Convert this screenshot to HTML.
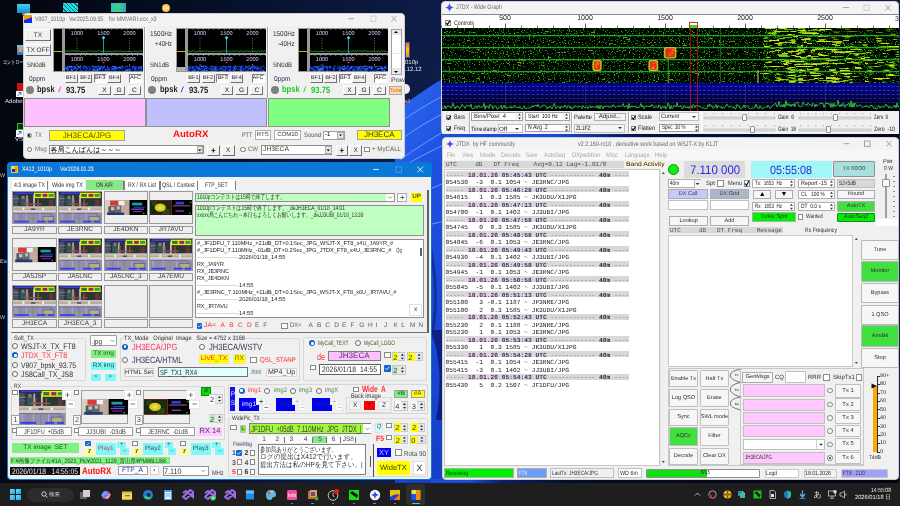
<!DOCTYPE html><html><head><meta charset="utf-8"><style>
html,body{margin:0;padding:0;width:900px;height:506px;overflow:hidden;background:#0a1228}
body{position:relative;font-family:"Liberation Sans",sans-serif;text-rendering:geometricPrecision}
div{position:absolute;box-sizing:border-box}
svg{position:absolute}
</style></head><body>
<svg style="left:0;top:0" width="900" height="506">
<defs>
<linearGradient id="bgL" x1="0" y1="0" x2="450" y2="60" gradientUnits="userSpaceOnUse"><stop offset="0" stop-color="#03060d"/><stop offset="0.5" stop-color="#07102a"/><stop offset="1" stop-color="#0e1e4a"/></linearGradient>
<linearGradient id="sw" x1="0" y1="0" x2="0.3" y2="1"><stop offset="0" stop-color="#2a6af0"/><stop offset="0.4" stop-color="#1e50e0"/><stop offset="1" stop-color="#1640c8"/></linearGradient>
</defs>
<rect width="900" height="506" fill="url(#bgL)"/>

<path d="M395 112 C 410 100, 430 85, 455 72 L 455 506 L 395 506 Z" fill="url(#sw)"/>
<g stroke="#8cc0ff" stroke-width="0.9" fill="none" opacity="0.75">
<path d="M400 122 Q 420 108 450 92"/>
<path d="M400 140 Q 420 125 450 110"/>
<path d="M400 160 Q 420 145 450 128"/>
<path d="M400 168 Q 420 156 450 142"/>
<path d="M428 190 Q 440 185 450 180"/>
<path d="M428 225 Q 440 222 450 220"/>
</g>
<path d="M431 330 Q 445 370 436 420 L 442 420 Q 450 370 442 330Z" fill="#0a1870" opacity="0.8"/>
<path d="M431 250 Q 440 300 431 340" stroke="#0a2080" stroke-width="3" fill="none" opacity="0.6"/>
</svg>
<div style="left:17px;top:4px;width:13px;height:9px;background:linear-gradient(180deg,#40d0f0,#1890c8)"></div>
<div style="left:22px;top:13px;width:4px;height:2px;background:#808080"></div>
<div style="left:63px;top:3px;width:15px;height:9px;background:repeating-linear-gradient(45deg,#20e0e0 0 2px,#106080 2px 3px)"></div>
<div style="left:111px;top:3px;width:15px;height:9px;background:linear-gradient(90deg,#30c0c0,#40d080,#30a0c0)"></div>
<div style="left:162px;top:4px;width:8px;height:8px;border-radius:50%;background:radial-gradient(#fff0a0,#f0a020)"></div>
<div style="left:17px;top:44.8px;width:7px;height:9.900000000000006px;background:linear-gradient(180deg,#80c0f0,#2070c0)"></div>
<div style="left:19px;top:47px;width:3px;height:5px;background:#f0a030"></div>
<div style="left:3px;top:59.82px;line-height:7.15px;font-size:5.5px;font-family:'Liberation Sans',sans-serif;color:#e8e8e8;white-space:pre;transform:scaleX(0.727);transform-origin:0 50%;">コントロー</div>
<div style="left:17px;top:83px;width:7px;height:7.599999999999994px;background:#d01010"></div>
<div style="left:16px;top:90.6px;width:7px;height:6.400000000000006px;background:#fff"></div>
<svg style="left:16px;top:90.6px" width="7" height="6.4"><path d="M1.5 5 L5 1.5 M2.5 1.5 H5 V4" stroke="#2060d0" stroke-width="0.9" fill="none"/></svg>
<div style="left:4.5px;top:98.60px;line-height:7.8px;font-size:6px;font-family:'Liberation Sans',sans-serif;color:#e8e8e8;white-space:pre;transform:scaleX(1.009);transform-origin:0 50%;">Adobe</div>
<div style="left:17px;top:122.8px;width:7px;height:7.200000000000003px;background:#103010;border:1px solid #30c030"></div>
<div style="left:16px;top:130px;width:7px;height:7px;background:#fff"></div>
<svg style="left:16px;top:130.3px" width="7" height="6.4"><path d="M1.5 5 L5 1.5 M2.5 1.5 H5 V4" stroke="#2060d0" stroke-width="0.9" fill="none"/></svg>
<div style="left:15px;top:136.90px;line-height:7.8px;font-size:6px;font-family:'Liberation Sans',sans-serif;color:#e8e8e8;white-space:pre;">VS</div>
<div style="left:0px;top:173.23px;line-height:7.15px;font-size:5.5px;font-family:'Liberation Sans',sans-serif;color:#c8c8c8;white-space:pre;">W</div>
<div style="left:0px;top:259.23px;line-height:7.15px;font-size:5.5px;font-family:'Liberation Sans',sans-serif;color:#c8c8c8;white-space:pre;">Ea</div>
<div style="left:0px;top:315.23px;line-height:7.15px;font-size:5.5px;font-family:'Liberation Sans',sans-serif;color:#c8c8c8;white-space:pre;">W</div>
<div style="left:405px;top:42.3px;width:5px;height:15.300000000000004px;background:linear-gradient(180deg,#ff6a00,#ffd000,#ff8000);border:0.5px solid #4040c0"></div>
<div style="left:405px;top:59.90px;line-height:7.8px;font-size:6px;font-family:'Liberation Sans',sans-serif;color:#e0e0e0;white-space:pre;">010p</div>
<div style="left:405px;top:66.90px;line-height:7.8px;font-size:6px;font-family:'Liberation Sans',sans-serif;color:#e0e0e0;white-space:pre;">.12.12</div>
<div style="left:401px;top:84px;width:9px;height:10px;border-radius:50%;background:#f0f0f0"></div>
<div style="left:404.5px;top:98.72px;line-height:7.15px;font-size:5.5px;font-family:'Liberation Sans',sans-serif;color:#ff9ab0;white-space:pre;">all</div>
<div style="left:441px;top:133px;width:458px;height:5px;background:linear-gradient(90deg,#1a4cd8 0%,#1a4cd8 25%,#0c2a90 35%,#061040 45%,#03081a 100%)"></div>
<div style="left:431px;top:479px;width:468px;height:5px;background:linear-gradient(90deg,#1a4cd8 0%,#1a4cd8 8%,#0a2070 15%,#050c28 30%,#03060f 100%)"></div>
<div style="left:23px;top:13px;width:382px;height:146px;background:#f0f0f0;border-radius:4px;border:1px solid #d0d0d0"></div>
<div style="left:24px;top:14px;width:380px;height:12px;background:#f3f3f3;border-radius:4px 4px 0 0"></div>
<div style="left:7px;top:162px;width:425px;height:318px;background:#f0f0f0;border-radius:4px;border:1px solid #0a78d7"></div>
<div style="left:7px;top:162px;width:425px;height:15px;background:#0a78d7;border-radius:4px 4px 0 0"></div>
<div style="left:441px;top:1px;width:458px;height:133px;background:#f0f0f0;border-radius:4px;border:1px solid #d0d0d0"></div>
<div style="left:442px;top:2px;width:456px;height:12px;background:#f3f3f3;border-radius:4px 4px 0 0"></div>
<div style="left:442px;top:137px;width:457px;height:343px;background:#f0f0f0;border-radius:4px;border:1px solid #d0d0d0"></div>
<div style="left:24px;top:15px;width:8px;height:8px;background:linear-gradient(160deg,#ff9a00 0%,#ff9a00 45%,#0a2cff 50%,#0a2cff 100%)"></div>
<div style="left:34.6px;top:15.58px;line-height:8.45px;font-size:6.5px;font-family:'Liberation Sans',sans-serif;color:#6a6a6a;white-space:pre;transform:scaleX(0.819);transform-origin:0 50%;">V907_1010p</div>
<div style="left:69.4px;top:15.58px;line-height:8.45px;font-size:6.5px;font-family:'Liberation Sans',sans-serif;color:#6a6a6a;white-space:pre;transform:scaleX(0.811);transform-origin:0 50%;">Ver2025.09.05</div>
<div style="left:108.9px;top:15.58px;line-height:8.45px;font-size:6.5px;font-family:'Liberation Sans',sans-serif;color:#6a6a6a;white-space:pre;transform:scaleX(0.831);transform-origin:0 50%;">for MMVARI.ocx_x3</div>
<svg style="left:340px;top:13px" width="65" height="12"><path d="M8.5 5.7 H14" stroke="#909090" stroke-width="0.8"/><rect x="31" y="3" width="5" height="5.5" fill="none" stroke="#c8c8c8" stroke-width="0.8"/><path d="M51.5 3 L56.5 8.5 M56.5 3 L51.5 8.5" stroke="#909090" stroke-width="0.8"/></svg>
<div style="left:53px;top:28px;width:90px;height:44px;background:#9a9a9a"></div>
<div style="left:54px;top:29px;width:8px;height:42px;background:#000"></div>
<div style="left:54px;top:51px;width:8px;height:1px;background:#c8b400"></div>
<div style="left:64.5px;top:29px;width:78.0px;height:24px;background:#000"></div>
<div style="left:64.5px;top:55px;width:78.0px;height:16px;background:#000"></div>
<svg style="left:53px;top:28px" width="90" height="44"><rect x="11.5" y="1" width="0.6" height="1" fill="#aaa"/><rect x="11.5" y="27" width="0.6" height="1" fill="#aaa"/><rect x="16.7" y="1" width="0.6" height="1" fill="#aaa"/><rect x="16.7" y="27" width="0.6" height="1" fill="#aaa"/><rect x="21.9" y="1" width="0.6" height="1" fill="#aaa"/><rect x="21.9" y="27" width="0.6" height="1" fill="#aaa"/><rect x="27.1" y="1" width="0.6" height="1" fill="#aaa"/><rect x="27.1" y="27" width="0.6" height="1" fill="#aaa"/><rect x="32.3" y="1" width="0.6" height="1" fill="#aaa"/><rect x="32.3" y="27" width="0.6" height="1" fill="#aaa"/><rect x="37.5" y="1" width="0.6" height="1" fill="#aaa"/><rect x="37.5" y="27" width="0.6" height="1" fill="#aaa"/><rect x="42.7" y="1" width="0.6" height="1" fill="#aaa"/><rect x="42.7" y="27" width="0.6" height="1" fill="#aaa"/><rect x="47.9" y="1" width="0.6" height="1" fill="#aaa"/><rect x="47.9" y="27" width="0.6" height="1" fill="#aaa"/><rect x="53.1" y="1" width="0.6" height="1" fill="#aaa"/><rect x="53.1" y="27" width="0.6" height="1" fill="#aaa"/><rect x="58.3" y="1" width="0.6" height="1" fill="#aaa"/><rect x="58.3" y="27" width="0.6" height="1" fill="#aaa"/><rect x="63.5" y="1" width="0.6" height="1" fill="#aaa"/><rect x="63.5" y="27" width="0.6" height="1" fill="#aaa"/><rect x="68.7" y="1" width="0.6" height="1" fill="#aaa"/><rect x="68.7" y="27" width="0.6" height="1" fill="#aaa"/><rect x="73.9" y="1" width="0.6" height="1" fill="#aaa"/><rect x="73.9" y="27" width="0.6" height="1" fill="#aaa"/><rect x="79.1" y="1" width="0.6" height="1" fill="#aaa"/><rect x="79.1" y="27" width="0.6" height="1" fill="#aaa"/><rect x="84.3" y="1" width="0.6" height="1" fill="#aaa"/><rect x="84.3" y="27" width="0.6" height="1" fill="#aaa"/><rect x="89.5" y="1" width="0.6" height="1" fill="#aaa"/><rect x="89.5" y="27" width="0.6" height="1" fill="#aaa"/><line x1="24" y1="10" x2="24" y2="24" stroke="#bbb" stroke-width="0.6" stroke-dasharray="1 1.5"/><line x1="24" y1="36" x2="24" y2="38" stroke="#bbb" stroke-width="0.6"/><line x1="76.5" y1="10" x2="76.5" y2="24" stroke="#bbb" stroke-width="0.6" stroke-dasharray="1 1.5"/><line x1="76.5" y1="36" x2="76.5" y2="38" stroke="#bbb" stroke-width="0.6"/><polyline points="11.5,23.1 12.5,22.9 13.5,23.5 14.5,22.8 15.5,23.3 16.5,23.1 17.5,22.8 18.5,23.3 19.5,22.7 20.5,23.2 21.5,22.8 22.5,22.8 23.5,23.2 24.5,23.7 25.5,22.8 26.5,23.0 27.5,23.5 28.5,23.8 29.5,23.4 30.5,23.2 31.5,23.9 32.5,22.8 33.5,23.7 34.5,23.0 35.5,22.9 36.5,22.8 37.5,23.1 38.5,23.7 39.5,22.9 40.5,23.4 41.5,23.5 42.5,23.1 43.5,23.4 44.5,22.8 45.5,22.8 46.5,22.9 47.5,23.5 48.5,23.2 49.5,23.1 50.5,23.4 51.5,23.2 52.5,23.1 53.5,23.7 54.5,23.5 55.5,23.0 56.5,23.4 57.5,23.3 58.5,23.8 59.5,23.6 60.5,23.0 61.5,23.9 62.5,22.8 63.5,23.2 64.5,23.6 65.5,22.9 66.5,23.3 67.5,22.7 68.5,23.5 69.5,23.6 70.5,23.4 71.5,23.8 72.5,23.1 73.5,23.5 74.5,23.4 75.5,23.4 76.5,23.2 77.5,23.7 78.5,23.8 79.5,23.3 80.5,23.5 81.5,22.8 82.5,23.5 83.5,23.5 84.5,23.9 85.5,23.7 86.5,23.0 87.5,23.2 88.5,23.5 89.5,22.7" stroke="#1ec81e" stroke-width="0.8" fill="none"/><line x1="50.5" y1="10" x2="50.5" y2="25" stroke="#19c8c8" stroke-width="0.8"/><path d="M50.5 8 L52.3 9.8 L50.5 11.6 L48.7 9.8 Z" fill="#33f0f0"/><rect x="47.1" y="38.4" width="1.2" height="0.9" fill="#1030ff"/><rect x="49.5" y="38.6" width="1.2" height="0.9" fill="#0a20c0"/><rect x="21.5" y="38.8" width="1.2" height="0.9" fill="#40a0ff"/><rect x="82.1" y="40.0" width="1.2" height="0.9" fill="#2060ff"/><rect x="46.1" y="40.3" width="1.2" height="0.9" fill="#2060ff"/><rect x="74.6" y="41.9" width="1.2" height="0.9" fill="#0a20c0"/><rect x="65.9" y="42.5" width="1.2" height="0.9" fill="#40a0ff"/><rect x="85.2" y="38.3" width="1.2" height="0.9" fill="#2060ff"/><rect x="23.1" y="40.9" width="1.2" height="0.9" fill="#1030ff"/><rect x="48.8" y="40.5" width="1.2" height="0.9" fill="#0a20c0"/><rect x="33.2" y="38.2" width="1.2" height="0.9" fill="#1840e0"/><rect x="39.9" y="40.4" width="1.2" height="0.9" fill="#2060ff"/><rect x="64.7" y="40.1" width="1.2" height="0.9" fill="#1840e0"/><rect x="61.9" y="41.3" width="1.2" height="0.9" fill="#40a0ff"/><rect x="80.8" y="41.5" width="1.2" height="0.9" fill="#1840e0"/><rect x="41.7" y="39.5" width="1.2" height="0.9" fill="#1030ff"/><rect x="48.6" y="39.5" width="1.2" height="0.9" fill="#2060ff"/><rect x="16.7" y="38.6" width="1.2" height="0.9" fill="#2060ff"/><rect x="20.0" y="40.6" width="1.2" height="0.9" fill="#1030ff"/><rect x="11.5" y="38.3" width="1.2" height="0.9" fill="#1030ff"/><rect x="84.6" y="40.6" width="1.2" height="0.9" fill="#1030ff"/><rect x="78.8" y="40.6" width="1.2" height="0.9" fill="#2060ff"/><rect x="60.3" y="42.4" width="1.2" height="0.9" fill="#1840e0"/><rect x="39.5" y="38.1" width="1.2" height="0.9" fill="#40a0ff"/><rect x="88.0" y="39.9" width="1.2" height="0.9" fill="#40a0ff"/><rect x="35.5" y="38.2" width="1.2" height="0.9" fill="#0a20c0"/><rect x="68.5" y="39.9" width="1.2" height="0.9" fill="#2060ff"/><rect x="51.3" y="38.5" width="1.2" height="0.9" fill="#1840e0"/><rect x="39.4" y="41.0" width="1.2" height="0.9" fill="#1030ff"/><rect x="69.9" y="39.0" width="1.2" height="0.9" fill="#1030ff"/><rect x="65.1" y="38.8" width="1.2" height="0.9" fill="#0a20c0"/><rect x="81.4" y="39.3" width="1.2" height="0.9" fill="#2060ff"/><rect x="52.5" y="41.5" width="1.2" height="0.9" fill="#0a20c0"/><rect x="60.5" y="40.6" width="1.2" height="0.9" fill="#2060ff"/><rect x="73.6" y="41.7" width="1.2" height="0.9" fill="#2060ff"/><rect x="26.9" y="40.0" width="1.2" height="0.9" fill="#1030ff"/><rect x="87.7" y="41.5" width="1.2" height="0.9" fill="#40a0ff"/><rect x="31.5" y="41.0" width="1.2" height="0.9" fill="#0a20c0"/><rect x="45.9" y="42.3" width="1.2" height="0.9" fill="#0a20c0"/><rect x="85.0" y="39.4" width="1.2" height="0.9" fill="#2060ff"/><rect x="19.4" y="39.9" width="1.2" height="0.9" fill="#0a20c0"/><rect x="27.2" y="40.7" width="1.2" height="0.9" fill="#1840e0"/><rect x="76.2" y="39.9" width="1.2" height="0.9" fill="#0a20c0"/><rect x="73.1" y="37.9" width="1.2" height="0.9" fill="#1030ff"/><rect x="81.6" y="41.5" width="1.2" height="0.9" fill="#2060ff"/><rect x="48.3" y="38.4" width="1.2" height="0.9" fill="#0a20c0"/><rect x="18.2" y="42.3" width="1.2" height="0.9" fill="#40a0ff"/><rect x="47.2" y="41.3" width="1.2" height="0.9" fill="#1030ff"/><rect x="67.3" y="38.4" width="1.2" height="0.9" fill="#2060ff"/><rect x="13.6" y="40.5" width="1.2" height="0.9" fill="#40a0ff"/><rect x="73.6" y="38.2" width="1.2" height="0.9" fill="#1840e0"/><rect x="87.0" y="40.9" width="1.2" height="0.9" fill="#0a20c0"/><rect x="23.5" y="40.3" width="1.2" height="0.9" fill="#1030ff"/><rect x="12.6" y="42.5" width="1.2" height="0.9" fill="#1030ff"/><rect x="52.0" y="42.3" width="1.2" height="0.9" fill="#40a0ff"/><rect x="87.5" y="38.5" width="1.2" height="0.9" fill="#2060ff"/><rect x="13.7" y="38.6" width="1.2" height="0.9" fill="#1840e0"/><rect x="30.0" y="40.5" width="1.2" height="0.9" fill="#0a20c0"/><rect x="53.4" y="41.8" width="1.2" height="0.9" fill="#1030ff"/><rect x="81.6" y="39.3" width="1.2" height="0.9" fill="#40a0ff"/><rect x="62.5" y="41.7" width="1.2" height="0.9" fill="#1840e0"/><rect x="43.9" y="42.2" width="1.2" height="0.9" fill="#1840e0"/><rect x="21.6" y="38.3" width="1.2" height="0.9" fill="#1840e0"/><rect x="12.9" y="39.7" width="1.2" height="0.9" fill="#2060ff"/><rect x="58.4" y="41.5" width="1.2" height="0.9" fill="#2060ff"/><rect x="24.8" y="39.9" width="1.2" height="0.9" fill="#1030ff"/><rect x="54.3" y="39.2" width="1.2" height="0.9" fill="#1840e0"/><rect x="52.4" y="40.0" width="1.2" height="0.9" fill="#1030ff"/><rect x="79.5" y="37.8" width="1.2" height="0.9" fill="#2060ff"/><rect x="32.8" y="41.4" width="1.2" height="0.9" fill="#1840e0"/><rect x="46.3" y="37.6" width="1.2" height="0.9" fill="#1030ff"/><rect x="45.6" y="40.6" width="1.2" height="0.9" fill="#1840e0"/><rect x="58.2" y="38.5" width="1.2" height="0.9" fill="#0a20c0"/><rect x="46.3" y="40.2" width="1.2" height="0.9" fill="#40a0ff"/><rect x="50.6" y="38.8" width="1.2" height="0.9" fill="#1840e0"/><rect x="79.0" y="42.3" width="1.2" height="0.9" fill="#0a20c0"/><rect x="82.6" y="42.1" width="1.2" height="0.9" fill="#2060ff"/><rect x="76.2" y="38.2" width="1.2" height="0.9" fill="#1030ff"/><rect x="41.7" y="39.1" width="1.2" height="0.9" fill="#2060ff"/><rect x="44.5" y="38.6" width="1.2" height="0.9" fill="#0a20c0"/><rect x="71.9" y="42.1" width="1.2" height="0.9" fill="#2060ff"/><rect x="83.8" y="40.8" width="1.2" height="0.9" fill="#0a20c0"/><rect x="22.5" y="42.0" width="1.2" height="0.9" fill="#40a0ff"/><rect x="28.4" y="42.4" width="1.2" height="0.9" fill="#40a0ff"/><rect x="79.6" y="38.3" width="1.2" height="0.9" fill="#2060ff"/><rect x="23.9" y="39.7" width="1.2" height="0.9" fill="#1840e0"/><rect x="42.6" y="39.6" width="1.2" height="0.9" fill="#0a20c0"/><rect x="36.0" y="41.2" width="1.2" height="0.9" fill="#1030ff"/><rect x="37.5" y="39.8" width="1.2" height="0.9" fill="#1030ff"/><rect x="41.1" y="40.1" width="1.2" height="0.9" fill="#0a20c0"/><rect x="50.9" y="37.8" width="1.2" height="0.9" fill="#2060ff"/><rect x="86.3" y="38.0" width="1.2" height="0.9" fill="#0a20c0"/><rect x="32.4" y="42.1" width="1.2" height="0.9" fill="#2060ff"/><rect x="32.3" y="38.2" width="1.2" height="0.9" fill="#40a0ff"/><rect x="76.9" y="40.9" width="1.2" height="0.9" fill="#0a20c0"/><rect x="42.8" y="40.2" width="1.2" height="0.9" fill="#1840e0"/><rect x="55.4" y="41.1" width="1.2" height="0.9" fill="#1030ff"/><rect x="33.0" y="41.6" width="1.2" height="0.9" fill="#2060ff"/><rect x="44.2" y="37.9" width="1.2" height="0.9" fill="#1030ff"/><rect x="60.4" y="41.6" width="1.2" height="0.9" fill="#1030ff"/><rect x="58.3" y="38.6" width="1.2" height="0.9" fill="#0a20c0"/><rect x="77.9" y="39.8" width="1.2" height="0.9" fill="#0a20c0"/><rect x="88.1" y="39.6" width="1.2" height="0.9" fill="#0a20c0"/><rect x="59.4" y="37.7" width="1.2" height="0.9" fill="#2060ff"/><rect x="83.7" y="42.4" width="1.2" height="0.9" fill="#0a20c0"/><rect x="15.4" y="38.5" width="1.2" height="0.9" fill="#0a20c0"/><rect x="59.9" y="40.2" width="1.2" height="0.9" fill="#2060ff"/><rect x="33.8" y="40.1" width="1.2" height="0.9" fill="#2060ff"/><rect x="32.3" y="41.6" width="1.2" height="0.9" fill="#0a20c0"/><rect x="14.3" y="37.6" width="1.2" height="0.9" fill="#1840e0"/><rect x="53.9" y="38.5" width="1.2" height="0.9" fill="#40a0ff"/><rect x="30.4" y="39.8" width="1.2" height="0.9" fill="#40a0ff"/><rect x="62.1" y="40.3" width="1.2" height="0.9" fill="#40a0ff"/><rect x="86.2" y="39.1" width="1.2" height="0.9" fill="#2060ff"/><rect x="87.1" y="39.2" width="1.2" height="0.9" fill="#2060ff"/><rect x="42.7" y="39.3" width="1.2" height="0.9" fill="#1030ff"/><rect x="75.9" y="37.6" width="1.2" height="0.9" fill="#0a20c0"/><rect x="44.7" y="37.8" width="1.2" height="0.9" fill="#40a0ff"/><rect x="78.5" y="40.9" width="1.2" height="0.9" fill="#0a20c0"/><rect x="57.6" y="41.0" width="1.2" height="0.9" fill="#1030ff"/><rect x="46.9" y="38.3" width="1.2" height="0.9" fill="#40a0ff"/><rect x="11.8" y="39.4" width="1.2" height="0.9" fill="#0a20c0"/><rect x="86.4" y="40.3" width="1.2" height="0.9" fill="#2060ff"/><rect x="14.2" y="42.0" width="1.2" height="0.9" fill="#2060ff"/><rect x="39.0" y="37.5" width="1.2" height="0.9" fill="#40a0ff"/><rect x="18.0" y="38.9" width="1.2" height="0.9" fill="#2060ff"/><rect x="30.6" y="41.5" width="1.2" height="0.9" fill="#1030ff"/><rect x="31.8" y="38.0" width="1.2" height="0.9" fill="#40a0ff"/><rect x="56.7" y="39.5" width="1.2" height="0.9" fill="#0a20c0"/><rect x="34.9" y="38.7" width="1.2" height="0.9" fill="#1840e0"/><rect x="85.2" y="41.9" width="1.2" height="0.9" fill="#2060ff"/><rect x="62.1" y="41.2" width="1.2" height="0.9" fill="#1840e0"/><rect x="41.5" y="39.2" width="1.2" height="0.9" fill="#40a0ff"/><rect x="23.0" y="41.2" width="1.2" height="0.9" fill="#2060ff"/><rect x="14.9" y="41.8" width="1.2" height="0.9" fill="#1840e0"/><rect x="59.8" y="41.2" width="1.2" height="0.9" fill="#1840e0"/><rect x="22.2" y="40.2" width="1.2" height="0.9" fill="#1840e0"/><rect x="55.3" y="41.6" width="1.2" height="0.9" fill="#1030ff"/><rect x="75.1" y="40.5" width="1.2" height="0.9" fill="#2060ff"/><rect x="18.1" y="37.7" width="1.2" height="0.9" fill="#0a20c0"/><rect x="85.4" y="39.4" width="1.2" height="0.9" fill="#40a0ff"/><rect x="54.5" y="40.7" width="1.2" height="0.9" fill="#1840e0"/><rect x="63.9" y="40.0" width="1.2" height="0.9" fill="#1030ff"/><rect x="46.7" y="37.9" width="1.2" height="0.9" fill="#1840e0"/><rect x="80.6" y="38.0" width="1.2" height="0.9" fill="#1840e0"/><rect x="16.6" y="41.3" width="1.2" height="0.9" fill="#0a20c0"/><rect x="73.8" y="41.8" width="1.2" height="0.9" fill="#2060ff"/><rect x="67.7" y="38.5" width="1.2" height="0.9" fill="#40a0ff"/><rect x="49.5" y="39.5" width="1.2" height="0.9" fill="#40a0ff"/><rect x="81.6" y="39.0" width="1.2" height="0.9" fill="#1030ff"/><rect x="59.0" y="40.8" width="1.2" height="0.9" fill="#1030ff"/><rect x="57.7" y="39.2" width="1.2" height="0.9" fill="#0a20c0"/><rect x="59.3" y="38.2" width="1.2" height="0.9" fill="#40a0ff"/><rect x="16.2" y="38.9" width="1.2" height="0.9" fill="#1030ff"/><rect x="64.8" y="40.9" width="1.2" height="0.9" fill="#0a20c0"/><rect x="66.1" y="39.0" width="1.2" height="0.9" fill="#40a0ff"/><rect x="47.4" y="38.1" width="1.2" height="0.9" fill="#1840e0"/><rect x="26.8" y="42.5" width="1.2" height="0.9" fill="#40a0ff"/><rect x="12.8" y="39.8" width="1.2" height="0.9" fill="#1840e0"/><rect x="86.0" y="39.8" width="1.2" height="0.9" fill="#0a20c0"/><rect x="41.3" y="42.2" width="1.2" height="0.9" fill="#2060ff"/><rect x="17.2" y="38.0" width="1.2" height="0.9" fill="#1840e0"/><rect x="31.7" y="39.3" width="1.2" height="0.9" fill="#1840e0"/><rect x="74.7" y="40.1" width="1.2" height="0.9" fill="#1030ff"/><rect x="65.7" y="38.7" width="1.2" height="0.9" fill="#40a0ff"/><rect x="41.8" y="38.3" width="1.2" height="0.9" fill="#40a0ff"/><rect x="64.0" y="39.6" width="1.2" height="0.9" fill="#2060ff"/><rect x="43.5" y="39.4" width="1.2" height="0.9" fill="#1030ff"/><rect x="76.2" y="37.5" width="1.2" height="0.9" fill="#0a20c0"/><rect x="76.1" y="38.1" width="1.2" height="0.9" fill="#2060ff"/><rect x="66.4" y="42.1" width="1.2" height="0.9" fill="#0a20c0"/><rect x="31.0" y="37.8" width="1.2" height="0.9" fill="#40a0ff"/><rect x="88.4" y="40.5" width="1.2" height="0.9" fill="#0a20c0"/><rect x="82.8" y="41.4" width="1.2" height="0.9" fill="#1030ff"/><rect x="33.1" y="37.8" width="1.2" height="0.9" fill="#0a20c0"/><rect x="60.4" y="38.3" width="1.2" height="0.9" fill="#0a20c0"/><rect x="45.1" y="39.1" width="1.2" height="0.9" fill="#0a20c0"/><rect x="72.0" y="39.7" width="1.2" height="0.9" fill="#1030ff"/><rect x="74.0" y="40.7" width="1.2" height="0.9" fill="#1840e0"/><rect x="53.8" y="41.2" width="1.2" height="0.9" fill="#1030ff"/><rect x="83.4" y="39.6" width="1.2" height="0.9" fill="#1840e0"/><rect x="69.5" y="40.8" width="1.2" height="0.9" fill="#0a20c0"/><rect x="48.9" y="42.2" width="1.2" height="0.9" fill="#1840e0"/><rect x="21.3" y="39.9" width="1.2" height="0.9" fill="#0a20c0"/><rect x="33.2" y="38.8" width="1.2" height="0.9" fill="#0a20c0"/><rect x="42.8" y="38.7" width="1.2" height="0.9" fill="#40a0ff"/><rect x="54.4" y="39.5" width="1.2" height="0.9" fill="#2060ff"/><rect x="61.0" y="37.9" width="1.2" height="0.9" fill="#1840e0"/><rect x="81.3" y="40.0" width="1.2" height="0.9" fill="#2060ff"/><rect x="46.4" y="39.2" width="1.2" height="0.9" fill="#40a0ff"/><rect x="44.4" y="40.3" width="1.2" height="0.9" fill="#2060ff"/><rect x="18.5" y="39.2" width="1.2" height="0.9" fill="#1030ff"/><rect x="36.1" y="39.4" width="1.2" height="0.9" fill="#1840e0"/><rect x="27.1" y="37.6" width="1.2" height="0.9" fill="#40a0ff"/><rect x="41.0" y="41.3" width="1.2" height="0.9" fill="#2060ff"/><rect x="40.5" y="39.2" width="1.2" height="0.9" fill="#1030ff"/><rect x="49.9" y="40.4" width="1.2" height="0.9" fill="#0a20c0"/><rect x="21.2" y="40.1" width="1.2" height="0.9" fill="#2060ff"/><rect x="18.6" y="42.1" width="1.2" height="0.9" fill="#40a0ff"/><rect x="42.3" y="39.8" width="1.2" height="0.9" fill="#0a20c0"/><rect x="76.8" y="42.0" width="1.2" height="0.9" fill="#1030ff"/><rect x="21.3" y="39.7" width="1.2" height="0.9" fill="#40a0ff"/><rect x="86.1" y="40.0" width="1.2" height="0.9" fill="#1030ff"/><rect x="41.6" y="42.2" width="1.2" height="0.9" fill="#1840e0"/><rect x="77.4" y="42.5" width="1.2" height="0.9" fill="#2060ff"/><rect x="71.8" y="38.6" width="1.2" height="0.9" fill="#2060ff"/><rect x="51.7" y="41.0" width="1.2" height="0.9" fill="#40a0ff"/><rect x="18.0" y="41.5" width="1.2" height="0.9" fill="#1030ff"/><rect x="71.7" y="38.7" width="1.2" height="0.9" fill="#1030ff"/><rect x="61.2" y="39.0" width="1.2" height="0.9" fill="#2060ff"/><rect x="59.7" y="40.2" width="1.2" height="0.9" fill="#40a0ff"/><rect x="65.3" y="38.1" width="1.2" height="0.9" fill="#1030ff"/><rect x="34.6" y="42.3" width="1.2" height="0.9" fill="#2060ff"/><rect x="41.4" y="38.6" width="1.2" height="0.9" fill="#1840e0"/><rect x="11.6" y="40.2" width="1.2" height="0.9" fill="#40a0ff"/><rect x="33.0" y="39.1" width="1.2" height="0.9" fill="#2060ff"/><rect x="48.1" y="38.7" width="1.2" height="0.9" fill="#2060ff"/><rect x="13.8" y="39.6" width="1.2" height="0.9" fill="#0a20c0"/><rect x="15.8" y="38.5" width="1.2" height="0.9" fill="#40a0ff"/><rect x="17.7" y="38.7" width="1.2" height="0.9" fill="#40a0ff"/><rect x="82.7" y="38.7" width="1.2" height="0.9" fill="#1030ff"/><rect x="65.1" y="41.2" width="1.2" height="0.9" fill="#0a20c0"/><rect x="64.1" y="38.5" width="1.2" height="0.9" fill="#0a20c0"/><rect x="68.4" y="40.1" width="1.2" height="0.9" fill="#2060ff"/><rect x="49.7" y="38.5" width="1.2" height="0.9" fill="#2060ff"/><rect x="29.3" y="38.6" width="1.2" height="0.9" fill="#0a20c0"/><rect x="19.9" y="40.7" width="1.2" height="0.9" fill="#1840e0"/><rect x="25.9" y="38.6" width="1.2" height="0.9" fill="#40a0ff"/><rect x="81.6" y="37.8" width="1.2" height="0.9" fill="#1840e0"/><rect x="22.8" y="39.5" width="1.2" height="0.9" fill="#2060ff"/><rect x="13.3" y="40.5" width="1.2" height="0.9" fill="#40a0ff"/><rect x="15.5" y="37.8" width="1.2" height="0.9" fill="#40a0ff"/><rect x="46.1" y="41.1" width="1.2" height="0.9" fill="#0a20c0"/><rect x="67.9" y="42.6" width="1.2" height="0.9" fill="#2060ff"/><rect x="36.9" y="38.4" width="1.2" height="0.9" fill="#1840e0"/><rect x="69.0" y="37.7" width="1.2" height="0.9" fill="#40a0ff"/><rect x="76.1" y="42.5" width="1.2" height="0.9" fill="#40a0ff"/><rect x="24.5" y="37.5" width="1.2" height="0.9" fill="#0a20c0"/><rect x="17.7" y="39.6" width="1.2" height="0.9" fill="#1030ff"/><rect x="54.7" y="41.4" width="1.2" height="0.9" fill="#40a0ff"/><rect x="39.0" y="41.7" width="1.2" height="0.9" fill="#40a0ff"/><rect x="18.3" y="41.1" width="1.2" height="0.9" fill="#2060ff"/><rect x="40.2" y="42.2" width="1.2" height="0.9" fill="#2060ff"/><rect x="36.4" y="41.3" width="1.2" height="0.9" fill="#40a0ff"/><rect x="13.8" y="39.6" width="1.2" height="0.9" fill="#40a0ff"/><rect x="14.6" y="37.7" width="1.2" height="0.9" fill="#1030ff"/><rect x="73.4" y="37.8" width="1.2" height="0.9" fill="#2060ff"/><rect x="69.0" y="42.1" width="1.2" height="0.9" fill="#0a20c0"/><rect x="39.4" y="39.2" width="1.2" height="0.9" fill="#1840e0"/><rect x="14.9" y="41.3" width="1.2" height="0.9" fill="#0a20c0"/><rect x="82.7" y="39.0" width="1.2" height="0.9" fill="#1840e0"/><rect x="82.1" y="40.7" width="1.2" height="0.9" fill="#1030ff"/><rect x="13.4" y="38.7" width="1.2" height="0.9" fill="#40a0ff"/><rect x="66.6" y="39.9" width="1.2" height="0.9" fill="#40a0ff"/><rect x="72.3" y="42.2" width="1.2" height="0.9" fill="#40a0ff"/><rect x="21.7" y="40.0" width="1.2" height="0.9" fill="#1030ff"/><rect x="73.3" y="41.3" width="1.2" height="0.9" fill="#2060ff"/><rect x="58.3" y="39.2" width="1.2" height="0.9" fill="#0a20c0"/><rect x="47.0" y="41.5" width="1.2" height="0.9" fill="#1840e0"/><rect x="17.6" y="38.5" width="1.2" height="0.9" fill="#2060ff"/><rect x="30.5" y="37.8" width="1.2" height="0.9" fill="#1030ff"/><rect x="48.6" y="40.3" width="1.2" height="0.9" fill="#2060ff"/><rect x="87.0" y="42.0" width="1.2" height="0.9" fill="#1030ff"/><rect x="31.9" y="37.9" width="1.2" height="0.9" fill="#1030ff"/><rect x="43.9" y="42.5" width="1.2" height="0.9" fill="#40a0ff"/><rect x="24.8" y="38.2" width="1.2" height="0.9" fill="#40a0ff"/><rect x="59.3" y="40.9" width="1.2" height="0.9" fill="#1840e0"/><rect x="76.7" y="40.9" width="1.2" height="0.9" fill="#1030ff"/><rect x="71.5" y="39.0" width="1.2" height="0.9" fill="#0a20c0"/><rect x="55.2" y="39.4" width="1.2" height="0.9" fill="#0a20c0"/><rect x="26.8" y="38.8" width="1.2" height="0.9" fill="#2060ff"/><rect x="29.6" y="38.9" width="1.2" height="0.9" fill="#1840e0"/><rect x="26.0" y="37.8" width="1.2" height="0.9" fill="#0a20c0"/><rect x="87.9" y="40.1" width="1.2" height="0.9" fill="#2060ff"/><rect x="61.5" y="38.0" width="1.2" height="0.9" fill="#40a0ff"/><rect x="87.8" y="38.0" width="1.2" height="0.9" fill="#40a0ff"/><rect x="79.5" y="38.7" width="1.2" height="0.9" fill="#40a0ff"/><rect x="81.9" y="37.7" width="1.2" height="0.9" fill="#0a20c0"/><rect x="29.4" y="37.8" width="1.2" height="0.9" fill="#1840e0"/><rect x="86.4" y="40.5" width="1.2" height="0.9" fill="#1030ff"/><rect x="40.2" y="41.9" width="1.2" height="0.9" fill="#40a0ff"/><rect x="57.9" y="41.5" width="1.2" height="0.9" fill="#1030ff"/><rect x="19.6" y="40.5" width="1.2" height="0.9" fill="#1840e0"/><rect x="38.4" y="37.7" width="1.2" height="0.9" fill="#0a20c0"/><rect x="22.4" y="38.5" width="1.2" height="0.9" fill="#0a20c0"/><rect x="14.4" y="41.2" width="1.2" height="0.9" fill="#2060ff"/><rect x="74.2" y="41.7" width="1.2" height="0.9" fill="#40a0ff"/><rect x="63.7" y="38.4" width="1.2" height="0.9" fill="#0a20c0"/><rect x="17.5" y="37.7" width="1.2" height="0.9" fill="#40a0ff"/><rect x="53.7" y="37.8" width="1.2" height="0.9" fill="#1030ff"/><rect x="72.8" y="40.9" width="1.2" height="0.9" fill="#2060ff"/><rect x="60.7" y="38.0" width="1.2" height="0.9" fill="#2060ff"/><rect x="42.1" y="38.9" width="1.2" height="0.9" fill="#0a20c0"/><rect x="62.9" y="39.6" width="1.2" height="0.9" fill="#1030ff"/><rect x="35.6" y="40.4" width="1.2" height="0.9" fill="#0a20c0"/><rect x="43.4" y="37.6" width="1.2" height="0.9" fill="#0a20c0"/><rect x="61.1" y="39.5" width="1.2" height="0.9" fill="#40a0ff"/><rect x="27.2" y="37.5" width="1.2" height="0.9" fill="#2060ff"/><rect x="44.1" y="41.7" width="1.2" height="0.9" fill="#40a0ff"/><rect x="56.0" y="39.4" width="1.2" height="0.9" fill="#2060ff"/><rect x="21.5" y="37.8" width="1.2" height="0.9" fill="#2060ff"/><rect x="60.8" y="42.1" width="1.2" height="0.9" fill="#1030ff"/><rect x="55.6" y="42.2" width="1.2" height="0.9" fill="#1840e0"/><rect x="24.7" y="39.3" width="1.2" height="0.9" fill="#2060ff"/><rect x="51.6" y="42.2" width="1.2" height="0.9" fill="#1030ff"/><rect x="41.0" y="41.3" width="1.2" height="0.9" fill="#2060ff"/><rect x="34.7" y="41.8" width="1.2" height="0.9" fill="#1030ff"/><rect x="86.6" y="40.0" width="1.2" height="0.9" fill="#1030ff"/><rect x="58.3" y="40.7" width="1.2" height="0.9" fill="#1030ff"/><rect x="81.1" y="40.7" width="1.2" height="0.9" fill="#2060ff"/><rect x="60.8" y="41.9" width="1.2" height="0.9" fill="#1840e0"/><rect x="42.6" y="41.8" width="1.2" height="0.9" fill="#40a0ff"/><rect x="25.6" y="38.6" width="1.2" height="0.9" fill="#40a0ff"/><rect x="83.8" y="38.3" width="1.2" height="0.9" fill="#0a20c0"/><rect x="21.0" y="38.8" width="1.2" height="0.9" fill="#2060ff"/><rect x="14.7" y="40.4" width="1.2" height="0.9" fill="#1030ff"/><rect x="62.9" y="39.2" width="1.2" height="0.9" fill="#40a0ff"/><rect x="57.7" y="40.3" width="1.2" height="0.9" fill="#0a20c0"/><rect x="61.5" y="39.1" width="1.2" height="0.9" fill="#2060ff"/><rect x="44.3" y="40.9" width="1.2" height="0.9" fill="#40a0ff"/><rect x="50.3" y="38.4" width="1.2" height="0.9" fill="#1030ff"/><rect x="59.2" y="40.0" width="1.2" height="0.9" fill="#2060ff"/><rect x="45.9" y="40.7" width="1.2" height="0.9" fill="#40a0ff"/><rect x="75.9" y="41.6" width="1.2" height="0.9" fill="#40a0ff"/><rect x="19.7" y="38.2" width="1.2" height="0.9" fill="#40a0ff"/><rect x="39.6" y="41.6" width="1.2" height="0.9" fill="#1840e0"/><rect x="50.8" y="37.7" width="1.2" height="0.9" fill="#2060ff"/><rect x="17.8" y="41.2" width="1.2" height="0.9" fill="#1840e0"/><rect x="17.7" y="41.3" width="1.2" height="0.9" fill="#40a0ff"/><rect x="61.8" y="41.5" width="1.2" height="0.9" fill="#1030ff"/><path d="M49 34 L52 34 L50.5 35.6 Z" fill="#e03030"/></svg>
<div style="left:67px;top:31px;width:20px;height:6px;line-height:6px;text-align:center;font-size:5.6px;font-family:'Liberation Sans',sans-serif;color:#d0c8ff;white-space:pre;overflow:hidden;">1000</div>
<div style="left:67px;top:56.5px;width:20px;height:6.0px;line-height:6.0px;text-align:center;font-size:5.6px;font-family:'Liberation Sans',sans-serif;color:#d0c8ff;white-space:pre;overflow:hidden;">1000</div>
<div style="left:93.5px;top:31px;width:20.0px;height:6px;line-height:6px;text-align:center;font-size:5.6px;font-family:'Liberation Sans',sans-serif;color:#d0c8ff;white-space:pre;overflow:hidden;">1500</div>
<div style="left:93.5px;top:56.5px;width:20.0px;height:6.0px;line-height:6.0px;text-align:center;font-size:5.6px;font-family:'Liberation Sans',sans-serif;color:#d0c8ff;white-space:pre;overflow:hidden;">1500</div>
<div style="left:119.5px;top:31px;width:20.0px;height:6px;line-height:6px;text-align:center;font-size:5.6px;font-family:'Liberation Sans',sans-serif;color:#d0c8ff;white-space:pre;overflow:hidden;">2000</div>
<div style="left:119.5px;top:56.5px;width:20.0px;height:6.0px;line-height:6.0px;text-align:center;font-size:5.6px;font-family:'Liberation Sans',sans-serif;color:#d0c8ff;white-space:pre;overflow:hidden;">2000</div>
<div style="left:176px;top:28px;width:90px;height:44px;background:#9a9a9a"></div>
<div style="left:177px;top:29px;width:8px;height:42px;background:#000"></div>
<div style="left:177px;top:67px;width:8px;height:4px;background:#b0b0b0"></div>
<div style="left:177px;top:51px;width:8px;height:1px;background:#c8b400"></div>
<div style="left:187.5px;top:29px;width:78.0px;height:24px;background:#000"></div>
<div style="left:187.5px;top:55px;width:78.0px;height:16px;background:#000"></div>
<svg style="left:176px;top:28px" width="90" height="44"><rect x="11.5" y="1" width="0.6" height="1" fill="#aaa"/><rect x="11.5" y="27" width="0.6" height="1" fill="#aaa"/><rect x="16.7" y="1" width="0.6" height="1" fill="#aaa"/><rect x="16.7" y="27" width="0.6" height="1" fill="#aaa"/><rect x="21.9" y="1" width="0.6" height="1" fill="#aaa"/><rect x="21.9" y="27" width="0.6" height="1" fill="#aaa"/><rect x="27.1" y="1" width="0.6" height="1" fill="#aaa"/><rect x="27.1" y="27" width="0.6" height="1" fill="#aaa"/><rect x="32.3" y="1" width="0.6" height="1" fill="#aaa"/><rect x="32.3" y="27" width="0.6" height="1" fill="#aaa"/><rect x="37.5" y="1" width="0.6" height="1" fill="#aaa"/><rect x="37.5" y="27" width="0.6" height="1" fill="#aaa"/><rect x="42.7" y="1" width="0.6" height="1" fill="#aaa"/><rect x="42.7" y="27" width="0.6" height="1" fill="#aaa"/><rect x="47.9" y="1" width="0.6" height="1" fill="#aaa"/><rect x="47.9" y="27" width="0.6" height="1" fill="#aaa"/><rect x="53.1" y="1" width="0.6" height="1" fill="#aaa"/><rect x="53.1" y="27" width="0.6" height="1" fill="#aaa"/><rect x="58.3" y="1" width="0.6" height="1" fill="#aaa"/><rect x="58.3" y="27" width="0.6" height="1" fill="#aaa"/><rect x="63.5" y="1" width="0.6" height="1" fill="#aaa"/><rect x="63.5" y="27" width="0.6" height="1" fill="#aaa"/><rect x="68.7" y="1" width="0.6" height="1" fill="#aaa"/><rect x="68.7" y="27" width="0.6" height="1" fill="#aaa"/><rect x="73.9" y="1" width="0.6" height="1" fill="#aaa"/><rect x="73.9" y="27" width="0.6" height="1" fill="#aaa"/><rect x="79.1" y="1" width="0.6" height="1" fill="#aaa"/><rect x="79.1" y="27" width="0.6" height="1" fill="#aaa"/><rect x="84.3" y="1" width="0.6" height="1" fill="#aaa"/><rect x="84.3" y="27" width="0.6" height="1" fill="#aaa"/><rect x="89.5" y="1" width="0.6" height="1" fill="#aaa"/><rect x="89.5" y="27" width="0.6" height="1" fill="#aaa"/><line x1="24" y1="10" x2="24" y2="24" stroke="#bbb" stroke-width="0.6" stroke-dasharray="1 1.5"/><line x1="24" y1="36" x2="24" y2="38" stroke="#bbb" stroke-width="0.6"/><line x1="76.5" y1="10" x2="76.5" y2="24" stroke="#bbb" stroke-width="0.6" stroke-dasharray="1 1.5"/><line x1="76.5" y1="36" x2="76.5" y2="38" stroke="#bbb" stroke-width="0.6"/><polyline points="11.5,23.3 12.5,23.0 13.5,23.6 14.5,23.7 15.5,23.5 16.5,22.7 17.5,23.0 18.5,23.1 19.5,23.9 20.5,23.5 21.5,23.3 22.5,23.5 23.5,22.8 24.5,23.5 25.5,23.5 26.5,23.0 27.5,23.1 28.5,23.2 29.5,23.8 30.5,23.1 31.5,22.7 32.5,23.7 33.5,23.7 34.5,23.1 35.5,23.6 36.5,23.9 37.5,23.2 38.5,23.5 39.5,23.4 40.5,23.4 41.5,23.3 42.5,23.7 43.5,23.8 44.5,23.8 45.5,22.9 46.5,23.7 47.5,22.8 48.5,22.9 49.5,22.9 50.5,22.8 51.5,23.2 52.5,22.8 53.5,23.2 54.5,23.8 55.5,23.2 56.5,22.8 57.5,23.6 58.5,23.3 59.5,22.9 60.5,23.1 61.5,23.0 62.5,23.4 63.5,23.8 64.5,22.9 65.5,23.2 66.5,23.0 67.5,23.5 68.5,23.8 69.5,23.0 70.5,22.9 71.5,23.1 72.5,23.4 73.5,23.2 74.5,23.4 75.5,23.0 76.5,23.3 77.5,22.9 78.5,23.4 79.5,23.1 80.5,23.7 81.5,23.3 82.5,22.8 83.5,23.4 84.5,23.1 85.5,23.3 86.5,22.8 87.5,23.5 88.5,23.0 89.5,22.8" stroke="#1ec81e" stroke-width="0.8" fill="none"/><line x1="50.5" y1="10" x2="50.5" y2="25" stroke="#19c8c8" stroke-width="0.8"/><path d="M50.5 8 L52.3 9.8 L50.5 11.6 L48.7 9.8 Z" fill="#33f0f0"/><rect x="46.5" y="38.4" width="1.2" height="0.9" fill="#40a0ff"/><rect x="80.6" y="40.4" width="1.2" height="0.9" fill="#40a0ff"/><rect x="21.9" y="38.4" width="1.2" height="0.9" fill="#2060ff"/><rect x="71.7" y="37.9" width="1.2" height="0.9" fill="#40a0ff"/><rect x="24.6" y="38.4" width="1.2" height="0.9" fill="#0a20c0"/><rect x="34.5" y="38.6" width="1.2" height="0.9" fill="#1840e0"/><rect x="16.7" y="38.6" width="1.2" height="0.9" fill="#40a0ff"/><rect x="33.3" y="38.1" width="1.2" height="0.9" fill="#0a20c0"/><rect x="62.0" y="38.8" width="1.2" height="0.9" fill="#1030ff"/><rect x="26.8" y="37.5" width="1.2" height="0.9" fill="#1030ff"/><rect x="17.0" y="39.0" width="1.2" height="0.9" fill="#40a0ff"/><rect x="82.7" y="40.5" width="1.2" height="0.9" fill="#2060ff"/><rect x="66.6" y="41.6" width="1.2" height="0.9" fill="#2060ff"/><rect x="27.9" y="41.3" width="1.2" height="0.9" fill="#40a0ff"/><rect x="73.4" y="40.6" width="1.2" height="0.9" fill="#1840e0"/><rect x="27.5" y="40.3" width="1.2" height="0.9" fill="#1030ff"/><rect x="73.7" y="38.7" width="1.2" height="0.9" fill="#2060ff"/><rect x="70.9" y="41.6" width="1.2" height="0.9" fill="#0a20c0"/><rect x="21.6" y="39.8" width="1.2" height="0.9" fill="#0a20c0"/><rect x="39.0" y="39.4" width="1.2" height="0.9" fill="#40a0ff"/><rect x="47.8" y="38.2" width="1.2" height="0.9" fill="#0a20c0"/><rect x="13.0" y="40.9" width="1.2" height="0.9" fill="#2060ff"/><rect x="38.3" y="40.0" width="1.2" height="0.9" fill="#40a0ff"/><rect x="12.6" y="41.3" width="1.2" height="0.9" fill="#0a20c0"/><rect x="15.8" y="38.4" width="1.2" height="0.9" fill="#1840e0"/><rect x="51.7" y="38.5" width="1.2" height="0.9" fill="#1030ff"/><rect x="33.9" y="40.1" width="1.2" height="0.9" fill="#40a0ff"/><rect x="64.7" y="37.5" width="1.2" height="0.9" fill="#0a20c0"/><rect x="80.3" y="39.1" width="1.2" height="0.9" fill="#40a0ff"/><rect x="77.9" y="39.8" width="1.2" height="0.9" fill="#1840e0"/><rect x="53.8" y="40.6" width="1.2" height="0.9" fill="#1840e0"/><rect x="53.1" y="42.5" width="1.2" height="0.9" fill="#40a0ff"/><rect x="36.7" y="38.7" width="1.2" height="0.9" fill="#0a20c0"/><rect x="23.6" y="41.0" width="1.2" height="0.9" fill="#40a0ff"/><rect x="17.8" y="38.3" width="1.2" height="0.9" fill="#0a20c0"/><rect x="69.5" y="38.5" width="1.2" height="0.9" fill="#2060ff"/><rect x="34.1" y="40.0" width="1.2" height="0.9" fill="#1030ff"/><rect x="60.1" y="39.5" width="1.2" height="0.9" fill="#40a0ff"/><rect x="21.2" y="40.6" width="1.2" height="0.9" fill="#0a20c0"/><rect x="54.4" y="38.1" width="1.2" height="0.9" fill="#1840e0"/><rect x="26.9" y="42.1" width="1.2" height="0.9" fill="#40a0ff"/><rect x="49.4" y="39.7" width="1.2" height="0.9" fill="#1030ff"/><rect x="15.5" y="39.7" width="1.2" height="0.9" fill="#0a20c0"/><rect x="48.0" y="40.8" width="1.2" height="0.9" fill="#1030ff"/><rect x="39.2" y="40.5" width="1.2" height="0.9" fill="#2060ff"/><rect x="79.6" y="39.5" width="1.2" height="0.9" fill="#1030ff"/><rect x="53.6" y="42.1" width="1.2" height="0.9" fill="#2060ff"/><rect x="65.4" y="42.4" width="1.2" height="0.9" fill="#40a0ff"/><rect x="38.6" y="42.2" width="1.2" height="0.9" fill="#1840e0"/><rect x="30.6" y="37.8" width="1.2" height="0.9" fill="#1840e0"/><rect x="27.7" y="38.7" width="1.2" height="0.9" fill="#40a0ff"/><rect x="70.2" y="38.3" width="1.2" height="0.9" fill="#1840e0"/><rect x="40.5" y="38.8" width="1.2" height="0.9" fill="#2060ff"/><rect x="25.1" y="40.5" width="1.2" height="0.9" fill="#1840e0"/><rect x="79.5" y="39.6" width="1.2" height="0.9" fill="#1840e0"/><rect x="32.3" y="39.1" width="1.2" height="0.9" fill="#0a20c0"/><rect x="34.9" y="38.4" width="1.2" height="0.9" fill="#2060ff"/><rect x="75.4" y="39.2" width="1.2" height="0.9" fill="#40a0ff"/><rect x="52.9" y="42.5" width="1.2" height="0.9" fill="#2060ff"/><rect x="47.0" y="41.2" width="1.2" height="0.9" fill="#2060ff"/><rect x="58.3" y="42.4" width="1.2" height="0.9" fill="#2060ff"/><rect x="62.5" y="40.9" width="1.2" height="0.9" fill="#2060ff"/><rect x="17.8" y="41.5" width="1.2" height="0.9" fill="#1840e0"/><rect x="57.1" y="42.1" width="1.2" height="0.9" fill="#40a0ff"/><rect x="56.5" y="39.0" width="1.2" height="0.9" fill="#1030ff"/><rect x="38.4" y="41.5" width="1.2" height="0.9" fill="#2060ff"/><rect x="56.2" y="38.4" width="1.2" height="0.9" fill="#0a20c0"/><rect x="65.6" y="41.1" width="1.2" height="0.9" fill="#2060ff"/><rect x="11.9" y="41.3" width="1.2" height="0.9" fill="#2060ff"/><rect x="17.5" y="42.2" width="1.2" height="0.9" fill="#40a0ff"/><rect x="40.4" y="42.5" width="1.2" height="0.9" fill="#1840e0"/><rect x="35.9" y="41.9" width="1.2" height="0.9" fill="#1030ff"/><rect x="30.8" y="39.0" width="1.2" height="0.9" fill="#1030ff"/><rect x="65.3" y="40.7" width="1.2" height="0.9" fill="#2060ff"/><rect x="44.6" y="42.4" width="1.2" height="0.9" fill="#40a0ff"/><rect x="80.2" y="40.3" width="1.2" height="0.9" fill="#1030ff"/><rect x="53.4" y="38.3" width="1.2" height="0.9" fill="#1840e0"/><rect x="53.2" y="38.5" width="1.2" height="0.9" fill="#2060ff"/><rect x="79.8" y="42.4" width="1.2" height="0.9" fill="#1030ff"/><rect x="80.4" y="40.4" width="1.2" height="0.9" fill="#1030ff"/><rect x="42.7" y="38.0" width="1.2" height="0.9" fill="#0a20c0"/><rect x="13.9" y="38.1" width="1.2" height="0.9" fill="#0a20c0"/><rect x="18.6" y="41.1" width="1.2" height="0.9" fill="#40a0ff"/><rect x="63.8" y="41.9" width="1.2" height="0.9" fill="#40a0ff"/><rect x="70.6" y="42.0" width="1.2" height="0.9" fill="#1840e0"/><rect x="78.1" y="37.8" width="1.2" height="0.9" fill="#2060ff"/><rect x="42.9" y="40.9" width="1.2" height="0.9" fill="#2060ff"/><rect x="37.2" y="42.0" width="1.2" height="0.9" fill="#2060ff"/><rect x="69.2" y="41.7" width="1.2" height="0.9" fill="#1840e0"/><rect x="19.5" y="37.8" width="1.2" height="0.9" fill="#2060ff"/><rect x="12.9" y="41.2" width="1.2" height="0.9" fill="#0a20c0"/><rect x="72.2" y="40.4" width="1.2" height="0.9" fill="#40a0ff"/><rect x="84.5" y="39.0" width="1.2" height="0.9" fill="#2060ff"/><rect x="24.7" y="38.6" width="1.2" height="0.9" fill="#1030ff"/><rect x="26.6" y="38.1" width="1.2" height="0.9" fill="#2060ff"/><rect x="84.2" y="38.5" width="1.2" height="0.9" fill="#1840e0"/><rect x="25.5" y="42.1" width="1.2" height="0.9" fill="#40a0ff"/><rect x="39.7" y="42.0" width="1.2" height="0.9" fill="#40a0ff"/><rect x="19.3" y="41.9" width="1.2" height="0.9" fill="#1030ff"/><rect x="62.6" y="37.9" width="1.2" height="0.9" fill="#2060ff"/><rect x="84.3" y="40.1" width="1.2" height="0.9" fill="#1030ff"/><rect x="41.0" y="40.9" width="1.2" height="0.9" fill="#2060ff"/><rect x="13.3" y="40.0" width="1.2" height="0.9" fill="#2060ff"/><rect x="58.7" y="40.0" width="1.2" height="0.9" fill="#1030ff"/><rect x="44.2" y="39.9" width="1.2" height="0.9" fill="#40a0ff"/><rect x="21.3" y="37.7" width="1.2" height="0.9" fill="#0a20c0"/><rect x="75.4" y="39.8" width="1.2" height="0.9" fill="#0a20c0"/><rect x="61.4" y="41.0" width="1.2" height="0.9" fill="#1840e0"/><rect x="12.0" y="38.6" width="1.2" height="0.9" fill="#2060ff"/><rect x="15.6" y="38.4" width="1.2" height="0.9" fill="#1030ff"/><rect x="65.2" y="38.6" width="1.2" height="0.9" fill="#1030ff"/><rect x="52.5" y="40.8" width="1.2" height="0.9" fill="#0a20c0"/><rect x="35.9" y="40.3" width="1.2" height="0.9" fill="#0a20c0"/><rect x="66.4" y="38.9" width="1.2" height="0.9" fill="#1030ff"/><rect x="41.4" y="38.9" width="1.2" height="0.9" fill="#1030ff"/><rect x="72.8" y="37.6" width="1.2" height="0.9" fill="#2060ff"/><rect x="79.6" y="40.7" width="1.2" height="0.9" fill="#1030ff"/><rect x="23.6" y="38.2" width="1.2" height="0.9" fill="#1840e0"/><rect x="53.0" y="42.5" width="1.2" height="0.9" fill="#40a0ff"/><rect x="36.1" y="37.9" width="1.2" height="0.9" fill="#40a0ff"/><rect x="81.6" y="39.2" width="1.2" height="0.9" fill="#1030ff"/><rect x="30.9" y="39.1" width="1.2" height="0.9" fill="#1840e0"/><rect x="22.3" y="38.9" width="1.2" height="0.9" fill="#0a20c0"/><rect x="44.3" y="39.1" width="1.2" height="0.9" fill="#1030ff"/><rect x="17.6" y="40.2" width="1.2" height="0.9" fill="#0a20c0"/><rect x="75.4" y="38.4" width="1.2" height="0.9" fill="#40a0ff"/><rect x="83.6" y="42.2" width="1.2" height="0.9" fill="#2060ff"/><rect x="82.0" y="40.1" width="1.2" height="0.9" fill="#1840e0"/><rect x="25.0" y="37.7" width="1.2" height="0.9" fill="#1840e0"/><rect x="77.8" y="39.6" width="1.2" height="0.9" fill="#40a0ff"/><rect x="66.8" y="42.4" width="1.2" height="0.9" fill="#1030ff"/><rect x="59.2" y="38.4" width="1.2" height="0.9" fill="#0a20c0"/><rect x="19.8" y="42.3" width="1.2" height="0.9" fill="#1030ff"/><rect x="15.4" y="42.1" width="1.2" height="0.9" fill="#40a0ff"/><rect x="15.9" y="41.7" width="1.2" height="0.9" fill="#1840e0"/><rect x="32.3" y="40.8" width="1.2" height="0.9" fill="#2060ff"/><rect x="65.0" y="38.9" width="1.2" height="0.9" fill="#1030ff"/><rect x="54.1" y="39.9" width="1.2" height="0.9" fill="#1840e0"/><rect x="45.4" y="41.3" width="1.2" height="0.9" fill="#1840e0"/><rect x="51.2" y="39.0" width="1.2" height="0.9" fill="#1030ff"/><rect x="53.2" y="42.3" width="1.2" height="0.9" fill="#0a20c0"/><rect x="31.1" y="42.5" width="1.2" height="0.9" fill="#1840e0"/><rect x="78.9" y="38.2" width="1.2" height="0.9" fill="#0a20c0"/><rect x="27.4" y="41.6" width="1.2" height="0.9" fill="#1840e0"/><rect x="86.6" y="37.8" width="1.2" height="0.9" fill="#40a0ff"/><rect x="12.2" y="40.7" width="1.2" height="0.9" fill="#1840e0"/><rect x="25.0" y="37.8" width="1.2" height="0.9" fill="#2060ff"/><rect x="21.7" y="41.9" width="1.2" height="0.9" fill="#1840e0"/><rect x="76.3" y="41.5" width="1.2" height="0.9" fill="#1840e0"/><rect x="46.5" y="41.8" width="1.2" height="0.9" fill="#1840e0"/><rect x="84.8" y="41.5" width="1.2" height="0.9" fill="#1840e0"/><rect x="23.2" y="40.3" width="1.2" height="0.9" fill="#2060ff"/><rect x="38.7" y="38.7" width="1.2" height="0.9" fill="#40a0ff"/><rect x="45.4" y="40.2" width="1.2" height="0.9" fill="#40a0ff"/><rect x="82.4" y="40.6" width="1.2" height="0.9" fill="#2060ff"/><rect x="73.9" y="39.6" width="1.2" height="0.9" fill="#40a0ff"/><rect x="73.9" y="41.2" width="1.2" height="0.9" fill="#2060ff"/><rect x="88.4" y="39.8" width="1.2" height="0.9" fill="#1030ff"/><rect x="77.9" y="39.8" width="1.2" height="0.9" fill="#2060ff"/><rect x="38.5" y="37.9" width="1.2" height="0.9" fill="#40a0ff"/><rect x="38.3" y="39.9" width="1.2" height="0.9" fill="#40a0ff"/><rect x="25.7" y="37.9" width="1.2" height="0.9" fill="#1030ff"/><rect x="13.5" y="38.8" width="1.2" height="0.9" fill="#2060ff"/><rect x="49.6" y="37.6" width="1.2" height="0.9" fill="#0a20c0"/><rect x="51.7" y="42.5" width="1.2" height="0.9" fill="#1030ff"/><rect x="37.9" y="40.3" width="1.2" height="0.9" fill="#1030ff"/><rect x="58.0" y="39.4" width="1.2" height="0.9" fill="#1030ff"/><rect x="19.5" y="37.8" width="1.2" height="0.9" fill="#40a0ff"/><rect x="22.0" y="40.8" width="1.2" height="0.9" fill="#0a20c0"/><rect x="15.5" y="39.2" width="1.2" height="0.9" fill="#0a20c0"/><rect x="52.3" y="41.6" width="1.2" height="0.9" fill="#1030ff"/><rect x="25.1" y="42.5" width="1.2" height="0.9" fill="#1840e0"/><rect x="27.5" y="39.7" width="1.2" height="0.9" fill="#1030ff"/><rect x="36.1" y="40.6" width="1.2" height="0.9" fill="#2060ff"/><rect x="34.7" y="41.7" width="1.2" height="0.9" fill="#40a0ff"/><rect x="73.4" y="38.7" width="1.2" height="0.9" fill="#1030ff"/><rect x="31.5" y="40.5" width="1.2" height="0.9" fill="#0a20c0"/><rect x="83.2" y="40.0" width="1.2" height="0.9" fill="#1840e0"/><rect x="67.9" y="40.4" width="1.2" height="0.9" fill="#1840e0"/><rect x="58.1" y="37.7" width="1.2" height="0.9" fill="#40a0ff"/><rect x="23.0" y="41.3" width="1.2" height="0.9" fill="#1840e0"/><rect x="87.3" y="38.5" width="1.2" height="0.9" fill="#1840e0"/><rect x="25.6" y="40.2" width="1.2" height="0.9" fill="#2060ff"/><rect x="72.5" y="40.3" width="1.2" height="0.9" fill="#2060ff"/><rect x="82.0" y="38.9" width="1.2" height="0.9" fill="#1030ff"/><rect x="35.6" y="40.1" width="1.2" height="0.9" fill="#2060ff"/><rect x="20.4" y="39.6" width="1.2" height="0.9" fill="#40a0ff"/><rect x="27.9" y="38.9" width="1.2" height="0.9" fill="#1030ff"/><rect x="58.6" y="41.1" width="1.2" height="0.9" fill="#40a0ff"/><rect x="28.7" y="42.4" width="1.2" height="0.9" fill="#1030ff"/><rect x="79.0" y="38.7" width="1.2" height="0.9" fill="#2060ff"/><rect x="53.3" y="40.3" width="1.2" height="0.9" fill="#1030ff"/><rect x="77.2" y="37.8" width="1.2" height="0.9" fill="#40a0ff"/><rect x="19.0" y="41.1" width="1.2" height="0.9" fill="#0a20c0"/><rect x="68.4" y="40.0" width="1.2" height="0.9" fill="#1030ff"/><rect x="28.1" y="37.6" width="1.2" height="0.9" fill="#1840e0"/><rect x="66.8" y="39.8" width="1.2" height="0.9" fill="#1030ff"/><rect x="39.9" y="39.6" width="1.2" height="0.9" fill="#1840e0"/><rect x="43.4" y="40.0" width="1.2" height="0.9" fill="#1840e0"/><rect x="30.3" y="41.8" width="1.2" height="0.9" fill="#40a0ff"/><rect x="60.2" y="38.2" width="1.2" height="0.9" fill="#0a20c0"/><rect x="37.9" y="41.5" width="1.2" height="0.9" fill="#2060ff"/><rect x="68.5" y="40.0" width="1.2" height="0.9" fill="#1840e0"/><rect x="38.9" y="38.1" width="1.2" height="0.9" fill="#1840e0"/><rect x="57.2" y="39.9" width="1.2" height="0.9" fill="#1030ff"/><rect x="13.0" y="40.9" width="1.2" height="0.9" fill="#1840e0"/><rect x="75.6" y="39.2" width="1.2" height="0.9" fill="#0a20c0"/><rect x="50.3" y="38.9" width="1.2" height="0.9" fill="#0a20c0"/><rect x="45.1" y="38.8" width="1.2" height="0.9" fill="#0a20c0"/><rect x="25.5" y="42.1" width="1.2" height="0.9" fill="#1030ff"/><rect x="54.0" y="39.3" width="1.2" height="0.9" fill="#1840e0"/><rect x="86.7" y="41.9" width="1.2" height="0.9" fill="#40a0ff"/><rect x="85.2" y="41.0" width="1.2" height="0.9" fill="#2060ff"/><rect x="60.8" y="41.4" width="1.2" height="0.9" fill="#1840e0"/><rect x="45.4" y="39.9" width="1.2" height="0.9" fill="#2060ff"/><rect x="88.0" y="42.5" width="1.2" height="0.9" fill="#1840e0"/><rect x="57.5" y="38.6" width="1.2" height="0.9" fill="#0a20c0"/><rect x="54.0" y="37.6" width="1.2" height="0.9" fill="#1030ff"/><rect x="33.6" y="40.3" width="1.2" height="0.9" fill="#2060ff"/><rect x="47.2" y="41.8" width="1.2" height="0.9" fill="#1030ff"/><rect x="24.0" y="41.6" width="1.2" height="0.9" fill="#0a20c0"/><rect x="66.9" y="40.9" width="1.2" height="0.9" fill="#1030ff"/><rect x="66.7" y="37.6" width="1.2" height="0.9" fill="#1030ff"/><rect x="36.5" y="40.8" width="1.2" height="0.9" fill="#40a0ff"/><rect x="49.5" y="39.1" width="1.2" height="0.9" fill="#2060ff"/><rect x="49.1" y="38.2" width="1.2" height="0.9" fill="#2060ff"/><rect x="76.5" y="39.8" width="1.2" height="0.9" fill="#0a20c0"/><rect x="47.0" y="37.8" width="1.2" height="0.9" fill="#40a0ff"/><rect x="76.0" y="40.3" width="1.2" height="0.9" fill="#1030ff"/><rect x="64.0" y="41.1" width="1.2" height="0.9" fill="#1840e0"/><rect x="49.3" y="40.6" width="1.2" height="0.9" fill="#0a20c0"/><rect x="25.7" y="38.0" width="1.2" height="0.9" fill="#1030ff"/><rect x="57.8" y="37.7" width="1.2" height="0.9" fill="#0a20c0"/><rect x="48.3" y="40.6" width="1.2" height="0.9" fill="#0a20c0"/><rect x="81.0" y="38.0" width="1.2" height="0.9" fill="#1840e0"/><rect x="44.5" y="38.3" width="1.2" height="0.9" fill="#2060ff"/><rect x="64.6" y="37.8" width="1.2" height="0.9" fill="#40a0ff"/><rect x="15.8" y="39.6" width="1.2" height="0.9" fill="#40a0ff"/><rect x="64.4" y="40.6" width="1.2" height="0.9" fill="#1030ff"/><rect x="14.5" y="42.6" width="1.2" height="0.9" fill="#0a20c0"/><rect x="78.8" y="39.0" width="1.2" height="0.9" fill="#1030ff"/><rect x="55.7" y="41.8" width="1.2" height="0.9" fill="#2060ff"/><rect x="36.5" y="40.9" width="1.2" height="0.9" fill="#0a20c0"/><rect x="27.8" y="41.9" width="1.2" height="0.9" fill="#2060ff"/><rect x="16.4" y="40.8" width="1.2" height="0.9" fill="#0a20c0"/><rect x="46.1" y="40.2" width="1.2" height="0.9" fill="#0a20c0"/><rect x="76.2" y="38.7" width="1.2" height="0.9" fill="#1030ff"/><rect x="20.5" y="39.4" width="1.2" height="0.9" fill="#40a0ff"/><rect x="29.8" y="40.1" width="1.2" height="0.9" fill="#40a0ff"/><rect x="13.7" y="41.6" width="1.2" height="0.9" fill="#0a20c0"/><rect x="50.8" y="40.2" width="1.2" height="0.9" fill="#0a20c0"/><rect x="76.1" y="38.1" width="1.2" height="0.9" fill="#1840e0"/><rect x="57.2" y="39.8" width="1.2" height="0.9" fill="#1840e0"/><rect x="71.5" y="42.1" width="1.2" height="0.9" fill="#2060ff"/><rect x="36.7" y="38.0" width="1.2" height="0.9" fill="#1840e0"/><rect x="69.1" y="37.9" width="1.2" height="0.9" fill="#40a0ff"/><rect x="39.1" y="39.3" width="1.2" height="0.9" fill="#1840e0"/><rect x="16.3" y="39.9" width="1.2" height="0.9" fill="#1840e0"/><rect x="33.7" y="37.6" width="1.2" height="0.9" fill="#1840e0"/><rect x="12.2" y="38.0" width="1.2" height="0.9" fill="#1840e0"/><rect x="21.6" y="42.4" width="1.2" height="0.9" fill="#40a0ff"/><rect x="42.0" y="42.1" width="1.2" height="0.9" fill="#1030ff"/><rect x="28.3" y="37.8" width="1.2" height="0.9" fill="#0a20c0"/><rect x="48.8" y="41.3" width="1.2" height="0.9" fill="#40a0ff"/><rect x="58.4" y="38.5" width="1.2" height="0.9" fill="#1840e0"/><rect x="29.6" y="37.9" width="1.2" height="0.9" fill="#0a20c0"/><rect x="58.3" y="38.6" width="1.2" height="0.9" fill="#0a20c0"/><rect x="75.2" y="38.2" width="1.2" height="0.9" fill="#1030ff"/><rect x="56.0" y="42.5" width="1.2" height="0.9" fill="#0a20c0"/><rect x="21.8" y="41.0" width="1.2" height="0.9" fill="#1030ff"/><rect x="25.2" y="38.0" width="1.2" height="0.9" fill="#40a0ff"/><rect x="21.3" y="39.7" width="1.2" height="0.9" fill="#0a20c0"/><rect x="11.8" y="42.3" width="1.2" height="0.9" fill="#2060ff"/><rect x="64.0" y="39.6" width="1.2" height="0.9" fill="#40a0ff"/><rect x="83.5" y="42.1" width="1.2" height="0.9" fill="#1840e0"/><rect x="29.4" y="38.8" width="1.2" height="0.9" fill="#0a20c0"/><rect x="64.5" y="39.4" width="1.2" height="0.9" fill="#1030ff"/><rect x="58.5" y="38.3" width="1.2" height="0.9" fill="#1840e0"/><rect x="50.9" y="40.0" width="1.2" height="0.9" fill="#1030ff"/><rect x="29.0" y="39.8" width="1.2" height="0.9" fill="#1030ff"/><rect x="72.1" y="38.4" width="1.2" height="0.9" fill="#0a20c0"/><rect x="63.4" y="40.7" width="1.2" height="0.9" fill="#1030ff"/><rect x="19.7" y="39.6" width="1.2" height="0.9" fill="#1840e0"/><rect x="58.9" y="37.7" width="1.2" height="0.9" fill="#40a0ff"/><rect x="28.0" y="41.9" width="1.2" height="0.9" fill="#40a0ff"/><rect x="30.2" y="42.5" width="1.2" height="0.9" fill="#40a0ff"/><rect x="76.9" y="42.1" width="1.2" height="0.9" fill="#0a20c0"/><rect x="63.9" y="39.3" width="1.2" height="0.9" fill="#40a0ff"/><rect x="49.7" y="42.4" width="1.2" height="0.9" fill="#0a20c0"/><rect x="78.2" y="39.2" width="1.2" height="0.9" fill="#1840e0"/><rect x="84.1" y="42.1" width="1.2" height="0.9" fill="#0a20c0"/><rect x="54.0" y="38.8" width="1.2" height="0.9" fill="#1840e0"/><rect x="17.7" y="42.1" width="1.2" height="0.9" fill="#1030ff"/><rect x="26.4" y="39.9" width="1.2" height="0.9" fill="#1030ff"/><rect x="56.3" y="40.9" width="1.2" height="0.9" fill="#0a20c0"/><rect x="22.3" y="39.0" width="1.2" height="0.9" fill="#2060ff"/><rect x="52.8" y="41.9" width="1.2" height="0.9" fill="#40a0ff"/><rect x="56.8" y="39.7" width="1.2" height="0.9" fill="#1840e0"/><rect x="22.7" y="42.4" width="1.2" height="0.9" fill="#0a20c0"/><rect x="53.9" y="40.4" width="1.2" height="0.9" fill="#2060ff"/><rect x="39.8" y="41.8" width="1.2" height="0.9" fill="#0a20c0"/><rect x="57.8" y="39.5" width="1.2" height="0.9" fill="#40a0ff"/><rect x="48.1" y="42.2" width="1.2" height="0.9" fill="#1030ff"/><rect x="64.5" y="39.6" width="1.2" height="0.9" fill="#0a20c0"/><rect x="70.4" y="39.1" width="1.2" height="0.9" fill="#40a0ff"/><rect x="81.7" y="42.6" width="1.2" height="0.9" fill="#1030ff"/><rect x="51.7" y="41.0" width="1.2" height="0.9" fill="#1030ff"/><rect x="28.0" y="42.2" width="1.2" height="0.9" fill="#1030ff"/><rect x="83.5" y="37.8" width="1.2" height="0.9" fill="#1030ff"/><rect x="16.6" y="38.9" width="1.2" height="0.9" fill="#1030ff"/><rect x="19.3" y="37.5" width="1.2" height="0.9" fill="#0a20c0"/><rect x="12.5" y="39.7" width="1.2" height="0.9" fill="#1840e0"/><rect x="48.2" y="38.9" width="1.2" height="0.9" fill="#2060ff"/><rect x="75.8" y="42.1" width="1.2" height="0.9" fill="#40a0ff"/><rect x="80.7" y="40.9" width="1.2" height="0.9" fill="#2060ff"/><rect x="17.8" y="40.8" width="1.2" height="0.9" fill="#40a0ff"/><rect x="73.0" y="38.3" width="1.2" height="0.9" fill="#1030ff"/><rect x="76.0" y="39.5" width="1.2" height="0.9" fill="#2060ff"/><rect x="40.5" y="40.7" width="1.2" height="0.9" fill="#2060ff"/><rect x="12.1" y="41.7" width="1.2" height="0.9" fill="#1840e0"/><rect x="29.0" y="37.7" width="1.2" height="0.9" fill="#40a0ff"/><rect x="41.3" y="42.5" width="1.2" height="0.9" fill="#0a20c0"/><rect x="82.2" y="40.0" width="1.2" height="0.9" fill="#1030ff"/><rect x="51.8" y="37.9" width="1.2" height="0.9" fill="#40a0ff"/><rect x="46.5" y="38.6" width="1.2" height="0.9" fill="#1030ff"/><rect x="22.5" y="40.1" width="1.2" height="0.9" fill="#40a0ff"/><rect x="64.0" y="40.7" width="1.2" height="0.9" fill="#1030ff"/><rect x="69.3" y="40.6" width="1.2" height="0.9" fill="#2060ff"/><rect x="74.2" y="39.9" width="1.2" height="0.9" fill="#2060ff"/><rect x="14.7" y="38.8" width="1.2" height="0.9" fill="#1840e0"/><path d="M49 34 L52 34 L50.5 35.6 Z" fill="#e03030"/></svg>
<div style="left:190px;top:31px;width:20px;height:6px;line-height:6px;text-align:center;font-size:5.6px;font-family:'Liberation Sans',sans-serif;color:#d0c8ff;white-space:pre;overflow:hidden;">1000</div>
<div style="left:190px;top:56.5px;width:20px;height:6.0px;line-height:6.0px;text-align:center;font-size:5.6px;font-family:'Liberation Sans',sans-serif;color:#d0c8ff;white-space:pre;overflow:hidden;">1000</div>
<div style="left:216.5px;top:31px;width:20.0px;height:6px;line-height:6px;text-align:center;font-size:5.6px;font-family:'Liberation Sans',sans-serif;color:#d0c8ff;white-space:pre;overflow:hidden;">1500</div>
<div style="left:216.5px;top:56.5px;width:20.0px;height:6.0px;line-height:6.0px;text-align:center;font-size:5.6px;font-family:'Liberation Sans',sans-serif;color:#d0c8ff;white-space:pre;overflow:hidden;">1500</div>
<div style="left:242.5px;top:31px;width:20.0px;height:6px;line-height:6px;text-align:center;font-size:5.6px;font-family:'Liberation Sans',sans-serif;color:#d0c8ff;white-space:pre;overflow:hidden;">2000</div>
<div style="left:242.5px;top:56.5px;width:20.0px;height:6.0px;line-height:6.0px;text-align:center;font-size:5.6px;font-family:'Liberation Sans',sans-serif;color:#d0c8ff;white-space:pre;overflow:hidden;">2000</div>
<div style="left:298px;top:28px;width:90px;height:44px;background:#9a9a9a"></div>
<div style="left:299px;top:29px;width:8px;height:42px;background:#000"></div>
<div style="left:299px;top:51px;width:8px;height:1px;background:#c8b400"></div>
<div style="left:309.5px;top:29px;width:78.0px;height:24px;background:#000"></div>
<div style="left:309.5px;top:55px;width:78.0px;height:16px;background:#000"></div>
<svg style="left:298px;top:28px" width="90" height="44"><rect x="11.5" y="1" width="0.6" height="1" fill="#aaa"/><rect x="11.5" y="27" width="0.6" height="1" fill="#aaa"/><rect x="16.7" y="1" width="0.6" height="1" fill="#aaa"/><rect x="16.7" y="27" width="0.6" height="1" fill="#aaa"/><rect x="21.9" y="1" width="0.6" height="1" fill="#aaa"/><rect x="21.9" y="27" width="0.6" height="1" fill="#aaa"/><rect x="27.1" y="1" width="0.6" height="1" fill="#aaa"/><rect x="27.1" y="27" width="0.6" height="1" fill="#aaa"/><rect x="32.3" y="1" width="0.6" height="1" fill="#aaa"/><rect x="32.3" y="27" width="0.6" height="1" fill="#aaa"/><rect x="37.5" y="1" width="0.6" height="1" fill="#aaa"/><rect x="37.5" y="27" width="0.6" height="1" fill="#aaa"/><rect x="42.7" y="1" width="0.6" height="1" fill="#aaa"/><rect x="42.7" y="27" width="0.6" height="1" fill="#aaa"/><rect x="47.9" y="1" width="0.6" height="1" fill="#aaa"/><rect x="47.9" y="27" width="0.6" height="1" fill="#aaa"/><rect x="53.1" y="1" width="0.6" height="1" fill="#aaa"/><rect x="53.1" y="27" width="0.6" height="1" fill="#aaa"/><rect x="58.3" y="1" width="0.6" height="1" fill="#aaa"/><rect x="58.3" y="27" width="0.6" height="1" fill="#aaa"/><rect x="63.5" y="1" width="0.6" height="1" fill="#aaa"/><rect x="63.5" y="27" width="0.6" height="1" fill="#aaa"/><rect x="68.7" y="1" width="0.6" height="1" fill="#aaa"/><rect x="68.7" y="27" width="0.6" height="1" fill="#aaa"/><rect x="73.9" y="1" width="0.6" height="1" fill="#aaa"/><rect x="73.9" y="27" width="0.6" height="1" fill="#aaa"/><rect x="79.1" y="1" width="0.6" height="1" fill="#aaa"/><rect x="79.1" y="27" width="0.6" height="1" fill="#aaa"/><rect x="84.3" y="1" width="0.6" height="1" fill="#aaa"/><rect x="84.3" y="27" width="0.6" height="1" fill="#aaa"/><rect x="89.5" y="1" width="0.6" height="1" fill="#aaa"/><rect x="89.5" y="27" width="0.6" height="1" fill="#aaa"/><line x1="24" y1="10" x2="24" y2="24" stroke="#bbb" stroke-width="0.6" stroke-dasharray="1 1.5"/><line x1="24" y1="36" x2="24" y2="38" stroke="#bbb" stroke-width="0.6"/><line x1="76.5" y1="10" x2="76.5" y2="24" stroke="#bbb" stroke-width="0.6" stroke-dasharray="1 1.5"/><line x1="76.5" y1="36" x2="76.5" y2="38" stroke="#bbb" stroke-width="0.6"/><polyline points="11.5,23.6 12.5,22.7 13.5,23.5 14.5,23.3 15.5,23.7 16.5,23.1 17.5,23.2 18.5,23.0 19.5,23.7 20.5,23.6 21.5,23.9 22.5,23.4 23.5,23.5 24.5,23.6 25.5,23.7 26.5,23.6 27.5,22.7 28.5,23.0 29.5,23.7 30.5,23.6 31.5,23.4 32.5,22.9 33.5,23.5 34.5,23.0 35.5,22.8 36.5,23.5 37.5,23.0 38.5,23.1 39.5,22.8 40.5,23.0 41.5,22.8 42.5,22.9 43.5,23.9 44.5,23.6 45.5,23.2 46.5,23.0 47.5,23.6 48.5,23.3 49.5,22.8 50.5,23.3 51.5,23.8 52.5,22.9 53.5,23.6 54.5,23.1 55.5,22.9 56.5,23.6 57.5,23.0 58.5,23.3 59.5,22.7 60.5,23.4 61.5,22.8 62.5,22.7 63.5,23.5 64.5,23.2 65.5,22.8 66.5,23.1 67.5,22.9 68.5,23.0 69.5,23.2 70.5,23.8 71.5,22.8 72.5,23.8 73.5,23.8 74.5,23.0 75.5,22.7 76.5,23.1 77.5,23.7 78.5,23.4 79.5,23.4 80.5,23.1 81.5,23.7 82.5,22.9 83.5,22.8 84.5,23.7 85.5,22.8 86.5,23.2 87.5,23.1 88.5,23.7 89.5,23.6" stroke="#1ec81e" stroke-width="0.8" fill="none"/><line x1="50.5" y1="10" x2="50.5" y2="25" stroke="#19c8c8" stroke-width="0.8"/><path d="M50.5 8 L52.3 9.8 L50.5 11.6 L48.7 9.8 Z" fill="#33f0f0"/><rect x="71.3" y="38.3" width="1.2" height="0.9" fill="#2060ff"/><rect x="50.1" y="41.6" width="1.2" height="0.9" fill="#2060ff"/><rect x="73.0" y="42.5" width="1.2" height="0.9" fill="#1030ff"/><rect x="14.9" y="39.2" width="1.2" height="0.9" fill="#1030ff"/><rect x="19.2" y="38.3" width="1.2" height="0.9" fill="#40a0ff"/><rect x="31.9" y="41.9" width="1.2" height="0.9" fill="#1030ff"/><rect x="16.6" y="38.1" width="1.2" height="0.9" fill="#2060ff"/><rect x="60.4" y="38.8" width="1.2" height="0.9" fill="#1840e0"/><rect x="16.0" y="40.6" width="1.2" height="0.9" fill="#1840e0"/><rect x="61.9" y="37.9" width="1.2" height="0.9" fill="#40a0ff"/><rect x="43.7" y="38.2" width="1.2" height="0.9" fill="#40a0ff"/><rect x="66.3" y="40.6" width="1.2" height="0.9" fill="#2060ff"/><rect x="39.3" y="39.3" width="1.2" height="0.9" fill="#1840e0"/><rect x="50.9" y="41.5" width="1.2" height="0.9" fill="#2060ff"/><rect x="42.2" y="39.3" width="1.2" height="0.9" fill="#0a20c0"/><rect x="61.6" y="41.0" width="1.2" height="0.9" fill="#0a20c0"/><rect x="60.3" y="38.2" width="1.2" height="0.9" fill="#1030ff"/><rect x="83.2" y="40.6" width="1.2" height="0.9" fill="#1030ff"/><rect x="48.2" y="41.2" width="1.2" height="0.9" fill="#1840e0"/><rect x="21.9" y="40.8" width="1.2" height="0.9" fill="#40a0ff"/><rect x="70.3" y="38.9" width="1.2" height="0.9" fill="#1030ff"/><rect x="35.1" y="40.9" width="1.2" height="0.9" fill="#40a0ff"/><rect x="27.7" y="39.2" width="1.2" height="0.9" fill="#40a0ff"/><rect x="30.5" y="37.8" width="1.2" height="0.9" fill="#1840e0"/><rect x="20.0" y="40.4" width="1.2" height="0.9" fill="#1030ff"/><rect x="66.7" y="37.9" width="1.2" height="0.9" fill="#1030ff"/><rect x="56.6" y="42.0" width="1.2" height="0.9" fill="#1030ff"/><rect x="59.6" y="41.8" width="1.2" height="0.9" fill="#0a20c0"/><rect x="13.3" y="39.3" width="1.2" height="0.9" fill="#1840e0"/><rect x="34.4" y="37.8" width="1.2" height="0.9" fill="#0a20c0"/><rect x="49.9" y="39.5" width="1.2" height="0.9" fill="#0a20c0"/><rect x="29.3" y="40.4" width="1.2" height="0.9" fill="#1840e0"/><rect x="19.3" y="38.5" width="1.2" height="0.9" fill="#1030ff"/><rect x="35.5" y="41.8" width="1.2" height="0.9" fill="#40a0ff"/><rect x="24.8" y="40.1" width="1.2" height="0.9" fill="#2060ff"/><rect x="70.6" y="42.4" width="1.2" height="0.9" fill="#0a20c0"/><rect x="44.5" y="38.9" width="1.2" height="0.9" fill="#2060ff"/><rect x="86.6" y="39.2" width="1.2" height="0.9" fill="#2060ff"/><rect x="46.0" y="37.6" width="1.2" height="0.9" fill="#40a0ff"/><rect x="42.7" y="39.9" width="1.2" height="0.9" fill="#2060ff"/><rect x="64.7" y="38.3" width="1.2" height="0.9" fill="#40a0ff"/><rect x="47.9" y="40.9" width="1.2" height="0.9" fill="#0a20c0"/><rect x="24.2" y="40.8" width="1.2" height="0.9" fill="#40a0ff"/><rect x="55.8" y="40.9" width="1.2" height="0.9" fill="#2060ff"/><rect x="70.2" y="42.6" width="1.2" height="0.9" fill="#0a20c0"/><rect x="85.2" y="40.4" width="1.2" height="0.9" fill="#1030ff"/><rect x="36.3" y="38.7" width="1.2" height="0.9" fill="#1840e0"/><rect x="24.8" y="40.4" width="1.2" height="0.9" fill="#2060ff"/><rect x="11.5" y="41.3" width="1.2" height="0.9" fill="#0a20c0"/><rect x="74.8" y="42.3" width="1.2" height="0.9" fill="#1030ff"/><rect x="58.9" y="39.6" width="1.2" height="0.9" fill="#1030ff"/><rect x="60.3" y="38.8" width="1.2" height="0.9" fill="#40a0ff"/><rect x="87.3" y="38.0" width="1.2" height="0.9" fill="#1030ff"/><rect x="52.7" y="37.9" width="1.2" height="0.9" fill="#2060ff"/><rect x="31.3" y="38.4" width="1.2" height="0.9" fill="#40a0ff"/><rect x="46.0" y="42.5" width="1.2" height="0.9" fill="#40a0ff"/><rect x="23.3" y="39.6" width="1.2" height="0.9" fill="#0a20c0"/><rect x="77.0" y="38.6" width="1.2" height="0.9" fill="#1840e0"/><rect x="52.1" y="39.3" width="1.2" height="0.9" fill="#1030ff"/><rect x="66.2" y="40.2" width="1.2" height="0.9" fill="#1840e0"/><rect x="76.2" y="42.6" width="1.2" height="0.9" fill="#0a20c0"/><rect x="40.8" y="42.0" width="1.2" height="0.9" fill="#40a0ff"/><rect x="83.7" y="40.7" width="1.2" height="0.9" fill="#1840e0"/><rect x="88.0" y="39.6" width="1.2" height="0.9" fill="#1030ff"/><rect x="19.3" y="41.3" width="1.2" height="0.9" fill="#0a20c0"/><rect x="12.2" y="39.8" width="1.2" height="0.9" fill="#2060ff"/><rect x="61.6" y="39.8" width="1.2" height="0.9" fill="#0a20c0"/><rect x="79.9" y="38.4" width="1.2" height="0.9" fill="#2060ff"/><rect x="35.1" y="40.4" width="1.2" height="0.9" fill="#2060ff"/><rect x="71.2" y="39.4" width="1.2" height="0.9" fill="#2060ff"/><rect x="15.0" y="38.7" width="1.2" height="0.9" fill="#2060ff"/><rect x="79.6" y="37.8" width="1.2" height="0.9" fill="#2060ff"/><rect x="82.8" y="40.9" width="1.2" height="0.9" fill="#40a0ff"/><rect x="64.6" y="38.7" width="1.2" height="0.9" fill="#40a0ff"/><rect x="59.9" y="40.2" width="1.2" height="0.9" fill="#1840e0"/><rect x="46.2" y="38.4" width="1.2" height="0.9" fill="#40a0ff"/><rect x="66.3" y="40.6" width="1.2" height="0.9" fill="#1030ff"/><rect x="56.4" y="38.7" width="1.2" height="0.9" fill="#40a0ff"/><rect x="86.1" y="41.7" width="1.2" height="0.9" fill="#0a20c0"/><rect x="87.2" y="39.6" width="1.2" height="0.9" fill="#40a0ff"/><rect x="21.3" y="37.6" width="1.2" height="0.9" fill="#2060ff"/><rect x="25.1" y="37.6" width="1.2" height="0.9" fill="#2060ff"/><rect x="20.3" y="42.0" width="1.2" height="0.9" fill="#40a0ff"/><rect x="35.5" y="39.9" width="1.2" height="0.9" fill="#2060ff"/><rect x="59.8" y="40.9" width="1.2" height="0.9" fill="#2060ff"/><rect x="58.3" y="39.2" width="1.2" height="0.9" fill="#2060ff"/><rect x="34.5" y="40.9" width="1.2" height="0.9" fill="#1030ff"/><rect x="28.6" y="41.9" width="1.2" height="0.9" fill="#1030ff"/><rect x="31.3" y="39.8" width="1.2" height="0.9" fill="#1030ff"/><rect x="81.3" y="40.0" width="1.2" height="0.9" fill="#0a20c0"/><rect x="20.8" y="41.5" width="1.2" height="0.9" fill="#1840e0"/><rect x="49.5" y="41.9" width="1.2" height="0.9" fill="#1840e0"/><rect x="82.7" y="39.8" width="1.2" height="0.9" fill="#40a0ff"/><rect x="84.1" y="42.5" width="1.2" height="0.9" fill="#40a0ff"/><rect x="17.3" y="38.2" width="1.2" height="0.9" fill="#2060ff"/><rect x="36.0" y="42.3" width="1.2" height="0.9" fill="#1840e0"/><rect x="72.9" y="40.5" width="1.2" height="0.9" fill="#40a0ff"/><rect x="21.5" y="37.5" width="1.2" height="0.9" fill="#1030ff"/><rect x="35.7" y="40.4" width="1.2" height="0.9" fill="#2060ff"/><rect x="41.1" y="38.8" width="1.2" height="0.9" fill="#1030ff"/><rect x="51.8" y="40.1" width="1.2" height="0.9" fill="#1030ff"/><rect x="61.9" y="38.4" width="1.2" height="0.9" fill="#2060ff"/><rect x="29.0" y="37.9" width="1.2" height="0.9" fill="#0a20c0"/><rect x="17.2" y="41.1" width="1.2" height="0.9" fill="#1030ff"/><rect x="50.9" y="40.9" width="1.2" height="0.9" fill="#1840e0"/><rect x="59.0" y="41.9" width="1.2" height="0.9" fill="#0a20c0"/><rect x="16.2" y="42.2" width="1.2" height="0.9" fill="#40a0ff"/><rect x="26.0" y="39.3" width="1.2" height="0.9" fill="#1840e0"/><rect x="15.2" y="41.7" width="1.2" height="0.9" fill="#40a0ff"/><rect x="69.4" y="37.5" width="1.2" height="0.9" fill="#1030ff"/><rect x="12.0" y="39.6" width="1.2" height="0.9" fill="#0a20c0"/><rect x="22.1" y="38.8" width="1.2" height="0.9" fill="#1840e0"/><rect x="51.9" y="39.3" width="1.2" height="0.9" fill="#1840e0"/><rect x="79.1" y="39.8" width="1.2" height="0.9" fill="#1840e0"/><rect x="66.7" y="40.8" width="1.2" height="0.9" fill="#2060ff"/><rect x="21.6" y="42.0" width="1.2" height="0.9" fill="#40a0ff"/><rect x="52.5" y="40.3" width="1.2" height="0.9" fill="#0a20c0"/><rect x="73.0" y="39.9" width="1.2" height="0.9" fill="#40a0ff"/><rect x="23.9" y="42.0" width="1.2" height="0.9" fill="#1030ff"/><rect x="58.7" y="39.1" width="1.2" height="0.9" fill="#2060ff"/><rect x="69.3" y="40.4" width="1.2" height="0.9" fill="#2060ff"/><rect x="64.5" y="40.3" width="1.2" height="0.9" fill="#2060ff"/><rect x="85.1" y="40.3" width="1.2" height="0.9" fill="#0a20c0"/><rect x="23.6" y="41.1" width="1.2" height="0.9" fill="#40a0ff"/><rect x="37.8" y="41.5" width="1.2" height="0.9" fill="#0a20c0"/><rect x="21.3" y="38.2" width="1.2" height="0.9" fill="#0a20c0"/><rect x="79.6" y="40.4" width="1.2" height="0.9" fill="#2060ff"/><rect x="83.3" y="42.5" width="1.2" height="0.9" fill="#1840e0"/><rect x="72.7" y="38.0" width="1.2" height="0.9" fill="#40a0ff"/><rect x="83.9" y="39.0" width="1.2" height="0.9" fill="#2060ff"/><rect x="69.1" y="40.2" width="1.2" height="0.9" fill="#40a0ff"/><rect x="29.1" y="39.4" width="1.2" height="0.9" fill="#2060ff"/><rect x="44.5" y="40.9" width="1.2" height="0.9" fill="#0a20c0"/><rect x="76.6" y="41.5" width="1.2" height="0.9" fill="#1030ff"/><rect x="51.9" y="39.6" width="1.2" height="0.9" fill="#40a0ff"/><rect x="61.8" y="41.7" width="1.2" height="0.9" fill="#1840e0"/><rect x="56.1" y="39.5" width="1.2" height="0.9" fill="#0a20c0"/><rect x="54.5" y="40.2" width="1.2" height="0.9" fill="#1840e0"/><rect x="15.0" y="39.4" width="1.2" height="0.9" fill="#2060ff"/><rect x="19.2" y="39.9" width="1.2" height="0.9" fill="#1840e0"/><rect x="60.2" y="41.4" width="1.2" height="0.9" fill="#0a20c0"/><rect x="68.8" y="41.4" width="1.2" height="0.9" fill="#1030ff"/><rect x="55.8" y="38.2" width="1.2" height="0.9" fill="#1030ff"/><rect x="47.2" y="40.3" width="1.2" height="0.9" fill="#1840e0"/><rect x="50.4" y="41.8" width="1.2" height="0.9" fill="#1030ff"/><rect x="13.7" y="39.8" width="1.2" height="0.9" fill="#1030ff"/><rect x="50.1" y="37.9" width="1.2" height="0.9" fill="#1840e0"/><rect x="70.2" y="42.3" width="1.2" height="0.9" fill="#2060ff"/><rect x="79.6" y="40.2" width="1.2" height="0.9" fill="#2060ff"/><rect x="70.8" y="38.4" width="1.2" height="0.9" fill="#1840e0"/><rect x="61.0" y="41.5" width="1.2" height="0.9" fill="#1030ff"/><rect x="28.9" y="41.9" width="1.2" height="0.9" fill="#40a0ff"/><rect x="78.1" y="42.1" width="1.2" height="0.9" fill="#1840e0"/><rect x="51.8" y="40.2" width="1.2" height="0.9" fill="#0a20c0"/><rect x="34.6" y="39.2" width="1.2" height="0.9" fill="#1030ff"/><rect x="86.3" y="40.1" width="1.2" height="0.9" fill="#2060ff"/><rect x="71.8" y="41.5" width="1.2" height="0.9" fill="#0a20c0"/><rect x="64.0" y="38.1" width="1.2" height="0.9" fill="#1840e0"/><rect x="60.8" y="39.4" width="1.2" height="0.9" fill="#2060ff"/><rect x="48.5" y="41.4" width="1.2" height="0.9" fill="#1840e0"/><rect x="51.7" y="41.7" width="1.2" height="0.9" fill="#0a20c0"/><rect x="63.3" y="41.8" width="1.2" height="0.9" fill="#40a0ff"/><rect x="17.1" y="38.6" width="1.2" height="0.9" fill="#40a0ff"/><rect x="24.9" y="38.1" width="1.2" height="0.9" fill="#40a0ff"/><rect x="69.2" y="39.6" width="1.2" height="0.9" fill="#0a20c0"/><rect x="86.7" y="38.5" width="1.2" height="0.9" fill="#1030ff"/><rect x="45.1" y="40.1" width="1.2" height="0.9" fill="#1840e0"/><rect x="49.8" y="37.6" width="1.2" height="0.9" fill="#1030ff"/><rect x="69.4" y="38.5" width="1.2" height="0.9" fill="#40a0ff"/><rect x="39.4" y="41.2" width="1.2" height="0.9" fill="#0a20c0"/><rect x="68.8" y="40.0" width="1.2" height="0.9" fill="#2060ff"/><rect x="83.8" y="39.7" width="1.2" height="0.9" fill="#1840e0"/><rect x="66.0" y="38.4" width="1.2" height="0.9" fill="#1840e0"/><rect x="39.1" y="39.3" width="1.2" height="0.9" fill="#0a20c0"/><rect x="67.1" y="37.8" width="1.2" height="0.9" fill="#40a0ff"/><rect x="29.1" y="41.4" width="1.2" height="0.9" fill="#1030ff"/><rect x="69.2" y="39.2" width="1.2" height="0.9" fill="#0a20c0"/><rect x="49.4" y="42.2" width="1.2" height="0.9" fill="#1030ff"/><rect x="31.9" y="38.6" width="1.2" height="0.9" fill="#40a0ff"/><rect x="22.3" y="40.2" width="1.2" height="0.9" fill="#40a0ff"/><rect x="50.2" y="39.3" width="1.2" height="0.9" fill="#0a20c0"/><rect x="25.3" y="39.4" width="1.2" height="0.9" fill="#0a20c0"/><rect x="49.3" y="38.9" width="1.2" height="0.9" fill="#1840e0"/><rect x="79.3" y="40.4" width="1.2" height="0.9" fill="#40a0ff"/><rect x="72.5" y="39.1" width="1.2" height="0.9" fill="#2060ff"/><rect x="71.7" y="39.6" width="1.2" height="0.9" fill="#1840e0"/><rect x="24.1" y="39.3" width="1.2" height="0.9" fill="#40a0ff"/><rect x="53.0" y="38.9" width="1.2" height="0.9" fill="#40a0ff"/><rect x="77.8" y="40.1" width="1.2" height="0.9" fill="#0a20c0"/><rect x="68.3" y="38.2" width="1.2" height="0.9" fill="#40a0ff"/><rect x="87.0" y="37.6" width="1.2" height="0.9" fill="#0a20c0"/><rect x="48.7" y="37.7" width="1.2" height="0.9" fill="#40a0ff"/><rect x="75.0" y="38.5" width="1.2" height="0.9" fill="#2060ff"/><rect x="68.0" y="42.3" width="1.2" height="0.9" fill="#40a0ff"/><rect x="38.6" y="39.6" width="1.2" height="0.9" fill="#1840e0"/><rect x="39.4" y="37.6" width="1.2" height="0.9" fill="#2060ff"/><rect x="74.2" y="41.8" width="1.2" height="0.9" fill="#1840e0"/><rect x="77.5" y="38.1" width="1.2" height="0.9" fill="#40a0ff"/><rect x="47.3" y="40.4" width="1.2" height="0.9" fill="#40a0ff"/><rect x="59.6" y="41.4" width="1.2" height="0.9" fill="#40a0ff"/><rect x="19.4" y="39.1" width="1.2" height="0.9" fill="#1030ff"/><rect x="71.0" y="39.0" width="1.2" height="0.9" fill="#1840e0"/><rect x="73.8" y="39.9" width="1.2" height="0.9" fill="#2060ff"/><rect x="45.1" y="37.8" width="1.2" height="0.9" fill="#2060ff"/><rect x="28.6" y="37.6" width="1.2" height="0.9" fill="#2060ff"/><rect x="13.3" y="40.1" width="1.2" height="0.9" fill="#0a20c0"/><rect x="71.3" y="39.0" width="1.2" height="0.9" fill="#40a0ff"/><rect x="36.1" y="37.6" width="1.2" height="0.9" fill="#40a0ff"/><rect x="63.1" y="40.3" width="1.2" height="0.9" fill="#40a0ff"/><rect x="23.6" y="38.0" width="1.2" height="0.9" fill="#1030ff"/><rect x="44.8" y="40.1" width="1.2" height="0.9" fill="#1840e0"/><rect x="31.5" y="38.5" width="1.2" height="0.9" fill="#40a0ff"/><rect x="79.4" y="41.2" width="1.2" height="0.9" fill="#40a0ff"/><rect x="20.7" y="41.8" width="1.2" height="0.9" fill="#40a0ff"/><rect x="83.5" y="40.8" width="1.2" height="0.9" fill="#0a20c0"/><rect x="22.6" y="42.2" width="1.2" height="0.9" fill="#1840e0"/><rect x="61.8" y="42.2" width="1.2" height="0.9" fill="#2060ff"/><rect x="55.5" y="42.4" width="1.2" height="0.9" fill="#2060ff"/><rect x="66.1" y="37.5" width="1.2" height="0.9" fill="#2060ff"/><rect x="56.6" y="40.0" width="1.2" height="0.9" fill="#1030ff"/><rect x="34.3" y="40.2" width="1.2" height="0.9" fill="#0a20c0"/><rect x="83.1" y="39.7" width="1.2" height="0.9" fill="#1840e0"/><rect x="81.6" y="40.2" width="1.2" height="0.9" fill="#40a0ff"/><rect x="61.1" y="37.9" width="1.2" height="0.9" fill="#0a20c0"/><rect x="83.2" y="38.5" width="1.2" height="0.9" fill="#0a20c0"/><rect x="41.6" y="38.8" width="1.2" height="0.9" fill="#1840e0"/><rect x="58.3" y="41.4" width="1.2" height="0.9" fill="#40a0ff"/><rect x="43.9" y="40.6" width="1.2" height="0.9" fill="#40a0ff"/><rect x="88.2" y="38.8" width="1.2" height="0.9" fill="#0a20c0"/><rect x="48.0" y="38.6" width="1.2" height="0.9" fill="#1030ff"/><rect x="85.9" y="42.2" width="1.2" height="0.9" fill="#40a0ff"/><rect x="39.8" y="39.8" width="1.2" height="0.9" fill="#1030ff"/><rect x="53.3" y="38.5" width="1.2" height="0.9" fill="#40a0ff"/><rect x="86.2" y="39.0" width="1.2" height="0.9" fill="#2060ff"/><rect x="31.8" y="38.7" width="1.2" height="0.9" fill="#2060ff"/><rect x="18.2" y="39.1" width="1.2" height="0.9" fill="#40a0ff"/><rect x="84.8" y="39.9" width="1.2" height="0.9" fill="#1030ff"/><rect x="82.9" y="39.1" width="1.2" height="0.9" fill="#1030ff"/><rect x="16.2" y="37.8" width="1.2" height="0.9" fill="#1030ff"/><rect x="61.0" y="40.7" width="1.2" height="0.9" fill="#1030ff"/><rect x="68.0" y="40.0" width="1.2" height="0.9" fill="#2060ff"/><rect x="75.8" y="42.1" width="1.2" height="0.9" fill="#2060ff"/><rect x="17.7" y="40.9" width="1.2" height="0.9" fill="#1030ff"/><rect x="26.6" y="38.3" width="1.2" height="0.9" fill="#2060ff"/><rect x="84.8" y="40.6" width="1.2" height="0.9" fill="#1030ff"/><rect x="84.5" y="42.2" width="1.2" height="0.9" fill="#1840e0"/><rect x="59.8" y="38.9" width="1.2" height="0.9" fill="#40a0ff"/><rect x="58.3" y="39.4" width="1.2" height="0.9" fill="#1030ff"/><rect x="76.6" y="38.9" width="1.2" height="0.9" fill="#1840e0"/><rect x="55.9" y="40.6" width="1.2" height="0.9" fill="#2060ff"/><rect x="41.2" y="42.1" width="1.2" height="0.9" fill="#40a0ff"/><rect x="45.9" y="39.9" width="1.2" height="0.9" fill="#40a0ff"/><rect x="43.5" y="42.5" width="1.2" height="0.9" fill="#0a20c0"/><rect x="13.8" y="41.3" width="1.2" height="0.9" fill="#1030ff"/><rect x="19.6" y="39.6" width="1.2" height="0.9" fill="#2060ff"/><rect x="84.0" y="40.0" width="1.2" height="0.9" fill="#1840e0"/><rect x="46.3" y="42.1" width="1.2" height="0.9" fill="#1030ff"/><rect x="80.6" y="38.0" width="1.2" height="0.9" fill="#1840e0"/><rect x="55.1" y="40.4" width="1.2" height="0.9" fill="#0a20c0"/><rect x="41.2" y="38.0" width="1.2" height="0.9" fill="#2060ff"/><rect x="11.7" y="40.3" width="1.2" height="0.9" fill="#0a20c0"/><rect x="56.6" y="39.1" width="1.2" height="0.9" fill="#1840e0"/><rect x="19.6" y="40.0" width="1.2" height="0.9" fill="#2060ff"/><rect x="64.2" y="38.9" width="1.2" height="0.9" fill="#1840e0"/><rect x="25.0" y="42.0" width="1.2" height="0.9" fill="#1030ff"/><rect x="58.5" y="38.4" width="1.2" height="0.9" fill="#1030ff"/><rect x="86.0" y="38.4" width="1.2" height="0.9" fill="#2060ff"/><rect x="60.0" y="41.6" width="1.2" height="0.9" fill="#1030ff"/><rect x="47.9" y="40.5" width="1.2" height="0.9" fill="#0a20c0"/><rect x="74.4" y="39.3" width="1.2" height="0.9" fill="#0a20c0"/><rect x="19.9" y="38.6" width="1.2" height="0.9" fill="#40a0ff"/><rect x="23.4" y="38.7" width="1.2" height="0.9" fill="#1840e0"/><rect x="76.6" y="42.0" width="1.2" height="0.9" fill="#0a20c0"/><rect x="17.9" y="40.8" width="1.2" height="0.9" fill="#1030ff"/><rect x="84.3" y="39.8" width="1.2" height="0.9" fill="#40a0ff"/><rect x="41.7" y="42.5" width="1.2" height="0.9" fill="#2060ff"/><rect x="43.9" y="38.3" width="1.2" height="0.9" fill="#1030ff"/><rect x="28.0" y="38.0" width="1.2" height="0.9" fill="#1030ff"/><rect x="21.9" y="39.5" width="1.2" height="0.9" fill="#0a20c0"/><rect x="76.9" y="39.4" width="1.2" height="0.9" fill="#1030ff"/><rect x="66.2" y="41.3" width="1.2" height="0.9" fill="#40a0ff"/><rect x="13.9" y="41.1" width="1.2" height="0.9" fill="#2060ff"/><rect x="69.9" y="42.2" width="1.2" height="0.9" fill="#0a20c0"/><rect x="18.7" y="41.8" width="1.2" height="0.9" fill="#1840e0"/><rect x="47.8" y="40.0" width="1.2" height="0.9" fill="#1030ff"/><rect x="24.2" y="42.4" width="1.2" height="0.9" fill="#2060ff"/><rect x="12.1" y="37.6" width="1.2" height="0.9" fill="#0a20c0"/><rect x="54.5" y="42.2" width="1.2" height="0.9" fill="#40a0ff"/><rect x="73.6" y="38.6" width="1.2" height="0.9" fill="#2060ff"/><rect x="28.3" y="42.0" width="1.2" height="0.9" fill="#1030ff"/><rect x="63.5" y="37.8" width="1.2" height="0.9" fill="#1030ff"/><rect x="58.2" y="38.1" width="1.2" height="0.9" fill="#1840e0"/><rect x="82.2" y="38.0" width="1.2" height="0.9" fill="#2060ff"/><rect x="45.7" y="42.5" width="1.2" height="0.9" fill="#1840e0"/><rect x="19.2" y="39.2" width="1.2" height="0.9" fill="#0a20c0"/><rect x="24.3" y="42.1" width="1.2" height="0.9" fill="#1840e0"/><rect x="41.8" y="39.8" width="1.2" height="0.9" fill="#2060ff"/><rect x="65.6" y="41.7" width="1.2" height="0.9" fill="#2060ff"/><rect x="50.5" y="41.7" width="1.2" height="0.9" fill="#1030ff"/><rect x="31.8" y="40.1" width="1.2" height="0.9" fill="#0a20c0"/><rect x="12.1" y="39.2" width="1.2" height="0.9" fill="#2060ff"/><rect x="22.8" y="40.4" width="1.2" height="0.9" fill="#40a0ff"/><rect x="54.1" y="40.7" width="1.2" height="0.9" fill="#0a20c0"/><rect x="20.6" y="40.4" width="1.2" height="0.9" fill="#40a0ff"/><rect x="43.5" y="39.6" width="1.2" height="0.9" fill="#2060ff"/><rect x="51.4" y="40.3" width="1.2" height="0.9" fill="#40a0ff"/><rect x="13.3" y="42.3" width="1.2" height="0.9" fill="#0a20c0"/><rect x="54.5" y="37.7" width="1.2" height="0.9" fill="#2060ff"/><rect x="60.6" y="39.9" width="1.2" height="0.9" fill="#2060ff"/><rect x="25.2" y="42.0" width="1.2" height="0.9" fill="#1030ff"/><rect x="28.8" y="39.8" width="1.2" height="0.9" fill="#2060ff"/><rect x="20.4" y="41.5" width="1.2" height="0.9" fill="#40a0ff"/><rect x="82.5" y="39.5" width="1.2" height="0.9" fill="#40a0ff"/><rect x="45.9" y="40.7" width="1.2" height="0.9" fill="#1840e0"/><rect x="22.3" y="40.4" width="1.2" height="0.9" fill="#40a0ff"/><rect x="53.4" y="39.6" width="1.2" height="0.9" fill="#1840e0"/><rect x="30.6" y="42.6" width="1.2" height="0.9" fill="#40a0ff"/><rect x="87.5" y="41.9" width="1.2" height="0.9" fill="#0a20c0"/><rect x="67.0" y="40.0" width="1.2" height="0.9" fill="#1840e0"/><rect x="48.0" y="39.2" width="1.2" height="0.9" fill="#1840e0"/><rect x="41.1" y="40.8" width="1.2" height="0.9" fill="#40a0ff"/><rect x="45.0" y="41.1" width="1.2" height="0.9" fill="#40a0ff"/><rect x="60.0" y="39.8" width="1.2" height="0.9" fill="#1840e0"/><rect x="62.7" y="39.0" width="1.2" height="0.9" fill="#1030ff"/><rect x="49.3" y="39.5" width="1.2" height="0.9" fill="#1840e0"/><rect x="68.9" y="38.0" width="1.2" height="0.9" fill="#0a20c0"/><rect x="54.6" y="41.1" width="1.2" height="0.9" fill="#1840e0"/><rect x="67.4" y="41.2" width="1.2" height="0.9" fill="#40a0ff"/><rect x="83.5" y="38.1" width="1.2" height="0.9" fill="#1030ff"/><rect x="13.2" y="40.7" width="1.2" height="0.9" fill="#2060ff"/><path d="M49 34 L52 34 L50.5 35.6 Z" fill="#e03030"/></svg>
<div style="left:312px;top:31px;width:20px;height:6px;line-height:6px;text-align:center;font-size:5.6px;font-family:'Liberation Sans',sans-serif;color:#d0c8ff;white-space:pre;overflow:hidden;">1000</div>
<div style="left:312px;top:56.5px;width:20px;height:6.0px;line-height:6.0px;text-align:center;font-size:5.6px;font-family:'Liberation Sans',sans-serif;color:#d0c8ff;white-space:pre;overflow:hidden;">1000</div>
<div style="left:338.5px;top:31px;width:20.0px;height:6px;line-height:6px;text-align:center;font-size:5.6px;font-family:'Liberation Sans',sans-serif;color:#d0c8ff;white-space:pre;overflow:hidden;">1500</div>
<div style="left:338.5px;top:56.5px;width:20.0px;height:6.0px;line-height:6.0px;text-align:center;font-size:5.6px;font-family:'Liberation Sans',sans-serif;color:#d0c8ff;white-space:pre;overflow:hidden;">1500</div>
<div style="left:364.5px;top:31px;width:20.0px;height:6px;line-height:6px;text-align:center;font-size:5.6px;font-family:'Liberation Sans',sans-serif;color:#d0c8ff;white-space:pre;overflow:hidden;">2000</div>
<div style="left:364.5px;top:56.5px;width:20.0px;height:6.0px;line-height:6.0px;text-align:center;font-size:5.6px;font-family:'Liberation Sans',sans-serif;color:#d0c8ff;white-space:pre;overflow:hidden;">2000</div>
<div style="left:144px;top:27px;width:2px;height:71px;background:linear-gradient(90deg,#a0a0a0 50%,#fff 50%)"></div>
<div style="left:267px;top:27px;width:2px;height:71px;background:linear-gradient(90deg,#a0a0a0 50%,#fff 50%)"></div>
<div style="left:25px;top:29px;width:26px;height:12px;box-sizing:border-box;border-top:1px solid #fff;border-left:1px solid #fff;border-right:1px solid #707070;border-bottom:1px solid #707070;background:#f0f0f0;display:flex;align-items:center;justify-content:center;font-size:6.5px;font-family:'Liberation Sans',sans-serif;color:#404040;white-space:pre;overflow:hidden;">TX</div>
<div style="left:25px;top:44px;width:26px;height:12px;box-sizing:border-box;border-top:1px solid #fff;border-left:1px solid #fff;border-right:1px solid #707070;border-bottom:1px solid #707070;background:#f0f0f0;display:flex;align-items:center;justify-content:center;font-size:6.5px;font-family:'Liberation Sans',sans-serif;color:#404040;white-space:pre;overflow:hidden;">TX OFF</div>
<div style="left:27.4px;top:62.21px;line-height:8.58px;font-size:6.6px;font-family:'Liberation Sans',sans-serif;color:#303030;white-space:pre;transform:scaleX(0.894);transform-origin:0 50%;">SN0dB</div>
<div style="left:149.8px;top:30.45px;line-height:9.1px;font-size:7px;font-family:'Liberation Sans',sans-serif;color:#303030;white-space:pre;transform:scaleX(0.912);transform-origin:0 50%;">1500Hz</div>
<div style="left:155px;top:39.65px;line-height:9.1px;font-size:7px;font-family:'Liberation Sans',sans-serif;color:#303030;white-space:pre;transform:scaleX(0.832);transform-origin:0 50%;">+40Hz</div>
<div style="left:150px;top:62.21px;line-height:8.58px;font-size:6.6px;font-family:'Liberation Sans',sans-serif;color:#303030;white-space:pre;transform:scaleX(0.909);transform-origin:0 50%;">SN1dB</div>
<div style="left:272.5px;top:30.45px;line-height:9.1px;font-size:7px;font-family:'Liberation Sans',sans-serif;color:#303030;white-space:pre;transform:scaleX(0.912);transform-origin:0 50%;">1500Hz</div>
<div style="left:278px;top:39.65px;line-height:9.1px;font-size:7px;font-family:'Liberation Sans',sans-serif;color:#303030;white-space:pre;transform:scaleX(0.884);transform-origin:0 50%;">-40Hz</div>
<div style="left:273px;top:62.21px;line-height:8.58px;font-size:6.6px;font-family:'Liberation Sans',sans-serif;color:#303030;white-space:pre;transform:scaleX(0.909);transform-origin:0 50%;">SN0dB</div>
<div style="left:28.7px;top:74.55px;line-height:9.1px;font-size:7px;font-family:'Liberation Sans',sans-serif;color:#282850;white-space:pre;transform:scaleX(0.925);transform-origin:0 50%;">0ppm</div>
<div style="left:64.5px;top:74px;width:13.0px;height:8.700000000000003px;box-sizing:border-box;border-top:1px solid #fff;border-left:1px solid #fff;border-right:1px solid #707070;border-bottom:1px solid #707070;background:#f0f0f0;display:flex;align-items:center;justify-content:center;font-size:5.6px;font-family:'Liberation Sans',sans-serif;color:#303030;white-space:pre;overflow:hidden;">BF1</div>
<div style="left:79px;top:74px;width:13px;height:8.700000000000003px;box-sizing:border-box;border-top:1px solid #fff;border-left:1px solid #fff;border-right:1px solid #707070;border-bottom:1px solid #707070;background:#f0f0f0;display:flex;align-items:center;justify-content:center;font-size:5.6px;font-family:'Liberation Sans',sans-serif;color:#303030;white-space:pre;overflow:hidden;">BF2</div>
<div style="left:93.7px;top:74px;width:13.0px;height:8.700000000000003px;box-sizing:border-box;border-top:1px solid #808080;border-left:1px solid #808080;border-right:1px solid #fff;border-bottom:1px solid #fff;background:#fafafa;display:flex;align-items:center;justify-content:center;font-size:5.6px;font-family:'Liberation Sans',sans-serif;color:#303030;white-space:pre;overflow:hidden;">BF3</div>
<div style="left:107.4px;top:74px;width:13.599999999999994px;height:8.700000000000003px;box-sizing:border-box;border-top:1px solid #fff;border-left:1px solid #fff;border-right:1px solid #707070;border-bottom:1px solid #707070;background:#f0f0f0;display:flex;align-items:center;justify-content:center;font-size:5.6px;font-family:'Liberation Sans',sans-serif;color:#303030;white-space:pre;overflow:hidden;">BF4</div>
<div style="left:129px;top:74px;width:13px;height:8.700000000000003px;box-sizing:border-box;border-top:1px solid #808080;border-left:1px solid #808080;border-right:1px solid #fff;border-bottom:1px solid #fff;background:#fff;display:flex;align-items:center;justify-content:center;font-size:5.6px;font-family:'Liberation Sans',sans-serif;color:#303030;white-space:pre;overflow:hidden;">AFC</div>
<div style="left:25.8px;top:85.8px;width:8px;height:8px;border-radius:50%;background:#808080"></div>
<div style="left:37px;top:84.05px;line-height:11.7px;font-size:9px;font-family:'Liberation Sans',sans-serif;color:#202020;font-weight:bold;white-space:pre;transform:scaleX(0.838);transform-origin:0 50%;">bpsk</div>
<div style="left:58.5px;top:84.86px;line-height:9.88px;font-size:7.6px;font-family:'Liberation Sans',sans-serif;color:#ff20ff;font-weight:bold;white-space:pre;font-style:italic">/</div>
<div style="left:66.2px;top:84.75px;line-height:11.7px;font-size:9px;font-family:'Liberation Sans',sans-serif;color:#202020;font-weight:bold;white-space:pre;transform:scaleX(0.857);transform-origin:0 50%;">93.75</div>
<div style="left:98px;top:86px;width:12.700000000000003px;height:8.599999999999994px;box-sizing:border-box;border-top:1px solid #fff;border-left:1px solid #fff;border-right:1px solid #707070;border-bottom:1px solid #707070;background:#f0f0f0;display:flex;align-items:center;justify-content:center;font-size:6.5px;font-family:'Liberation Sans',sans-serif;color:#202020;white-space:pre;overflow:hidden;">X</div>
<div style="left:112.8px;top:86px;width:12.700000000000003px;height:8.599999999999994px;box-sizing:border-box;border-top:1px solid #fff;border-left:1px solid #fff;border-right:1px solid #707070;border-bottom:1px solid #707070;background:#f0f0f0;display:flex;align-items:center;justify-content:center;font-size:6.5px;font-family:'Liberation Sans',sans-serif;color:#202020;white-space:pre;overflow:hidden;">G</div>
<div style="left:127.7px;top:86px;width:13.299999999999997px;height:8.599999999999994px;box-sizing:border-box;border-top:1px solid #fff;border-left:1px solid #fff;border-right:1px solid #707070;border-bottom:1px solid #707070;background:#f0f0f0;display:flex;align-items:center;justify-content:center;font-size:6.5px;font-family:'Liberation Sans',sans-serif;color:#202020;white-space:pre;overflow:hidden;">C</div>
<div style="left:151.2px;top:74.55px;line-height:9.1px;font-size:7px;font-family:'Liberation Sans',sans-serif;color:#282850;white-space:pre;transform:scaleX(0.925);transform-origin:0 50%;">0ppm</div>
<div style="left:187.0px;top:74px;width:13.0px;height:8.700000000000003px;box-sizing:border-box;border-top:1px solid #fff;border-left:1px solid #fff;border-right:1px solid #707070;border-bottom:1px solid #707070;background:#f0f0f0;display:flex;align-items:center;justify-content:center;font-size:5.6px;font-family:'Liberation Sans',sans-serif;color:#303030;white-space:pre;overflow:hidden;">BF1</div>
<div style="left:201.5px;top:74px;width:13.0px;height:8.700000000000003px;box-sizing:border-box;border-top:1px solid #fff;border-left:1px solid #fff;border-right:1px solid #707070;border-bottom:1px solid #707070;background:#f0f0f0;display:flex;align-items:center;justify-content:center;font-size:5.6px;font-family:'Liberation Sans',sans-serif;color:#303030;white-space:pre;overflow:hidden;">BF2</div>
<div style="left:216.2px;top:74px;width:13.0px;height:8.700000000000003px;box-sizing:border-box;border-top:1px solid #808080;border-left:1px solid #808080;border-right:1px solid #fff;border-bottom:1px solid #fff;background:#fafafa;display:flex;align-items:center;justify-content:center;font-size:5.6px;font-family:'Liberation Sans',sans-serif;color:#303030;white-space:pre;overflow:hidden;">BF3</div>
<div style="left:229.9px;top:74px;width:13.599999999999994px;height:8.700000000000003px;box-sizing:border-box;border-top:1px solid #fff;border-left:1px solid #fff;border-right:1px solid #707070;border-bottom:1px solid #707070;background:#f0f0f0;display:flex;align-items:center;justify-content:center;font-size:5.6px;font-family:'Liberation Sans',sans-serif;color:#303030;white-space:pre;overflow:hidden;">BF4</div>
<div style="left:251.5px;top:74px;width:13.0px;height:8.700000000000003px;box-sizing:border-box;border-top:1px solid #808080;border-left:1px solid #808080;border-right:1px solid #fff;border-bottom:1px solid #fff;background:#fff;display:flex;align-items:center;justify-content:center;font-size:5.6px;font-family:'Liberation Sans',sans-serif;color:#303030;white-space:pre;overflow:hidden;">AFC</div>
<div style="left:148.3px;top:85.8px;width:8px;height:8px;border-radius:50%;background:#808080"></div>
<div style="left:159.5px;top:84.05px;line-height:11.7px;font-size:9px;font-family:'Liberation Sans',sans-serif;color:#202020;font-weight:bold;white-space:pre;transform:scaleX(0.838);transform-origin:0 50%;">bpsk</div>
<div style="left:181.0px;top:84.86px;line-height:9.88px;font-size:7.6px;font-family:'Liberation Sans',sans-serif;color:#2020ff;font-weight:bold;white-space:pre;font-style:italic">/</div>
<div style="left:188.7px;top:84.75px;line-height:11.7px;font-size:9px;font-family:'Liberation Sans',sans-serif;color:#202020;font-weight:bold;white-space:pre;transform:scaleX(0.857);transform-origin:0 50%;">93.75</div>
<div style="left:220.5px;top:86px;width:12.699999999999989px;height:8.599999999999994px;box-sizing:border-box;border-top:1px solid #fff;border-left:1px solid #fff;border-right:1px solid #707070;border-bottom:1px solid #707070;background:#f0f0f0;display:flex;align-items:center;justify-content:center;font-size:6.5px;font-family:'Liberation Sans',sans-serif;color:#202020;white-space:pre;overflow:hidden;">X</div>
<div style="left:235.3px;top:86px;width:12.699999999999989px;height:8.599999999999994px;box-sizing:border-box;border-top:1px solid #fff;border-left:1px solid #fff;border-right:1px solid #707070;border-bottom:1px solid #707070;background:#f0f0f0;display:flex;align-items:center;justify-content:center;font-size:6.5px;font-family:'Liberation Sans',sans-serif;color:#202020;white-space:pre;overflow:hidden;">G</div>
<div style="left:250.2px;top:86px;width:13.300000000000011px;height:8.599999999999994px;box-sizing:border-box;border-top:1px solid #fff;border-left:1px solid #fff;border-right:1px solid #707070;border-bottom:1px solid #707070;background:#f0f0f0;display:flex;align-items:center;justify-content:center;font-size:6.5px;font-family:'Liberation Sans',sans-serif;color:#202020;white-space:pre;overflow:hidden;">C</div>
<div style="left:273.7px;top:74.55px;line-height:9.1px;font-size:7px;font-family:'Liberation Sans',sans-serif;color:#282850;white-space:pre;transform:scaleX(0.925);transform-origin:0 50%;">0ppm</div>
<div style="left:309.5px;top:74px;width:13.0px;height:8.700000000000003px;box-sizing:border-box;border-top:1px solid #fff;border-left:1px solid #fff;border-right:1px solid #707070;border-bottom:1px solid #707070;background:#f0f0f0;display:flex;align-items:center;justify-content:center;font-size:5.6px;font-family:'Liberation Sans',sans-serif;color:#303030;white-space:pre;overflow:hidden;">BF1</div>
<div style="left:324px;top:74px;width:13px;height:8.700000000000003px;box-sizing:border-box;border-top:1px solid #fff;border-left:1px solid #fff;border-right:1px solid #707070;border-bottom:1px solid #707070;background:#f0f0f0;display:flex;align-items:center;justify-content:center;font-size:5.6px;font-family:'Liberation Sans',sans-serif;color:#303030;white-space:pre;overflow:hidden;">BF2</div>
<div style="left:338.7px;top:74px;width:13.0px;height:8.700000000000003px;box-sizing:border-box;border-top:1px solid #808080;border-left:1px solid #808080;border-right:1px solid #fff;border-bottom:1px solid #fff;background:#fafafa;display:flex;align-items:center;justify-content:center;font-size:5.6px;font-family:'Liberation Sans',sans-serif;color:#303030;white-space:pre;overflow:hidden;">BF3</div>
<div style="left:352.4px;top:74px;width:13.600000000000023px;height:8.700000000000003px;box-sizing:border-box;border-top:1px solid #fff;border-left:1px solid #fff;border-right:1px solid #707070;border-bottom:1px solid #707070;background:#f0f0f0;display:flex;align-items:center;justify-content:center;font-size:5.6px;font-family:'Liberation Sans',sans-serif;color:#303030;white-space:pre;overflow:hidden;">BF4</div>
<div style="left:374px;top:74px;width:13px;height:8.700000000000003px;box-sizing:border-box;border-top:1px solid #808080;border-left:1px solid #808080;border-right:1px solid #fff;border-bottom:1px solid #fff;background:#fff;display:flex;align-items:center;justify-content:center;font-size:5.6px;font-family:'Liberation Sans',sans-serif;color:#303030;white-space:pre;overflow:hidden;">AFC</div>
<div style="left:270.8px;top:85.8px;width:8px;height:8px;border-radius:50%;background:#808080"></div>
<div style="left:282px;top:84.05px;line-height:11.7px;font-size:9px;font-family:'Liberation Sans',sans-serif;color:#1ec81e;font-weight:bold;white-space:pre;transform:scaleX(0.838);transform-origin:0 50%;">bpsk</div>
<div style="left:303.5px;top:84.86px;line-height:9.88px;font-size:7.6px;font-family:'Liberation Sans',sans-serif;color:#1ec81e;font-weight:bold;white-space:pre;font-style:italic">/</div>
<div style="left:311.2px;top:84.75px;line-height:11.7px;font-size:9px;font-family:'Liberation Sans',sans-serif;color:#1ec81e;font-weight:bold;white-space:pre;transform:scaleX(0.857);transform-origin:0 50%;">93.75</div>
<div style="left:343px;top:86px;width:12.699999999999989px;height:8.599999999999994px;box-sizing:border-box;border-top:1px solid #fff;border-left:1px solid #fff;border-right:1px solid #707070;border-bottom:1px solid #707070;background:#f0f0f0;display:flex;align-items:center;justify-content:center;font-size:6.5px;font-family:'Liberation Sans',sans-serif;color:#202020;white-space:pre;overflow:hidden;">X</div>
<div style="left:357.8px;top:86px;width:12.699999999999989px;height:8.599999999999994px;box-sizing:border-box;border-top:1px solid #fff;border-left:1px solid #fff;border-right:1px solid #707070;border-bottom:1px solid #707070;background:#f0f0f0;display:flex;align-items:center;justify-content:center;font-size:6.5px;font-family:'Liberation Sans',sans-serif;color:#202020;white-space:pre;overflow:hidden;">G</div>
<div style="left:372.7px;top:86px;width:13.300000000000011px;height:8.599999999999994px;box-sizing:border-box;border-top:1px solid #fff;border-left:1px solid #fff;border-right:1px solid #707070;border-bottom:1px solid #707070;background:#f0f0f0;display:flex;align-items:center;justify-content:center;font-size:6.5px;font-family:'Liberation Sans',sans-serif;color:#202020;white-space:pre;overflow:hidden;">C</div>
<div style="left:390.5px;top:28.6px;width:11.0px;height:46.4px;background:#e8e8e8;border:1px solid #a0a0a0"></div>
<div style="left:391.5px;top:35px;width:9.0px;height:18px;background:#fff"></div>
<div style="left:391.5px;top:54px;width:9.0px;height:14px;background:#fff"></div>
<svg style="left:390px;top:28px" width="12" height="48"><path d="M4 5 L6 3 L8 5 Z" fill="#000"/><path d="M4 43 L6 45 L8 43 Z" fill="#000"/></svg>
<div style="left:391px;top:77.48px;line-height:8.45px;font-size:6.5px;font-family:'Liberation Sans',sans-serif;color:#404040;white-space:pre;transform:scaleX(1.107);transform-origin:0 50%;">Pow</div>
<div style="left:389px;top:86.3px;width:13px;height:8.600000000000009px;box-sizing:border-box;border:1px solid #adadad;background:#ffd8b0;display:flex;align-items:center;justify-content:center;font-size:5.4px;font-family:'Liberation Sans',sans-serif;color:#e06000;white-space:pre;overflow:hidden;">Tune</div>
<div style="left:24px;top:98px;width:121.5px;height:29px;background:#ffc0ff;border:1px solid #909090"></div>
<div style="left:146px;top:98px;width:121px;height:29px;background:#c0c0ff;border:1px solid #909090"></div>
<div style="left:268px;top:98px;width:121.5px;height:29px;background:#80ff80;border:1px solid #909090"></div>
<div style="left:26.6px;top:132.7px;width:5.6px;height:5.6px;border-radius:50%;border:0.6px solid #707070;background:#fff"></div><div style="left:28.3px;top:134.4px;width:2.2px;height:2.2px;border-radius:50%;background:#202020"></div>
<div style="left:35px;top:132.08px;line-height:8.45px;font-size:6.5px;font-family:'Liberation Sans',sans-serif;color:#707060;white-space:pre;transform:scaleX(0.843);transform-origin:0 50%;">TX</div>
<div style="left:49.3px;top:129.7px;width:75.5px;height:11.5px;background:#ffff00;border:1px solid #a0a0a0"></div>
<div style="left:49.3px;top:129.7px;width:75.5px;height:11.5px;line-height:11.5px;text-align:center;font-size:8px;font-family:'Liberation Sans',sans-serif;color:#605000;white-space:pre;overflow:hidden;">JH3ECA/JPG</div>
<div style="left:173px;top:128.62px;line-height:12.35px;font-size:9.5px;font-family:'Liberation Sans',sans-serif;color:#ff1010;font-weight:bold;white-space:pre;transform:scaleX(1.016);transform-origin:0 50%;">AutoRX</div>
<div style="left:241.9px;top:131.58px;line-height:8.45px;font-size:6.5px;font-family:'Liberation Sans',sans-serif;color:#505040;white-space:pre;transform:scaleX(0.823);transform-origin:0 50%;">PTT</div>
<div style="left:255px;top:130px;width:15.600000000000023px;height:10.400000000000006px;box-sizing:border-box;border:1px solid #adadad;background:#fff;display:flex;align-items:center;justify-content:center;font-size:6px;font-family:'Liberation Sans',sans-serif;color:#303030;white-space:pre;overflow:hidden;">RTS</div>
<div style="left:274.4px;top:130px;width:26.200000000000045px;height:10.400000000000006px;box-sizing:border-box;border:1px solid #adadad;background:#fff;display:flex;align-items:center;justify-content:center;font-size:6px;font-family:'Liberation Sans',sans-serif;color:#303030;white-space:pre;overflow:hidden;">COM10</div>
<div style="left:304px;top:131.58px;line-height:8.45px;font-size:6.5px;font-family:'Liberation Sans',sans-serif;color:#505050;white-space:pre;transform:scaleX(0.905);transform-origin:0 50%;">Sound</div>
<div style="left:323px;top:130.5px;width:21.600000000000023px;height:9.5px;background:#fff;border:1px solid #a0a0a0"></div>
<div style="left:325px;top:132.20px;line-height:7.8px;font-size:6px;font-family:'Liberation Sans',sans-serif;color:#000;white-space:pre;">-1</div>
<div style="left:337px;top:131.5px;width:6.600000000000023px;height:7.5px;box-sizing:border-box;border:1px solid #adadad;background:#e8e8e8;display:flex;align-items:center;justify-content:center;font-size:5px;font-family:'Liberation Sans',sans-serif;color:#000;white-space:pre;overflow:hidden;"></div>
<svg style="left:337px;top:131px" width="7" height="8"><path d="M2 3.5 L5 3.5 L3.5 5.2 Z" fill="#000"/></svg>
<div style="left:356.6px;top:130px;width:45.299999999999955px;height:10.400000000000006px;background:#ffff00;border:1px solid #a0a0a0"></div>
<div style="left:356.6px;top:130px;width:45.299999999999955px;height:10.400000000000006px;line-height:10.400000000000006px;text-align:center;font-size:8px;font-family:'Liberation Sans',sans-serif;color:#404000;white-space:pre;overflow:hidden;">JH3ECA</div>
<div style="left:26.6px;top:146.8px;width:5.6px;height:5.6px;border-radius:50%;border:0.6px solid #707070;background:#fff"></div>
<div style="left:35px;top:146.18px;line-height:8.45px;font-size:6.5px;font-family:'Liberation Sans',sans-serif;color:#707060;white-space:pre;transform:scaleX(0.953);transform-origin:0 50%;">Msg</div>
<div style="left:48.9px;top:144.9px;width:154.9px;height:9.599999999999994px;background:#fff;border:1px solid #909090"></div>
<div style="left:50.5px;top:145.95px;line-height:9.1px;font-size:7px;font-family:'Liberation Sans',sans-serif;color:#000;white-space:pre;">各局こんばんは～～～</div>
<div style="left:196.5px;top:145.9px;width:6.5px;height:7.599999999999994px;box-sizing:border-box;border:1px solid #adadad;background:#e8e8e8;display:flex;align-items:center;justify-content:center;font-size:5px;font-family:'Liberation Sans',sans-serif;color:#000;white-space:pre;overflow:hidden;"></div>
<svg style="left:196px;top:146px" width="8" height="8"><path d="M2 3.5 L5.5 3.5 L3.75 5.3 Z" fill="#000"/></svg>
<div style="left:206.9px;top:145px;width:12.699999999999989px;height:10.599999999999994px;box-sizing:border-box;border-top:1px solid #fff;border-left:1px solid #fff;border-right:1px solid #707070;border-bottom:1px solid #707070;background:#f0f0f0;display:flex;align-items:center;justify-content:center;font-size:8px;font-family:'Liberation Sans',sans-serif;color:#000;font-weight:bold;white-space:pre;overflow:hidden;">+</div>
<div style="left:221.6px;top:145px;width:13.0px;height:10.599999999999994px;box-sizing:border-box;border-top:1px solid #fff;border-left:1px solid #fff;border-right:1px solid #707070;border-bottom:1px solid #707070;background:#f0f0f0;display:flex;align-items:center;justify-content:center;font-size:6.5px;font-family:'Liberation Sans',sans-serif;color:#303030;white-space:pre;overflow:hidden;">X</div>
<div style="left:240.2px;top:146.8px;width:5.6px;height:5.6px;border-radius:50%;border:0.6px solid #707070;background:#fff"></div>
<div style="left:248px;top:146.18px;line-height:8.45px;font-size:6.5px;font-family:'Liberation Sans',sans-serif;color:#707060;white-space:pre;transform:scaleX(0.923);transform-origin:0 50%;">CW</div>
<div style="left:261.3px;top:145px;width:70.89999999999998px;height:10px;background:#fff;border:1px solid #909090"></div>
<div style="left:263px;top:146.38px;line-height:8.84px;font-size:6.8px;font-family:'Liberation Sans',sans-serif;color:#404040;white-space:pre;">JH3ECA</div>
<div style="left:325px;top:146px;width:6.5px;height:8px;box-sizing:border-box;border:1px solid #adadad;background:#e8e8e8;display:flex;align-items:center;justify-content:center;font-size:5px;font-family:'Liberation Sans',sans-serif;color:#000;white-space:pre;overflow:hidden;"></div>
<svg style="left:325px;top:146px" width="8" height="8"><path d="M1.5 3.5 L5 3.5 L3.25 5.3 Z" fill="#000"/></svg>
<div style="left:336px;top:145px;width:11.800000000000011px;height:10.599999999999994px;box-sizing:border-box;border-top:1px solid #fff;border-left:1px solid #fff;border-right:1px solid #707070;border-bottom:1px solid #707070;background:#f0f0f0;display:flex;align-items:center;justify-content:center;font-size:8px;font-family:'Liberation Sans',sans-serif;color:#000;font-weight:bold;white-space:pre;overflow:hidden;">+</div>
<div style="left:349.3px;top:145px;width:12.5px;height:10.599999999999994px;box-sizing:border-box;border-top:1px solid #fff;border-left:1px solid #fff;border-right:1px solid #707070;border-bottom:1px solid #707070;background:#f0f0f0;display:flex;align-items:center;justify-content:center;font-size:6.5px;font-family:'Liberation Sans',sans-serif;color:#303030;white-space:pre;overflow:hidden;">X</div>
<div style="left:364px;top:146.5px;width:5.5px;height:5.5px;box-sizing:border-box;border:0.5px solid #8a8a8a;background:#fff"></div>
<div style="left:372px;top:146.18px;line-height:8.45px;font-size:6.5px;font-family:'Liberation Sans',sans-serif;color:#606050;white-space:pre;transform:scaleX(0.950);transform-origin:0 50%;">+ MyCALL</div>
<svg style="left:445px;top:3px" width="9" height="9"><path d="M4.5 0 Q5 4 9 4.5 Q5 5 4.5 9 Q4 5 0 4.5 Q4 4 4.5 0Z" fill="#4a4af0"/></svg>
<div style="left:455.9px;top:4.17px;line-height:8.45px;font-size:6.5px;font-family:'Liberation Sans',sans-serif;color:#6a6a6a;white-space:pre;transform:scaleX(0.811);transform-origin:0 50%;">JTDX - Wide Graph</div>
<svg style="left:838px;top:1px" width="60" height="13"><path d="M5 6.5 H11" stroke="#909090" stroke-width="0.8"/><rect x="26" y="4" width="5" height="5.5" fill="none" stroke="#c8c8c8" stroke-width="0.8"/><path d="M47.5 4 L52.5 9.5 M52.5 4 L47.5 9.5" stroke="#909090" stroke-width="0.8"/></svg>
<div style="left:441.5px;top:14px;width:457.0px;height:1px;background:#888"></div>
<div style="left:441.5px;top:15px;width:457.0px;height:13px;background:#fff"></div>
<div style="left:445.4px;top:19.8px;width:5.900000000000034px;height:5.899999999999999px;box-sizing:border-box;border:0.5px solid #8a8a8a;background:#fff"></div>
<svg style="position:absolute;left:445.4px;top:19.8px" width="5.90" height="5.90"><path d="M1.18 2.95 L2.48 4.60 L4.84 0.88" stroke="#000" stroke-width="1.1" fill="none"/></svg>
<div style="left:454px;top:19.94px;line-height:8.32px;font-size:6.4px;font-family:'Liberation Sans',sans-serif;color:#202020;white-space:pre;transform:scaleX(0.835);transform-origin:0 50%;">Controls</div>
<svg style="left:441px;top:15px" width="458" height="13"><rect x="0.0" y="10.5" width="0.8" height="2.5" fill="#555"/><rect x="16.0" y="10.5" width="0.8" height="2.5" fill="#555"/><rect x="32.0" y="10.5" width="0.8" height="2.5" fill="#555"/><rect x="48.0" y="10.5" width="0.8" height="2.5" fill="#555"/><rect x="64.0" y="8.5" width="0.8" height="4.5" fill="#333"/><rect x="80.0" y="10.5" width="0.8" height="2.5" fill="#555"/><rect x="96.0" y="10.5" width="0.8" height="2.5" fill="#555"/><rect x="112.0" y="10.5" width="0.8" height="2.5" fill="#555"/><rect x="128.0" y="10.5" width="0.8" height="2.5" fill="#555"/><rect x="144.0" y="8.5" width="0.8" height="4.5" fill="#333"/><rect x="160.0" y="10.5" width="0.8" height="2.5" fill="#555"/><rect x="176.0" y="10.5" width="0.8" height="2.5" fill="#555"/><rect x="192.0" y="10.5" width="0.8" height="2.5" fill="#555"/><rect x="208.0" y="10.5" width="0.8" height="2.5" fill="#555"/><rect x="224.0" y="8.5" width="0.8" height="4.5" fill="#333"/><rect x="240.0" y="10.5" width="0.8" height="2.5" fill="#555"/><rect x="256.0" y="10.5" width="0.8" height="2.5" fill="#555"/><rect x="272.0" y="10.5" width="0.8" height="2.5" fill="#555"/><rect x="288.0" y="10.5" width="0.8" height="2.5" fill="#555"/><rect x="304.0" y="8.5" width="0.8" height="4.5" fill="#333"/><rect x="320.0" y="10.5" width="0.8" height="2.5" fill="#555"/><rect x="336.0" y="10.5" width="0.8" height="2.5" fill="#555"/><rect x="352.0" y="10.5" width="0.8" height="2.5" fill="#555"/><rect x="368.0" y="10.5" width="0.8" height="2.5" fill="#555"/><rect x="384.0" y="8.5" width="0.8" height="4.5" fill="#333"/><rect x="400.0" y="10.5" width="0.8" height="2.5" fill="#555"/><rect x="416.0" y="10.5" width="0.8" height="2.5" fill="#555"/><rect x="432.0" y="10.5" width="0.8" height="2.5" fill="#555"/><rect x="448.0" y="10.5" width="0.8" height="2.5" fill="#555"/><rect x="464.0" y="8.5" width="0.8" height="4.5" fill="#333"/></svg>
<div style="left:493.0px;top:14.5px;width:24.0px;height:8.0px;line-height:8.0px;text-align:center;font-size:7px;font-family:'Liberation Sans',sans-serif;color:#202020;white-space:pre;overflow:hidden;">500</div>
<div style="left:573.0px;top:14.5px;width:24.0px;height:8.0px;line-height:8.0px;text-align:center;font-size:7px;font-family:'Liberation Sans',sans-serif;color:#202020;white-space:pre;overflow:hidden;">1000</div>
<div style="left:653.0px;top:14.5px;width:24.0px;height:8.0px;line-height:8.0px;text-align:center;font-size:7px;font-family:'Liberation Sans',sans-serif;color:#202020;white-space:pre;overflow:hidden;">1500</div>
<div style="left:733.0px;top:14.5px;width:24.0px;height:8.0px;line-height:8.0px;text-align:center;font-size:7px;font-family:'Liberation Sans',sans-serif;color:#202020;white-space:pre;overflow:hidden;">2000</div>
<div style="left:813.0px;top:14.5px;width:24.0px;height:8.0px;line-height:8.0px;text-align:center;font-size:7px;font-family:'Liberation Sans',sans-serif;color:#202020;white-space:pre;overflow:hidden;">2500</div>
<div style="left:895px;top:14.75px;line-height:9.1px;font-size:7px;font-family:'Liberation Sans',sans-serif;color:#202020;white-space:pre;">3</div>
<svg style="left:441.5px;top:28px" width="457" height="55"><defs><filter id="nz" x="0" y="0" width="100%" height="100%"><feTurbulence type="fractalNoise" baseFrequency="0.8 0.9" numOctaves="1" seed="4"/><feColorMatrix type="matrix" values="0.6 0 0 0 -0.4  3.0 0 0 0 -1.75  0 0 0 0 0  0 0 0 0 1"/></filter><filter id="nz2" x="0" y="0" width="100%" height="100%"><feTurbulence type="fractalNoise" baseFrequency="0.09 0.6" numOctaves="2" seed="9"/><feColorMatrix type="matrix" values="6 0 0 0 -3.6  5.5 0 0 0 -3.1  0 0 0 0 0  0 0 0 0 1"/></filter><filter id="nz3" x="0" y="0" width="100%" height="100%"><feTurbulence type="fractalNoise" baseFrequency="0.9 0.9" numOctaves="1" seed="7"/><feColorMatrix type="matrix" values="1.0 0 0 0 -0.65  3.4 0 0 0 -1.95  0 0 0 0 0  0 0 0 0 1"/></filter></defs><rect x="0" y="0" width="322" height="55" fill="#000" filter="url(#nz)"/><rect x="322" y="0" width="135" height="55" fill="#000" filter="url(#nz3)"/><rect x="322" y="0" width="135" height="55" fill="#000" filter="url(#nz2)" opacity="0.9" style="mix-blend-mode:lighten"/><defs><linearGradient id="dk" x1="0" y1="0" x2="1" y2="1"><stop offset="0.35" stop-color="#000" stop-opacity="0"/><stop offset="0.8" stop-color="#000" stop-opacity="0.6"/></linearGradient><linearGradient id="dk2" x1="0" y1="0" x2="0" y2="1"><stop offset="0" stop-color="#000" stop-opacity="0.65"/><stop offset="0.5" stop-color="#000" stop-opacity="0"/></linearGradient></defs><rect x="390" y="0" width="67" height="30" fill="url(#dk2)"/><rect x="407" y="25" width="11" height="1" fill="#60b010"/><rect x="364" y="28" width="7" height="1" fill="#a0c818"/><rect x="390" y="44" width="6" height="1" fill="#c8d820"/><rect x="340" y="25" width="6" height="1" fill="#c8d820"/><rect x="374" y="30" width="10" height="1" fill="#60b010"/><rect x="370" y="36" width="6" height="1" fill="#e0e030"/><rect x="334" y="1" width="7" height="1" fill="#a0c818"/><rect x="339" y="33" width="11" height="1" fill="#80c010"/><rect x="356" y="24" width="8" height="1" fill="#60b010"/><rect x="358" y="0" width="5" height="1" fill="#60b010"/><rect x="375" y="36" width="5" height="1" fill="#80c010"/><rect x="354" y="17" width="7" height="1" fill="#e0e030"/><rect x="383" y="16" width="10" height="1" fill="#c8d820"/><rect x="369" y="47" width="10" height="1" fill="#c8d820"/><rect x="347" y="53" width="7" height="1" fill="#c8d820"/><rect x="335" y="26" width="10" height="1" fill="#60b010"/><rect x="366" y="4" width="8" height="1" fill="#80c010"/><rect x="368" y="5" width="9" height="1" fill="#c8d820"/><rect x="347" y="53" width="7" height="1" fill="#c8d820"/><rect x="340" y="1" width="11" height="1" fill="#60b010"/><rect x="362" y="10" width="7" height="1" fill="#a0c818"/><rect x="346" y="23" width="10" height="1" fill="#c8d820"/><rect x="333" y="22" width="8" height="1" fill="#c8d820"/><rect x="327" y="12" width="10" height="1" fill="#e0e030"/><rect x="423" y="35" width="7" height="1" fill="#60b010"/><rect x="391" y="14" width="9" height="1" fill="#80c010"/><rect x="353" y="21" width="7" height="1" fill="#c8d820"/><rect x="348" y="33" width="9" height="1" fill="#e0e030"/><rect x="372" y="25" width="6" height="1" fill="#60b010"/><rect x="337" y="10" width="6" height="1" fill="#80c010"/><rect x="356" y="50" width="7" height="1" fill="#a0c818"/><rect x="365" y="41" width="12" height="1" fill="#a0c818"/><rect x="370" y="38" width="5" height="1" fill="#60b010"/><rect x="349" y="3" width="5" height="1" fill="#c8d820"/><rect x="337" y="28" width="10" height="1" fill="#80c010"/><rect x="390" y="23" width="11" height="1" fill="#80c010"/><rect x="422" y="29" width="6" height="1" fill="#a0c818"/><rect x="375" y="26" width="5" height="1" fill="#80c010"/><rect x="377" y="12" width="5" height="1" fill="#80c010"/><rect x="362" y="23" width="7" height="1" fill="#c8d820"/><rect x="332" y="3" width="6" height="1" fill="#c8d820"/><rect x="373" y="20" width="11" height="1" fill="#80c010"/><rect x="355" y="36" width="6" height="1" fill="#e0e030"/><rect x="366" y="2" width="4" height="1" fill="#60b010"/><rect x="372" y="50" width="4" height="1" fill="#e0e030"/><rect x="423" y="35" width="11" height="1" fill="#c8d820"/><rect x="397" y="40" width="5" height="1" fill="#60b010"/><rect x="387" y="41" width="6" height="1" fill="#80c010"/><rect x="364" y="19" width="11" height="1" fill="#c8d820"/><rect x="397" y="48" width="11" height="1" fill="#e0e030"/><rect x="353" y="1" width="10" height="1" fill="#60b010"/><rect x="348" y="32" width="5" height="1" fill="#80c010"/><rect x="353" y="48" width="9" height="1" fill="#60b010"/><rect x="359" y="51" width="11" height="1" fill="#e0e030"/><rect x="360" y="5" width="12" height="1" fill="#c8d820"/><rect x="336" y="17" width="5" height="1" fill="#60b010"/><rect x="345" y="43" width="11" height="1" fill="#80c010"/><rect x="358" y="49" width="7" height="1" fill="#e0e030"/><rect x="341" y="9" width="9" height="1" fill="#60b010"/><rect x="336" y="27" width="8" height="1" fill="#a0c818"/><rect x="373" y="35" width="7" height="1" fill="#a0c818"/><rect x="358" y="21" width="6" height="1" fill="#a0c818"/><rect x="350" y="27" width="4" height="1" fill="#c8d820"/><rect x="349" y="52" width="11" height="1" fill="#60b010"/><rect x="350" y="15" width="7" height="1" fill="#60b010"/><rect x="383" y="21" width="11" height="1" fill="#80c010"/><rect x="330" y="4" width="4" height="1" fill="#80c010"/><rect x="397" y="48" width="9" height="1" fill="#80c010"/><rect x="352" y="36" width="4" height="1" fill="#a0c818"/><rect x="354" y="22" width="8" height="1" fill="#a0c818"/><rect x="397" y="43" width="4" height="1" fill="#c8d820"/><rect x="368" y="25" width="9" height="1" fill="#c8d820"/><rect x="376" y="38" width="7" height="1" fill="#60b010"/><rect x="341" y="14" width="12" height="1" fill="#c8d820"/><rect x="384" y="10" width="8" height="1" fill="#80c010"/><rect x="374" y="30" width="6" height="1" fill="#60b010"/><rect x="357" y="47" width="7" height="1" fill="#c8d820"/><rect x="359" y="23" width="11" height="1" fill="#60b010"/><rect x="349" y="11" width="4" height="1" fill="#60b010"/><rect x="359" y="30" width="9" height="1" fill="#60b010"/><rect x="364" y="18" width="7" height="1" fill="#c8d820"/><rect x="361" y="40" width="5" height="1" fill="#a0c818"/><rect x="374" y="13" width="10" height="1" fill="#c8d820"/><rect x="407" y="54" width="9" height="1" fill="#80c010"/><rect x="359" y="50" width="4" height="1" fill="#80c010"/><rect x="366" y="28" width="10" height="1" fill="#80c010"/><rect x="342" y="27" width="4" height="1" fill="#a0c818"/><rect x="400" y="45" width="6" height="1" fill="#e0e030"/><rect x="355" y="18" width="6" height="1" fill="#60b010"/><rect x="382" y="8" width="11" height="1" fill="#60b010"/><rect x="342" y="32" width="5" height="1" fill="#a0c818"/><rect x="395" y="24" width="12" height="1" fill="#a0c818"/><rect x="359" y="29" width="12" height="1" fill="#80c010"/><rect x="379" y="17" width="7" height="1" fill="#80c010"/><rect x="389" y="47" width="12" height="1" fill="#e0e030"/><rect x="365" y="15" width="5" height="1" fill="#e0e030"/><rect x="323" y="0" width="10" height="1" fill="#c8d820"/><rect x="411" y="30" width="12" height="1" fill="#e0e030"/><rect x="346" y="7" width="5" height="1" fill="#a0c818"/><rect x="359" y="4" width="10" height="1" fill="#80c010"/><rect x="337" y="14" width="11" height="1" fill="#a0c818"/><rect x="397" y="19" width="11" height="1" fill="#e0e030"/><rect x="378" y="17" width="7" height="1" fill="#60b010"/><rect x="354" y="34" width="4" height="1" fill="#c8d820"/><rect x="335" y="11" width="7" height="1" fill="#c8d820"/><rect x="354" y="38" width="11" height="1" fill="#c8d820"/><rect x="364" y="27" width="5" height="1" fill="#e0e030"/><rect x="349" y="34" width="10" height="1" fill="#c8d820"/><rect x="385" y="21" width="10" height="1" fill="#e0e030"/><rect x="405" y="34" width="12" height="1" fill="#a0c818"/><rect x="352" y="29" width="12" height="1" fill="#e0e030"/><rect x="387" y="32" width="9" height="1" fill="#a0c818"/><rect x="389" y="17" width="9" height="1" fill="#a0c818"/><rect x="401" y="12" width="6" height="1" fill="#a0c818"/><rect x="326" y="7" width="5" height="1" fill="#80c010"/><rect x="408" y="21" width="12" height="1" fill="#a0c818"/><rect x="360" y="11" width="4" height="1" fill="#c8d820"/><rect x="359" y="11" width="9" height="1" fill="#c8d820"/><rect x="410" y="39" width="9" height="1" fill="#e0e030"/><rect x="378" y="55" width="11" height="1" fill="#c8d820"/><rect x="377" y="1" width="12" height="1" fill="#e0e030"/><rect x="353" y="28" width="6" height="1" fill="#c8d820"/><rect x="335" y="11" width="6" height="1" fill="#80c010"/><rect x="356" y="51" width="11" height="1" fill="#c8d820"/><rect x="348" y="42" width="9" height="1" fill="#60b010"/><rect x="371" y="26" width="9" height="1" fill="#c8d820"/><rect x="341" y="35" width="4" height="1" fill="#a0c818"/><rect x="382" y="10" width="10" height="1" fill="#a0c818"/><rect x="353" y="33" width="5" height="1" fill="#e0e030"/><rect x="348" y="44" width="10" height="1" fill="#e0e030"/><rect x="350" y="33" width="12" height="1" fill="#e0e030"/><rect x="356" y="54" width="5" height="1" fill="#a0c818"/><rect x="368" y="45" width="10" height="1" fill="#a0c818"/><rect x="384" y="49" width="10" height="1" fill="#a0c818"/><rect x="369" y="22" width="6" height="1" fill="#c8d820"/><rect x="347" y="44" width="9" height="1" fill="#e0e030"/><rect x="339" y="3" width="8" height="1" fill="#80c010"/><rect x="355" y="19" width="12" height="1" fill="#c8d820"/><rect x="370" y="21" width="11" height="1" fill="#a0c818"/><rect x="347" y="39" width="4" height="1" fill="#c8d820"/><rect x="435" y="34" width="7" height="1" fill="#80c010"/><rect x="392" y="24" width="10" height="1" fill="#c8d820"/><rect x="326" y="5" width="8" height="1" fill="#80c010"/><rect x="384" y="50" width="12" height="1" fill="#e0e030"/><rect x="356" y="47" width="5" height="1" fill="#60b010"/><rect x="384" y="45" width="4" height="1" fill="#60b010"/><rect x="367" y="51" width="6" height="1" fill="#60b010"/><rect x="354" y="26" width="4" height="1" fill="#60b010"/><rect x="381" y="52" width="10" height="1" fill="#80c010"/><rect x="362" y="29" width="8" height="1" fill="#60b010"/><rect x="358" y="36" width="12" height="1" fill="#80c010"/><rect x="339" y="36" width="7" height="1" fill="#e0e030"/><rect x="331" y="2" width="6" height="1" fill="#60b010"/><rect x="398" y="42" width="10" height="1" fill="#c8d820"/><rect x="384" y="32" width="9" height="1" fill="#c8d820"/><rect x="351" y="44" width="8" height="1" fill="#a0c818"/><rect x="378" y="2" width="5" height="1" fill="#60b010"/><rect x="351" y="8" width="5" height="1" fill="#c8d820"/><rect x="344" y="34" width="11" height="1" fill="#c8d820"/><rect x="337" y="11" width="12" height="1" fill="#000" opacity="0.8"/><rect x="386" y="7" width="14" height="2" fill="#000" opacity="0.8"/><rect x="363" y="25" width="13" height="2" fill="#000" opacity="0.8"/><rect x="424" y="20" width="6" height="2" fill="#000" opacity="0.8"/><rect x="360" y="40" width="5" height="2" fill="#000" opacity="0.8"/><rect x="409" y="43" width="9" height="2" fill="#000" opacity="0.8"/><rect x="417" y="15" width="13" height="1" fill="#000" opacity="0.8"/><rect x="426" y="35" width="7" height="1" fill="#000" opacity="0.8"/><rect x="413" y="28" width="7" height="1" fill="#000" opacity="0.8"/><rect x="331" y="35" width="8" height="2" fill="#000" opacity="0.8"/><rect x="335" y="1" width="7" height="2" fill="#000" opacity="0.8"/><rect x="341" y="4" width="14" height="1" fill="#000" opacity="0.8"/><rect x="410" y="30" width="9" height="2" fill="#000" opacity="0.8"/><rect x="357" y="26" width="9" height="2" fill="#000" opacity="0.8"/><rect x="436" y="41" width="5" height="1" fill="#000" opacity="0.8"/><rect x="434" y="25" width="7" height="2" fill="#000" opacity="0.8"/><rect x="363" y="23" width="6" height="2" fill="#000" opacity="0.8"/><rect x="436" y="8" width="13" height="2" fill="#000" opacity="0.8"/><rect x="426" y="16" width="6" height="2" fill="#000" opacity="0.8"/><rect x="404" y="36" width="11" height="2" fill="#000" opacity="0.8"/><rect x="341" y="4" width="13" height="2" fill="#000" opacity="0.8"/><rect x="389" y="45" width="4" height="1" fill="#000" opacity="0.8"/><rect x="446" y="17" width="13" height="1" fill="#000" opacity="0.8"/><rect x="393" y="38" width="9" height="2" fill="#000" opacity="0.8"/><rect x="358" y="48" width="14" height="2" fill="#000" opacity="0.8"/><rect x="345" y="20" width="11" height="2" fill="#000" opacity="0.8"/><rect x="432" y="24" width="8" height="2" fill="#000" opacity="0.8"/><rect x="381" y="17" width="12" height="1" fill="#000" opacity="0.8"/><rect x="435" y="5" width="4" height="2" fill="#000" opacity="0.8"/><rect x="404" y="37" width="7" height="2" fill="#000" opacity="0.8"/><rect x="399" y="44" width="13" height="1" fill="#000" opacity="0.8"/><rect x="426" y="10" width="8" height="1" fill="#000" opacity="0.8"/><rect x="337" y="12" width="6" height="2" fill="#000" opacity="0.8"/><rect x="413" y="53" width="10" height="1" fill="#000" opacity="0.8"/><rect x="369" y="32" width="12" height="1" fill="#000" opacity="0.8"/><rect x="365" y="18" width="5" height="2" fill="#000" opacity="0.8"/><rect x="411" y="5" width="6" height="1" fill="#000" opacity="0.8"/><rect x="412" y="41" width="7" height="1" fill="#000" opacity="0.8"/><rect x="445" y="27" width="9" height="2" fill="#000" opacity="0.8"/><rect x="373" y="22" width="9" height="1" fill="#000" opacity="0.8"/><rect x="398" y="27" width="5" height="1" fill="#000" opacity="0.8"/><rect x="435" y="23" width="14" height="2" fill="#000" opacity="0.8"/><rect x="432" y="47" width="5" height="2" fill="#000" opacity="0.8"/><rect x="411" y="53" width="12" height="2" fill="#000" opacity="0.8"/><rect x="432" y="39" width="10" height="2" fill="#000" opacity="0.8"/><rect x="361" y="50" width="6" height="2" fill="#000" opacity="0.8"/><rect x="371" y="38" width="10" height="2" fill="#000" opacity="0.8"/><rect x="365" y="29" width="4" height="2" fill="#000" opacity="0.8"/><rect x="345" y="17" width="14" height="1" fill="#000" opacity="0.8"/><rect x="353" y="43" width="4" height="2" fill="#000" opacity="0.8"/><rect x="391" y="1" width="4" height="2" fill="#000" opacity="0.8"/><rect x="353" y="6" width="7" height="1" fill="#000" opacity="0.8"/><rect x="390" y="33" width="12" height="1" fill="#000" opacity="0.8"/><rect x="444" y="24" width="10" height="1" fill="#000" opacity="0.8"/><rect x="449" y="50" width="14" height="2" fill="#000" opacity="0.8"/><rect x="392" y="47" width="10" height="2" fill="#000" opacity="0.8"/><rect x="428" y="36" width="5" height="2" fill="#000" opacity="0.8"/><rect x="381" y="47" width="7" height="1" fill="#000" opacity="0.8"/><rect x="379" y="44" width="12" height="2" fill="#000" opacity="0.8"/><rect x="337" y="43" width="7" height="1" fill="#000" opacity="0.8"/><rect x="445" y="48" width="11" height="1" fill="#000" opacity="0.8"/><rect x="407" y="39" width="6" height="2" fill="#000" opacity="0.8"/><rect x="371" y="9" width="8" height="1" fill="#000" opacity="0.8"/><rect x="456" y="35" width="8" height="1" fill="#000" opacity="0.8"/><rect x="428" y="8" width="4" height="1" fill="#000" opacity="0.8"/><rect x="437" y="45" width="6" height="1" fill="#000" opacity="0.8"/><rect x="408" y="19" width="12" height="1" fill="#000" opacity="0.8"/><rect x="418" y="49" width="5" height="2" fill="#000" opacity="0.8"/><rect x="354" y="1" width="7" height="1" fill="#000" opacity="0.8"/><rect x="386" y="43" width="4" height="2" fill="#000" opacity="0.8"/><rect x="350" y="29" width="8" height="2" fill="#000" opacity="0.8"/><rect x="340" y="17" width="8" height="2" fill="#000" opacity="0.8"/><rect x="339" y="37" width="5" height="1" fill="#000" opacity="0.8"/><rect x="380" y="6" width="11" height="1" fill="#000" opacity="0.8"/><rect x="332" y="36" width="10" height="2" fill="#000" opacity="0.8"/><rect x="402" y="13" width="11" height="1" fill="#000" opacity="0.8"/><rect x="437" y="47" width="7" height="1" fill="#000" opacity="0.8"/><rect x="378" y="16" width="12" height="2" fill="#000" opacity="0.8"/><rect x="426" y="52" width="12" height="1" fill="#000" opacity="0.8"/><rect x="355" y="14" width="5" height="2" fill="#000" opacity="0.8"/><rect x="365" y="17" width="11" height="2" fill="#000" opacity="0.8"/><rect x="379" y="25" width="5" height="1" fill="#000" opacity="0.8"/><rect x="347" y="34" width="14" height="1" fill="#000" opacity="0.8"/><rect x="381" y="10" width="11" height="1" fill="#000" opacity="0.8"/><rect x="334" y="6" width="5" height="2" fill="#000" opacity="0.8"/><rect x="339" y="22" width="10" height="1" fill="#000" opacity="0.8"/><rect x="427" y="36" width="10" height="2" fill="#000" opacity="0.8"/><rect x="382" y="18" width="4" height="2" fill="#000" opacity="0.8"/><rect x="370" y="34" width="7" height="1" fill="#000" opacity="0.8"/><rect x="354" y="14" width="8" height="2" fill="#000" opacity="0.8"/><rect x="34" y="21" width="4" height="1" fill="#6a7010"/><rect x="253" y="45" width="4" height="1" fill="#40a020"/><rect x="51" y="42" width="3" height="1" fill="#40a020"/><rect x="75" y="34" width="4" height="1" fill="#8a8a10"/><rect x="184" y="11" width="4" height="1" fill="#40a020"/><rect x="227" y="51" width="4" height="1" fill="#8a8a10"/><rect x="201" y="11" width="2" height="1" fill="#8a8a10"/><rect x="79" y="32" width="4" height="1" fill="#6a7010"/><rect x="106" y="51" width="3" height="1" fill="#6a7010"/><rect x="149" y="7" width="4" height="1" fill="#8a8a10"/><rect x="77" y="31" width="4" height="1" fill="#40a020"/><rect x="20" y="50" width="2" height="1" fill="#40a020"/><rect x="318" y="45" width="4" height="1" fill="#8a8a10"/><rect x="39" y="45" width="3" height="1" fill="#40a020"/><rect x="288" y="13" width="4" height="1" fill="#6a7010"/><rect x="267" y="10" width="4" height="1" fill="#8a8a10"/><rect x="146" y="22" width="4" height="1" fill="#8a8a10"/><rect x="99" y="37" width="4" height="1" fill="#6a7010"/><rect x="197" y="35" width="2" height="1" fill="#8a8a10"/><rect x="64" y="26" width="2" height="1" fill="#40a020"/><rect x="124" y="31" width="2" height="1" fill="#6a7010"/><rect x="167" y="15" width="4" height="1" fill="#6a7010"/><rect x="17" y="43" width="4" height="1" fill="#40a020"/><rect x="253" y="22" width="3" height="1" fill="#40a020"/><rect x="33" y="19" width="4" height="1" fill="#40a020"/><rect x="181" y="22" width="3" height="1" fill="#6a7010"/><rect x="285" y="25" width="4" height="1" fill="#6a7010"/><rect x="265" y="6" width="2" height="1" fill="#40a020"/><rect x="106" y="29" width="3" height="1" fill="#8a8a10"/><rect x="103" y="3" width="4" height="1" fill="#40a020"/><rect x="289" y="40" width="4" height="1" fill="#6a7010"/><rect x="241" y="17" width="4" height="1" fill="#8a8a10"/><rect x="78" y="46" width="2" height="1" fill="#40a020"/><rect x="280" y="53" width="3" height="1" fill="#40a020"/><rect x="34" y="50" width="4" height="1" fill="#6a7010"/><rect x="211" y="52" width="2" height="1" fill="#40a020"/><rect x="310" y="37" width="4" height="1" fill="#6a7010"/><rect x="181" y="9" width="4" height="1" fill="#40a020"/><rect x="135" y="7" width="2" height="1" fill="#8a8a10"/><rect x="167" y="7" width="4" height="1" fill="#40a020"/><rect x="305" y="0" width="2" height="1" fill="#40a020"/><rect x="96" y="18" width="2" height="1" fill="#6a7010"/><rect x="287" y="45" width="3" height="1" fill="#8a8a10"/><rect x="114" y="32" width="2" height="1" fill="#6a7010"/><rect x="10" y="49" width="3" height="1" fill="#6a7010"/><rect x="160" y="51" width="3" height="1" fill="#8a8a10"/><rect x="65" y="47" width="4" height="1" fill="#8a8a10"/><rect x="63" y="46" width="3" height="1" fill="#6a7010"/><rect x="5" y="35" width="4" height="1" fill="#40a020"/><rect x="65" y="35" width="2" height="1" fill="#8a8a10"/><rect x="209" y="17" width="3" height="1" fill="#6a7010"/><rect x="279" y="39" width="2" height="1" fill="#6a7010"/><rect x="223" y="52" width="3" height="1" fill="#6a7010"/><rect x="25" y="12" width="3" height="1" fill="#8a8a10"/><rect x="228" y="11" width="2" height="1" fill="#40a020"/><rect x="76" y="37" width="3" height="1" fill="#6a7010"/><rect x="258" y="29" width="2" height="1" fill="#40a020"/><rect x="166" y="54" width="2" height="1" fill="#40a020"/><rect x="73" y="7" width="4" height="1" fill="#8a8a10"/><rect x="149" y="4" width="4" height="1" fill="#8a8a10"/><rect x="0" y="7.2" width="457" height="1" fill="#28c828"/><rect x="0" y="19.2" width="457" height="1" fill="#28c828"/><rect x="0" y="31.2" width="457" height="1" fill="#28c828"/><rect x="0" y="43.2" width="457" height="1" fill="#28c828"/><rect x="315.5" y="42" width="1" height="13" fill="#c0e040"/><rect x="278" y="0" width="0.8" height="55" fill="#207020"/><rect x="150.4" y="32.1" width="9.3" height="10.9" rx="2" fill="#b0c818"/><rect x="151.9" y="33.3" width="6.3" height="8.5" rx="1.5" fill="#f02818"/><rect x="154.7" y="33.9" width="1.5" height="1" fill="#f0a020"/><rect x="155.0" y="35.6" width="1.5" height="1" fill="#f0a020"/><rect x="153.5" y="39.1" width="1.5" height="1" fill="#f0a020"/><rect x="152.8" y="35.6" width="1.5" height="1" fill="#f0a020"/><rect x="155.6" y="35.3" width="1.5" height="1" fill="#f0a020"/><rect x="153.6" y="37.4" width="1.5" height="1" fill="#f0a020"/><rect x="206.4" y="32.1" width="9.8" height="10.9" rx="2" fill="#b0c818"/><rect x="207.9" y="33.3" width="6.8" height="8.5" rx="1.5" fill="#f02818"/><rect x="209.3" y="39.8" width="1.5" height="1" fill="#f0a020"/><rect x="213.1" y="33.8" width="1.5" height="1" fill="#f0a020"/><rect x="210.6" y="38.8" width="1.5" height="1" fill="#f0a020"/><rect x="210.2" y="40.0" width="1.5" height="1" fill="#f0a020"/><rect x="210.8" y="34.8" width="1.5" height="1" fill="#f0a020"/><rect x="211.1" y="38.1" width="1.5" height="1" fill="#f0a020"/><rect x="221.9" y="19.0" width="12.5" height="11.5" rx="2" fill="#b0c818"/><rect x="223.4" y="20.2" width="9.5" height="9.1" rx="1.5" fill="#f02818"/><rect x="226.6" y="25.4" width="1.5" height="1" fill="#f0a020"/><rect x="229.8" y="24.4" width="1.5" height="1" fill="#f0a020"/><rect x="227.7" y="26.8" width="1.5" height="1" fill="#f0a020"/><rect x="229.0" y="24.4" width="1.5" height="1" fill="#f0a020"/><rect x="231.0" y="21.8" width="1.5" height="1" fill="#f0a020"/><rect x="229.7" y="21.7" width="1.5" height="1" fill="#f0a020"/><rect x="225.8" y="30" width="0.8" height="25" fill="#40c030"/><rect x="247.9" y="0" width="0.8" height="55" fill="#c01818"/><rect x="255" y="0" width="0.8" height="55" fill="#c01818"/></svg>
<div style="left:689px;top:21.5px;width:8.5px;height:6.5px;border:1px solid #e02020;background:#fff"></div>
<div style="left:690px;top:25px;width:6.5px;height:3px;background:#30e030"></div>
<svg style="left:441.5px;top:83px" width="457" height="28"><defs><linearGradient id="spg" x1="0" y1="0" x2="0" y2="1"><stop offset="0" stop-color="#020296"/><stop offset="0.3" stop-color="#02027a"/><stop offset="0.6" stop-color="#010140"/><stop offset="0.85" stop-color="#000018"/><stop offset="1" stop-color="#000006"/></linearGradient></defs><rect width="457" height="28" fill="url(#spg)"/><line x1="0" y1="3.5" x2="457" y2="3.5" stroke="#8088b0" stroke-width="0.6" stroke-dasharray="2.5 2" opacity="0.7"/><line x1="0" y1="7.5" x2="457" y2="7.5" stroke="#8088b0" stroke-width="0.6" stroke-dasharray="2.5 2" opacity="0.7"/><line x1="0" y1="11.5" x2="457" y2="11.5" stroke="#8088b0" stroke-width="0.6" stroke-dasharray="2.5 2" opacity="0.7"/><line x1="0" y1="15.3" x2="457" y2="15.3" stroke="#8088b0" stroke-width="0.6" stroke-dasharray="2.5 2" opacity="0.7"/><line x1="0" y1="19.3" x2="457" y2="19.3" stroke="#8088b0" stroke-width="0.6" stroke-dasharray="2.5 2" opacity="0.7"/><line x1="0" y1="23" x2="457" y2="23" stroke="#8088b0" stroke-width="0.6" stroke-dasharray="2.5 2" opacity="0.7"/><line x1="63.5" y1="0" x2="63.5" y2="28" stroke="#a0a0b0" stroke-width="0.6" stroke-dasharray="1 1.2" opacity="0.7"/><line x1="143.5" y1="0" x2="143.5" y2="28" stroke="#a0a0b0" stroke-width="0.6" stroke-dasharray="1 1.2" opacity="0.7"/><line x1="223.5" y1="0" x2="223.5" y2="28" stroke="#a0a0b0" stroke-width="0.6" stroke-dasharray="1 1.2" opacity="0.7"/><line x1="303.5" y1="0" x2="303.5" y2="28" stroke="#a0a0b0" stroke-width="0.6" stroke-dasharray="1 1.2" opacity="0.7"/><line x1="383.5" y1="0" x2="383.5" y2="28" stroke="#a0a0b0" stroke-width="0.6" stroke-dasharray="1 1.2" opacity="0.7"/><polyline points="0,24.7 1,25.4 2,25.2 3,22.6 4,25.9 5,23.8 6,23.4 7,23.1 8,23.5 9,25.3 10,23.1 11,20.2 12,23.3 13,26.0 14,23.5 15,24.4 16,23.2 17,25.0 18,25.7 19,23.8 20,21.4 21,22.3 22,23.7 23,25.4 24,23.6 25,22.1 26,22.6 27,23.0 28,23.8 29,21.2 30,25.9 31,25.2 32,25.9 33,23.8 34,22.8 35,25.4 36,22.6 37,22.8 38,24.7 39,23.7 40,24.5 41,23.6 42,20.4 43,26.1 44,22.7 45,24.4 46,23.4 47,25.5 48,21.2 49,22.6 50,23.1 51,25.9 52,23.5 53,23.0 54,23.6 55,26.1 56,26.0 57,24.3 58,24.2 59,22.2 60,26.1 61,24.8 62,22.2 63,25.3 64,23.8 65,25.3 66,24.9 67,23.8 68,23.5 69,25.3 70,23.6 71,24.8 72,22.5 73,23.4 74,24.2 75,24.8 76,23.8 77,25.2 78,23.8 79,25.6 80,26.0 81,24.4 82,23.1 83,25.9 84,25.0 85,25.1 86,25.3 87,24.9 88,24.7 89,24.8 90,22.6 91,24.1 92,23.3 93,22.8 94,22.0 95,23.6 96,21.3 97,23.9 98,24.6 99,23.9 100,23.5 101,22.9 102,21.6 103,22.8 104,23.7 105,25.9 106,24.0 107,24.8 108,23.0 109,24.5 110,26.0 111,23.8 112,20.4 113,22.5 114,25.7 115,24.1 116,23.5 117,23.9 118,25.8 119,23.4 120,24.3 121,23.6 122,24.3 123,22.0 124,24.1 125,25.3 126,22.5 127,23.5 128,25.3 129,23.5 130,26.1 131,24.7 132,24.8 133,22.7 134,23.6 135,23.7 136,24.4 137,23.8 138,23.1 139,24.1 140,25.7 141,22.6 142,24.0 143,25.0 144,24.2 145,23.9 146,25.6 147,23.6 148,22.7 149,25.0 150,23.5 151,23.8 152,24.5 153,23.7 154,24.6 155,22.7 156,25.5 157,22.4 158,26.0 159,22.3 160,23.3 161,25.9 162,23.0 163,23.6 164,24.0 165,23.5 166,22.7 167,24.6 168,23.8 169,23.6 170,24.3 171,21.5 172,23.0 173,24.3 174,24.5 175,23.4 176,23.4 177,22.9 178,23.8 179,23.1 180,22.5 181,20.6 182,23.4 183,24.2 184,22.9 185,22.7 186,25.9 187,20.4 188,24.9 189,23.0 190,23.8 191,23.7 192,23.8 193,23.0 194,24.8 195,24.1 196,24.4 197,24.6 198,22.9 199,20.5 200,24.2 201,22.5 202,25.7 203,24.0 204,22.9 205,23.1 206,23.9 207,23.0 208,23.5 209,23.5 210,21.4 211,23.8 212,25.0 213,24.2 214,22.9 215,23.5 216,25.1 217,21.8 218,22.8 219,26.0 220,23.6 221,23.5 222,25.1 223,23.4 224,25.9 225,24.1 226,20.0 227,21.9 228,26.1 229,22.6 230,25.7 231,24.4 232,22.7 233,22.7 234,24.0 235,19.7 236,23.1 237,23.9 238,22.8 239,22.9 240,25.8 241,25.6 242,22.6 243,24.3 244,23.9 245,25.1 246,23.6 247,25.5 248,22.9 249,22.8 250,25.4 251,21.5 252,22.8 253,24.6 254,22.7 255,22.7 256,23.5 257,22.9 258,23.6 259,24.5 260,24.9 261,24.6 262,25.4 263,25.9 264,25.0 265,25.4 266,21.6 267,23.4 268,21.0 269,23.4 270,23.0 271,25.6 272,24.7 273,24.0 274,21.5 275,25.5 276,22.8 277,23.1 278,24.1 279,23.7 280,25.8 281,24.1 282,25.3 283,24.4 284,22.0 285,21.1 286,22.6 287,24.2 288,23.9 289,23.5 290,24.5 291,25.2 292,23.8 293,26.0 294,25.6 295,21.3 296,22.9 297,22.9 298,25.7 299,25.4 300,25.0 301,24.7 302,21.8 303,24.6 304,23.9 305,22.6 306,23.9 307,25.0 308,26.0 309,25.8 310,24.9 311,25.4 312,24.6 313,24.4 314,21.1 315,24.6 316,25.1 317,25.8 318,22.6 319,24.9 320,25.7 321,25.5 322,24.7 323,24.4 324,23.4 325,24.5 326,22.5 327,23.1 328,25.7 329,24.7 330,22.9 331,22.3 332,21.4 333,20.6 334,20.8 335,24.0 336,22.7 337,18.5 338,23.7 339,23.1 340,21.6 341,24.0 342,20.9 343,24.3 344,17.5 345,22.5 346,20.5 347,22.7 348,21.2 349,23.7 350,21.1 351,22.7 352,20.6 353,23.7 354,20.0 355,19.0 356,20.1 357,23.2 358,23.5 359,24.1 360,22.6 361,18.9 362,20.5 363,21.8 364,21.4 365,22.2 366,20.1 367,21.4 368,22.0 369,21.7 370,23.1 371,20.1 372,21.3 373,24.1 374,21.0 375,23.0 376,22.4 377,21.2 378,20.3 379,20.7 380,19.9 381,20.0 382,24.4 383,21.4 384,20.0 385,21.0 386,19.8 387,21.8 388,20.6 389,24.4 390,20.3 391,24.3 392,20.3 393,23.4 394,22.5 395,22.7 396,17.1 397,21.6 398,23.6 399,21.4 400,23.3 401,20.2 402,21.6 403,24.5 404,21.6 405,21.8 406,21.5 407,20.0 408,24.0 409,17.8 410,24.3 411,20.2 412,24.1 413,19.7 414,21.6 415,23.3 416,23.4 417,22.1 418,21.8 419,22.7 420,23.8 421,24.6 422,23.4 423,23.4 424,23.2 425,22.5 426,24.0 427,24.7 428,22.7 429,22.6 430,22.1 431,24.1 432,25.8 433,24.4 434,25.9 435,26.1 436,23.1 437,22.8 438,25.2 439,23.9 440,23.6 441,23.8 442,24.3 443,23.2 444,21.0 445,23.0 446,23.4 447,25.3 448,23.4 449,24.8 450,24.8 451,23.4 452,24.1 453,22.0 454,25.2 455,19.9 456,24.3 457,22.6" stroke="#30e030" stroke-width="0.8" fill="none"/><rect x="247.9" y="0" width="0.8" height="28" fill="#c01818"/><rect x="255" y="0" width="0.8" height="28" fill="#c01818"/></svg>
<div style="left:441.5px;top:111px;width:457.0px;height:23px;background:#f0f0f0"></div>
<div style="left:445.6px;top:114.8px;width:5.899999999999977px;height:5.200000000000003px;box-sizing:border-box;border:0.5px solid #8a8a8a;background:#fff"></div>
<svg style="position:absolute;left:445.6px;top:114.8px" width="5.90" height="5.20"><path d="M1.18 2.60 L2.48 4.06 L4.84 0.78" stroke="#000" stroke-width="1.1" fill="none"/></svg>
<div style="left:454px;top:114.04px;line-height:8.32px;font-size:6.4px;font-family:'Liberation Sans',sans-serif;color:#202020;white-space:pre;transform:scaleX(0.836);transform-origin:0 50%;">Bars</div>
<div style="left:445.6px;top:125.8px;width:5.899999999999977px;height:5.200000000000003px;box-sizing:border-box;border:0.5px solid #8a8a8a;background:#fff"></div>
<svg style="position:absolute;left:445.6px;top:125.8px" width="5.90" height="5.20"><path d="M1.18 2.60 L2.48 4.06 L4.84 0.78" stroke="#000" stroke-width="1.1" fill="none"/></svg>
<div style="left:454px;top:125.04px;line-height:8.32px;font-size:6.4px;font-family:'Liberation Sans',sans-serif;color:#202020;white-space:pre;transform:scaleX(0.836);transform-origin:0 50%;">Freq</div>
<div style="left:469.4px;top:112px;width:1.5px;height:21px;background:linear-gradient(90deg,#b0b0b0 50%,#fff 50%)"></div>
<div style="left:571px;top:112px;width:1.5px;height:21px;background:linear-gradient(90deg,#b0b0b0 50%,#fff 50%)"></div>
<div style="left:628px;top:112px;width:1.5px;height:21px;background:linear-gradient(90deg,#b0b0b0 50%,#fff 50%)"></div>
<div style="left:700.7px;top:112px;width:1.5px;height:21px;background:linear-gradient(90deg,#b0b0b0 50%,#fff 50%)"></div>
<div style="left:471.2px;top:112.2px;width:51.400000000000034px;height:9.0px;background:#fff;border:1px solid #a0a0a0"></div>
<div style="left:474.2px;top:112.67px;line-height:8.06px;font-size:6.2px;font-family:'Liberation Sans',sans-serif;color:#202020;white-space:pre;transform:scaleX(0.938);transform-origin:0 50%;">Bins/Pixel  4</div>
<svg style="left:515.6px;top:112.2px" width="7" height="9.0"><path d="M2 3.5 L3.5 1.5 L5 3.5Z M2 5.5 L3.5 7.5 L5 5.5Z" fill="#333"/><line x1="0.5" y1="0" x2="0.5" y2="9.0" stroke="#ddd" stroke-width="0.6"/></svg>
<div style="left:524.9px;top:112.2px;width:45.0px;height:9.0px;background:#fff;border:1px solid #a0a0a0"></div>
<div style="left:527.9px;top:112.67px;line-height:8.06px;font-size:6.2px;font-family:'Liberation Sans',sans-serif;color:#202020;white-space:pre;transform:scaleX(0.829);transform-origin:0 50%;">Start  100 Hz</div>
<svg style="left:562.9px;top:112.2px" width="7" height="9.0"><path d="M2 3.5 L3.5 1.5 L5 3.5Z M2 5.5 L3.5 7.5 L5 5.5Z" fill="#333"/><line x1="0.5" y1="0" x2="0.5" y2="9.0" stroke="#ddd" stroke-width="0.6"/></svg>
<div style="left:471.2px;top:125.57px;line-height:8.06px;font-size:6.2px;font-family:'Liberation Sans',sans-serif;color:#202020;white-space:pre;transform:scaleX(0.848);transform-origin:0 50%;">Timestamp</div>
<div style="left:497.5px;top:124.2px;width:25.100000000000023px;height:9.200000000000003px;background:#fff;border:1px solid #c0c0c0"></div>
<div style="left:499px;top:125.57px;line-height:8.06px;font-size:6.2px;font-family:'Liberation Sans',sans-serif;color:#202020;white-space:pre;">Off</div>
<svg style="left:514px;top:126px" width="6" height="6"><path d="M1 2 L5 2 L3 4Z" fill="#333"/></svg>
<div style="left:524.9px;top:123.6px;width:45.0px;height:8.900000000000006px;background:#fff;border:1px solid #a0a0a0"></div>
<div style="left:527.9px;top:123.76px;line-height:8.58px;font-size:6.6px;font-family:'Liberation Sans',sans-serif;color:#202020;white-space:pre;transform:scaleX(0.790);transform-origin:0 50%;">N Avg  2</div>
<svg style="left:562.9px;top:123.6px" width="7" height="8.900000000000006"><path d="M2 3.450000000000003 L3.5 1.4500000000000028 L5 3.450000000000003Z M2 5.450000000000003 L3.5 7.450000000000003 L5 5.450000000000003Z" fill="#333"/><line x1="0.5" y1="0" x2="0.5" y2="8.900000000000006" stroke="#ddd" stroke-width="0.6"/></svg>
<div style="left:574px;top:113.77px;line-height:8.06px;font-size:6.2px;font-family:'Liberation Sans',sans-serif;color:#202020;white-space:pre;transform:scaleX(0.933);transform-origin:0 50%;">Palette</div>
<div style="left:593.5px;top:112.7px;width:32.700000000000045px;height:8.5px;box-sizing:border-box;border:1px solid #adadad;background:#f5f5f5;display:flex;align-items:center;justify-content:center;font-size:6.2px;font-family:'Liberation Sans',sans-serif;color:#202020;white-space:pre;overflow:hidden;">Adjust...</div>
<div style="left:573.5px;top:123.7px;width:51.89999999999998px;height:8.999999999999986px;background:#f5f5f5;border:1px solid #c0c0c0"></div>
<div style="left:576px;top:124.97px;line-height:8.06px;font-size:6.2px;font-family:'Liberation Sans',sans-serif;color:#202020;white-space:pre;transform:scaleX(0.794);transform-origin:0 50%;">ZL1FZ</div>
<svg style="left:617px;top:125px" width="6" height="6"><path d="M1 2 L5 2 L3 4Z" fill="#333"/></svg>
<div style="left:630.5px;top:114.8px;width:5.5px;height:5.200000000000003px;box-sizing:border-box;border:0.5px solid #8a8a8a;background:#fff"></div>
<svg style="position:absolute;left:630.5px;top:114.8px" width="5.50" height="5.20"><path d="M1.10 2.60 L2.31 4.06 L4.51 0.78" stroke="#000" stroke-width="1.1" fill="none"/></svg>
<div style="left:638px;top:114.04px;line-height:8.32px;font-size:6.4px;font-family:'Liberation Sans',sans-serif;color:#202020;white-space:pre;transform:scaleX(0.875);transform-origin:0 50%;">Scale</div>
<div style="left:630.5px;top:125.8px;width:5.5px;height:5.200000000000003px;box-sizing:border-box;border:0.5px solid #8a8a8a;background:#fff"></div>
<svg style="position:absolute;left:630.5px;top:125.8px" width="5.50" height="5.20"><path d="M1.10 2.60 L2.31 4.06 L4.51 0.78" stroke="#000" stroke-width="1.1" fill="none"/></svg>
<div style="left:638px;top:125.04px;line-height:8.32px;font-size:6.4px;font-family:'Liberation Sans',sans-serif;color:#202020;white-space:pre;transform:scaleX(0.869);transform-origin:0 50%;">Flatten</div>
<div style="left:659.4px;top:112.2px;width:40.10000000000002px;height:9.0px;background:#f8f8f8;border:1px solid #c0c0c0"></div>
<div style="left:661px;top:113.47px;line-height:8.06px;font-size:6.2px;font-family:'Liberation Sans',sans-serif;color:#202020;white-space:pre;transform:scaleX(0.871);transform-origin:0 50%;">Current</div>
<svg style="left:691px;top:114px" width="6" height="6"><path d="M1 2 L5 2 L3 4Z" fill="#333"/></svg>
<div style="left:659.4px;top:123.6px;width:40.10000000000002px;height:8.900000000000006px;background:#fff;border:1px solid #a0a0a0"></div>
<div style="left:662.4px;top:123.76px;line-height:8.58px;font-size:6.6px;font-family:'Liberation Sans',sans-serif;color:#202020;white-space:pre;transform:scaleX(0.696);transform-origin:0 50%;">Spec  30 %</div>
<svg style="left:692.5px;top:123.6px" width="7" height="8.900000000000006"><path d="M2 3.450000000000003 L3.5 1.4500000000000028 L5 3.450000000000003Z M2 5.450000000000003 L3.5 7.450000000000003 L5 5.450000000000003Z" fill="#333"/><line x1="0.5" y1="0" x2="0.5" y2="8.900000000000006" stroke="#ddd" stroke-width="0.6"/></svg>
<svg style="left:703px;top:111.5px" width="73" height="12"><rect x="2.0" y="1" width="0.6" height="1.2" fill="#808080"/><rect x="10.6" y="1" width="0.6" height="1.2" fill="#808080"/><rect x="19.2" y="1" width="0.6" height="1.2" fill="#808080"/><rect x="27.9" y="1" width="0.6" height="1.2" fill="#808080"/><rect x="36.5" y="1" width="0.6" height="1.2" fill="#808080"/><rect x="45.1" y="1" width="0.6" height="1.2" fill="#808080"/><rect x="53.8" y="1" width="0.6" height="1.2" fill="#808080"/><rect x="62.4" y="1" width="0.6" height="1.2" fill="#808080"/><rect x="71.0" y="1" width="0.6" height="1.2" fill="#808080"/><rect x="1" y="5" width="71" height="2" fill="#e0e0e0" stroke="#a8a8a8" stroke-width="0.5"/></svg>
<div style="left:741.7px;top:114.0px;width:5.0px;height:7.0px;background:#fafafa;border:1px solid #909090;border-radius:1px"></div>
<div style="left:778px;top:113.70px;line-height:8.19px;font-size:6.3px;font-family:'Liberation Sans',sans-serif;color:#202020;white-space:pre;transform:scaleX(0.788);transform-origin:0 50%;">Gain  6</div>
<svg style="left:798px;top:111.5px" width="74" height="12"><rect x="2.0" y="1" width="0.6" height="1.2" fill="#808080"/><rect x="9.8" y="1" width="0.6" height="1.2" fill="#808080"/><rect x="17.6" y="1" width="0.6" height="1.2" fill="#808080"/><rect x="25.3" y="1" width="0.6" height="1.2" fill="#808080"/><rect x="33.1" y="1" width="0.6" height="1.2" fill="#808080"/><rect x="40.9" y="1" width="0.6" height="1.2" fill="#808080"/><rect x="48.7" y="1" width="0.6" height="1.2" fill="#808080"/><rect x="56.4" y="1" width="0.6" height="1.2" fill="#808080"/><rect x="64.2" y="1" width="0.6" height="1.2" fill="#808080"/><rect x="72.0" y="1" width="0.6" height="1.2" fill="#808080"/><rect x="1" y="5" width="72" height="2" fill="#e0e0e0" stroke="#a8a8a8" stroke-width="0.5"/></svg>
<div style="left:833.2px;top:114.0px;width:5.0px;height:7.0px;background:#fafafa;border:1px solid #909090;border-radius:1px"></div>
<div style="left:874px;top:113.70px;line-height:8.19px;font-size:6.3px;font-family:'Liberation Sans',sans-serif;color:#202020;white-space:pre;transform:scaleX(0.702);transform-origin:0 50%;">Zero  9</div>
<svg style="left:703px;top:123.5px" width="73" height="12"><rect x="2.0" y="1" width="0.6" height="1.2" fill="#808080"/><rect x="10.6" y="1" width="0.6" height="1.2" fill="#808080"/><rect x="19.2" y="1" width="0.6" height="1.2" fill="#808080"/><rect x="27.9" y="1" width="0.6" height="1.2" fill="#808080"/><rect x="36.5" y="1" width="0.6" height="1.2" fill="#808080"/><rect x="45.1" y="1" width="0.6" height="1.2" fill="#808080"/><rect x="53.8" y="1" width="0.6" height="1.2" fill="#808080"/><rect x="62.4" y="1" width="0.6" height="1.2" fill="#808080"/><rect x="71.0" y="1" width="0.6" height="1.2" fill="#808080"/><rect x="1" y="5" width="71" height="2" fill="#e0e0e0" stroke="#a8a8a8" stroke-width="0.5"/></svg>
<div style="left:749.9px;top:126.0px;width:5.0px;height:7.0px;background:#fafafa;border:1px solid #909090;border-radius:1px"></div>
<div style="left:778px;top:125.70px;line-height:8.19px;font-size:6.3px;font-family:'Liberation Sans',sans-serif;color:#202020;white-space:pre;transform:scaleX(0.756);transform-origin:0 50%;">Gain  18</div>
<svg style="left:798px;top:123.5px" width="74" height="12"><rect x="2.0" y="1" width="0.6" height="1.2" fill="#808080"/><rect x="9.8" y="1" width="0.6" height="1.2" fill="#808080"/><rect x="17.6" y="1" width="0.6" height="1.2" fill="#808080"/><rect x="25.3" y="1" width="0.6" height="1.2" fill="#808080"/><rect x="33.1" y="1" width="0.6" height="1.2" fill="#808080"/><rect x="40.9" y="1" width="0.6" height="1.2" fill="#808080"/><rect x="48.7" y="1" width="0.6" height="1.2" fill="#808080"/><rect x="56.4" y="1" width="0.6" height="1.2" fill="#808080"/><rect x="64.2" y="1" width="0.6" height="1.2" fill="#808080"/><rect x="72.0" y="1" width="0.6" height="1.2" fill="#808080"/><rect x="1" y="5" width="72" height="2" fill="#e0e0e0" stroke="#a8a8a8" stroke-width="0.5"/></svg>
<div style="left:826.1px;top:126.0px;width:5.0px;height:7.0px;background:#fafafa;border:1px solid #909090;border-radius:1px"></div>
<div style="left:874px;top:125.70px;line-height:8.19px;font-size:6.3px;font-family:'Liberation Sans',sans-serif;color:#202020;white-space:pre;transform:scaleX(0.822);transform-origin:0 50%;">Zero  -10</div>
<div style="left:443px;top:138px;width:455px;height:12px;background:#f3f3f3;border-radius:4px 4px 0 0"></div>
<svg style="left:445.5px;top:139.5px" width="8" height="8"><path d="M4 0 Q4.5 3.5 8 4 Q4.5 4.5 4 8 Q3.5 4.5 0 4 Q3.5 3.5 4 0Z" fill="#4a4af0"/></svg>
<div style="left:456px;top:140.58px;line-height:8.45px;font-size:6.5px;font-family:'Liberation Sans',sans-serif;color:#6a6a6a;white-space:pre;transform:scaleX(0.838);transform-origin:0 50%;">JTDX  by HF community</div>
<div style="left:578px;top:140.58px;line-height:8.45px;font-size:6.5px;font-family:'Liberation Sans',sans-serif;color:#6a6a6a;white-space:pre;transform:scaleX(0.834);transform-origin:0 50%;">v2.2.160-rc10 , derivative work based on WSJT-X by K1JT</div>
<svg style="left:838px;top:137px" width="60" height="13"><path d="M5.5 6.7 H11.5" stroke="#909090" stroke-width="0.8"/><rect x="26.5" y="4" width="5.5" height="5.5" fill="none" stroke="#909090" stroke-width="0.8"/><path d="M48.5 4 L53.5 9.5 M53.5 4 L48.5 9.5" stroke="#909090" stroke-width="0.8"/></svg>
<div style="left:443px;top:150px;width:455px;height:10px;background:#f7f7f7"></div>
<div style="left:447.2px;top:151.88px;line-height:8.45px;font-size:6.5px;font-family:'Liberation Sans',sans-serif;color:#a8a8a8;white-space:pre;transform:scaleX(0.773);transform-origin:0 50%;">File</div>
<div style="left:461.7px;top:151.88px;line-height:8.45px;font-size:6.5px;font-family:'Liberation Sans',sans-serif;color:#a8a8a8;white-space:pre;transform:scaleX(0.816);transform-origin:0 50%;">View</div>
<div style="left:479.6px;top:151.88px;line-height:8.45px;font-size:6.5px;font-family:'Liberation Sans',sans-serif;color:#a8a8a8;white-space:pre;transform:scaleX(0.947);transform-origin:0 50%;">Mode</div>
<div style="left:500.9px;top:151.88px;line-height:8.45px;font-size:6.5px;font-family:'Liberation Sans',sans-serif;color:#a8a8a8;white-space:pre;transform:scaleX(0.879);transform-origin:0 50%;">Decode</div>
<div style="left:526.4px;top:151.88px;line-height:8.45px;font-size:6.5px;font-family:'Liberation Sans',sans-serif;color:#a8a8a8;white-space:pre;transform:scaleX(0.763);transform-origin:0 50%;">Save</div>
<div style="left:544.3px;top:151.88px;line-height:8.45px;font-size:6.5px;font-family:'Liberation Sans',sans-serif;color:#a8a8a8;white-space:pre;transform:scaleX(0.842);transform-origin:0 50%;">AutoSeq</div>
<div style="left:571.7px;top:151.88px;line-height:8.45px;font-size:6.5px;font-family:'Liberation Sans',sans-serif;color:#a8a8a8;white-space:pre;transform:scaleX(0.884);transform-origin:0 50%;">DXpedition</div>
<div style="left:606.2px;top:151.88px;line-height:8.45px;font-size:6.5px;font-family:'Liberation Sans',sans-serif;color:#a8a8a8;white-space:pre;transform:scaleX(0.861);transform-origin:0 50%;">Misc</div>
<div style="left:624.7px;top:151.88px;line-height:8.45px;font-size:6.5px;font-family:'Liberation Sans',sans-serif;color:#a8a8a8;white-space:pre;transform:scaleX(0.847);transform-origin:0 50%;">Language</div>
<div style="left:655.3px;top:151.88px;line-height:8.45px;font-size:6.5px;font-family:'Liberation Sans',sans-serif;color:#a8a8a8;white-space:pre;transform:scaleX(0.920);transform-origin:0 50%;">Help</div>
<div style="left:443.5px;top:161px;width:180.5px;height:7px;background:#d8d8d8"></div>
<div style="left:445.6px;top:161.25px;line-height:8.11px;font-size:6.24px;font-family:'Liberation Mono',monospace;color:#505050;white-space:pre;transform:scaleX(0.975);transform-origin:0 50%;">UTC     dB   DT Freq    Avg=0.12 Lag=-1.01/0</div>
<div style="left:624.5px;top:160.6px;width:41.5px;height:7.599999999999994px;background:#fff6d8"></div>
<div style="left:626px;top:161.11px;line-height:8.19px;font-size:6.3px;font-family:'Liberation Sans',sans-serif;color:#202020;white-space:pre;transform:scaleX(1.071);transform-origin:0 50%;">Band Activity</div>
<div style="left:443.5px;top:169px;width:216.5px;height:297px;background:#fff;border:1px solid #c8c8c8"></div>
<div style="left:660px;top:169px;width:6.5px;height:297px;background:#f0f0f0;border-left:1px solid #e0e0e0"></div>
<svg style="left:660px;top:169px" width="7" height="297"><path d="M1.8 5 L3.3 3 L4.8 5Z" fill="#444"/><path d="M1.8 292 L3.3 294 L4.8 292Z" fill="#444"/></svg>
<div style="left:445.6px;top:171.2px;width:183.69999999999993px;height:6.100000000000023px;background:#d8d8d8"></div>
<div style="left:445.6px;top:171.50px;line-height:8px;font-size:6.24px;font-family:'Liberation Mono',monospace;white-space:pre;color:#7a7a7a;transform:scaleX(1);letter-spacing:0px">----- <span style="color:#602868;font-weight:bold">18.01.26</span> <span style="color:#383870;font-weight:bold">05:45:43</span> <span style="color:#404050;font-weight:bold">UTC</span> ------------ <span style="color:#303030;font-weight:bold">40m</span> ----</div>
<div style="left:445.6px;top:179.00px;line-height:8px;font-size:6.24px;font-family:'Liberation Mono',monospace;white-space:pre;color:#202020">054530  -3  0.1 1054 ~ JE3RNC/JPG</div>
<div style="left:445.6px;top:186.2px;width:183.69999999999993px;height:6.100000000000023px;background:#d8d8d8"></div>
<div style="left:445.6px;top:186.50px;line-height:8px;font-size:6.24px;font-family:'Liberation Mono',monospace;white-space:pre;color:#7a7a7a;transform:scaleX(1);letter-spacing:0px">----- <span style="color:#602868;font-weight:bold">18.01.26</span> <span style="color:#383870;font-weight:bold">05:46:28</span> <span style="color:#404050;font-weight:bold">UTC</span> ------------ <span style="color:#303030;font-weight:bold">40m</span> ----</div>
<div style="left:445.6px;top:194.00px;line-height:8px;font-size:6.24px;font-family:'Liberation Mono',monospace;white-space:pre;color:#202020">054615   1  0.3 1585 ~ JK3UDU/X1JPG</div>
<div style="left:445.6px;top:201.2px;width:183.69999999999993px;height:6.100000000000023px;background:#d8d8d8"></div>
<div style="left:445.6px;top:201.50px;line-height:8px;font-size:6.24px;font-family:'Liberation Mono',monospace;white-space:pre;color:#7a7a7a;transform:scaleX(1);letter-spacing:0px">----- <span style="color:#602868;font-weight:bold">18.01.26</span> <span style="color:#383870;font-weight:bold">05:47:13</span> <span style="color:#404050;font-weight:bold">UTC</span> ------------ <span style="color:#303030;font-weight:bold">40m</span> ----</div>
<div style="left:445.6px;top:209.00px;line-height:8px;font-size:6.24px;font-family:'Liberation Mono',monospace;white-space:pre;color:#202020">054700  -1  0.1 1402 ~ JJ3UBI/JPG</div>
<div style="left:445.6px;top:216.2px;width:183.69999999999993px;height:6.100000000000023px;background:#d8d8d8"></div>
<div style="left:445.6px;top:216.50px;line-height:8px;font-size:6.24px;font-family:'Liberation Mono',monospace;white-space:pre;color:#7a7a7a;transform:scaleX(1);letter-spacing:0px">----- <span style="color:#602868;font-weight:bold">18.01.26</span> <span style="color:#383870;font-weight:bold">05:47:58</span> <span style="color:#404050;font-weight:bold">UTC</span> ------------ <span style="color:#303030;font-weight:bold">40m</span> ----</div>
<div style="left:445.6px;top:224.00px;line-height:8px;font-size:6.24px;font-family:'Liberation Mono',monospace;white-space:pre;color:#202020">054745   0  0.3 1585 ~ JK3UDU/X1JPG</div>
<div style="left:445.6px;top:231.2px;width:183.69999999999993px;height:6.100000000000023px;background:#d8d8d8"></div>
<div style="left:445.6px;top:231.50px;line-height:8px;font-size:6.24px;font-family:'Liberation Mono',monospace;white-space:pre;color:#7a7a7a;transform:scaleX(1);letter-spacing:0px">----- <span style="color:#602868;font-weight:bold">18.01.26</span> <span style="color:#383870;font-weight:bold">05:48:58</span> <span style="color:#404050;font-weight:bold">UTC</span> ------------ <span style="color:#303030;font-weight:bold">40m</span> ----</div>
<div style="left:445.6px;top:239.00px;line-height:8px;font-size:6.24px;font-family:'Liberation Mono',monospace;white-space:pre;color:#202020">054845  -6  0.1 1053 ~ JE3RNC/JPG</div>
<div style="left:445.6px;top:246.2px;width:183.69999999999993px;height:6.100000000000023px;background:#d8d8d8"></div>
<div style="left:445.6px;top:246.50px;line-height:8px;font-size:6.24px;font-family:'Liberation Mono',monospace;white-space:pre;color:#7a7a7a;transform:scaleX(1);letter-spacing:0px">----- <span style="color:#602868;font-weight:bold">18.01.26</span> <span style="color:#383870;font-weight:bold">05:49:43</span> <span style="color:#404050;font-weight:bold">UTC</span> ------------ <span style="color:#303030;font-weight:bold">40m</span> ----</div>
<div style="left:445.6px;top:254.00px;line-height:8px;font-size:6.24px;font-family:'Liberation Mono',monospace;white-space:pre;color:#202020">054930  -4  0.1 1402 ~ JJ3UBI/JPG</div>
<div style="left:445.6px;top:261.2px;width:183.69999999999993px;height:6.100000000000023px;background:#d8d8d8"></div>
<div style="left:445.6px;top:261.50px;line-height:8px;font-size:6.24px;font-family:'Liberation Mono',monospace;white-space:pre;color:#7a7a7a;transform:scaleX(1);letter-spacing:0px">----- <span style="color:#602868;font-weight:bold">18.01.26</span> <span style="color:#383870;font-weight:bold">05:49:58</span> <span style="color:#404050;font-weight:bold">UTC</span> ------------ <span style="color:#303030;font-weight:bold">40m</span> ----</div>
<div style="left:445.6px;top:269.00px;line-height:8px;font-size:6.24px;font-family:'Liberation Mono',monospace;white-space:pre;color:#202020">054945  -1  0.1 1053 ~ JE3RNC/JPG</div>
<div style="left:445.6px;top:276.2px;width:183.69999999999993px;height:6.100000000000023px;background:#d8d8d8"></div>
<div style="left:445.6px;top:276.50px;line-height:8px;font-size:6.24px;font-family:'Liberation Mono',monospace;white-space:pre;color:#7a7a7a;transform:scaleX(1);letter-spacing:0px">----- <span style="color:#602868;font-weight:bold">18.01.26</span> <span style="color:#383870;font-weight:bold">05:50:58</span> <span style="color:#404050;font-weight:bold">UTC</span> ------------ <span style="color:#303030;font-weight:bold">40m</span> ----</div>
<div style="left:445.6px;top:284.00px;line-height:8px;font-size:6.24px;font-family:'Liberation Mono',monospace;white-space:pre;color:#202020">055045  -5  0.1 1402 ~ JJ3UBI/JPG</div>
<div style="left:445.6px;top:291.2px;width:183.69999999999993px;height:6.100000000000023px;background:#d8d8d8"></div>
<div style="left:445.6px;top:291.50px;line-height:8px;font-size:6.24px;font-family:'Liberation Mono',monospace;white-space:pre;color:#7a7a7a;transform:scaleX(1);letter-spacing:0px">----- <span style="color:#602868;font-weight:bold">18.01.26</span> <span style="color:#383870;font-weight:bold">05:51:13</span> <span style="color:#404050;font-weight:bold">UTC</span> ------------ <span style="color:#303030;font-weight:bold">40m</span> ----</div>
<div style="left:445.6px;top:299.00px;line-height:8px;font-size:6.24px;font-family:'Liberation Mono',monospace;white-space:pre;color:#202020">055100   3 -0.1 1187 ~ JP3NRE/JPG</div>
<div style="left:445.6px;top:306.50px;line-height:8px;font-size:6.24px;font-family:'Liberation Mono',monospace;white-space:pre;color:#202020">055100   2  0.3 1585 ~ JK3UDU/X1JPG</div>
<div style="left:445.6px;top:313.7px;width:183.69999999999993px;height:6.100000000000023px;background:#d8d8d8"></div>
<div style="left:445.6px;top:314.00px;line-height:8px;font-size:6.24px;font-family:'Liberation Mono',monospace;white-space:pre;color:#7a7a7a;transform:scaleX(1);letter-spacing:0px">----- <span style="color:#602868;font-weight:bold">18.01.26</span> <span style="color:#383870;font-weight:bold">05:52:43</span> <span style="color:#404050;font-weight:bold">UTC</span> ------------ <span style="color:#303030;font-weight:bold">40m</span> ----</div>
<div style="left:445.6px;top:321.50px;line-height:8px;font-size:6.24px;font-family:'Liberation Mono',monospace;white-space:pre;color:#202020">055230   2  0.1 1188 ~ JP3NRE/JPG</div>
<div style="left:445.6px;top:329.00px;line-height:8px;font-size:6.24px;font-family:'Liberation Mono',monospace;white-space:pre;color:#202020">055230   1  0.1 1053 ~ JE3RNC/JPG</div>
<div style="left:445.6px;top:336.2px;width:183.69999999999993px;height:6.100000000000023px;background:#d8d8d8"></div>
<div style="left:445.6px;top:336.50px;line-height:8px;font-size:6.24px;font-family:'Liberation Mono',monospace;white-space:pre;color:#7a7a7a;transform:scaleX(1);letter-spacing:0px">----- <span style="color:#602868;font-weight:bold">18.01.26</span> <span style="color:#383870;font-weight:bold">05:53:43</span> <span style="color:#404050;font-weight:bold">UTC</span> ------------ <span style="color:#303030;font-weight:bold">40m</span> ----</div>
<div style="left:445.6px;top:344.00px;line-height:8px;font-size:6.24px;font-family:'Liberation Mono',monospace;white-space:pre;color:#202020">055330   1  0.3 1585 ~ JK3UDU/X1JPG</div>
<div style="left:445.6px;top:351.2px;width:183.69999999999993px;height:6.100000000000023px;background:#d8d8d8"></div>
<div style="left:445.6px;top:351.50px;line-height:8px;font-size:6.24px;font-family:'Liberation Mono',monospace;white-space:pre;color:#7a7a7a;transform:scaleX(1);letter-spacing:0px">----- <span style="color:#602868;font-weight:bold">18.01.26</span> <span style="color:#383870;font-weight:bold">05:54:28</span> <span style="color:#404050;font-weight:bold">UTC</span> ------------ <span style="color:#303030;font-weight:bold">40m</span> ----</div>
<div style="left:445.6px;top:359.00px;line-height:8px;font-size:6.24px;font-family:'Liberation Mono',monospace;white-space:pre;color:#202020">055415  -1  0.1 1054 ~ JE3RNC/JPG</div>
<div style="left:445.6px;top:366.50px;line-height:8px;font-size:6.24px;font-family:'Liberation Mono',monospace;white-space:pre;color:#202020">055415  -3  0.1 1402 ~ JJ3UBI/JPG</div>
<div style="left:445.6px;top:373.7px;width:183.69999999999993px;height:6.100000000000023px;background:#d8d8d8"></div>
<div style="left:445.6px;top:374.00px;line-height:8px;font-size:6.24px;font-family:'Liberation Mono',monospace;white-space:pre;color:#7a7a7a;transform:scaleX(1);letter-spacing:0px">----- <span style="color:#602868;font-weight:bold">18.01.26</span> <span style="color:#383870;font-weight:bold">05:54:43</span> <span style="color:#404050;font-weight:bold">UTC</span> ------------ <span style="color:#303030;font-weight:bold">40m</span> ----</div>
<div style="left:445.6px;top:381.50px;line-height:8px;font-size:6.24px;font-family:'Liberation Mono',monospace;white-space:pre;color:#202020">055430   5  0.2 1507 ~ JF1DFU/JPG</div>
<div style="left:443.8px;top:468.3px;width:70.40000000000003px;height:9.5px;background:#00f000;border:1px solid #b0b0b0"></div>
<div style="left:446px;top:469.77px;line-height:8.06px;font-size:6.2px;font-family:'Liberation Sans',sans-serif;color:#104010;white-space:pre;transform:scaleX(0.808);transform-origin:0 50%;">Receiving</div>
<div style="left:517.2px;top:468.3px;width:29.699999999999932px;height:9.5px;background:#6a9ef8;border:1px solid #b0b0b0"></div>
<div style="left:519px;top:469.77px;line-height:8.06px;font-size:6.2px;font-family:'Liberation Sans',sans-serif;color:#e0e8ff;white-space:pre;transform:scaleX(0.726);transform-origin:0 50%;">FT8</div>
<div style="left:550px;top:468.3px;width:64.39999999999998px;height:9.5px;background:#f0f0f0;border:1px solid #c0c0c0"></div>
<div style="left:552px;top:469.77px;line-height:8.06px;font-size:6.2px;font-family:'Liberation Sans',sans-serif;color:#303030;white-space:pre;transform:scaleX(0.772);transform-origin:0 50%;">LastTx: JH3ECA/JPG</div>
<div style="left:618.3px;top:468.3px;width:23.700000000000045px;height:9.5px;background:#fff;border:1px solid #c0c0c0"></div>
<div style="left:620px;top:469.77px;line-height:8.06px;font-size:6.2px;font-family:'Liberation Sans',sans-serif;color:#303030;white-space:pre;transform:scaleX(0.871);transform-origin:0 50%;">WD 6m</div>
<div style="left:645.9px;top:468.8px;width:114.10000000000002px;height:9.099999999999966px;background:#fff;border:1px solid #909090;border-radius:1px"></div>
<div style="left:646.5px;top:469.5px;width:60.200000000000045px;height:7.699999999999989px;background:#10e010"></div>
<div style="left:701px;top:470.20px;line-height:7.8px;font-size:6px;font-family:'Liberation Sans',sans-serif;color:#202020;white-space:pre;transform:scaleX(0.771);transform-origin:0 50%;">8/15</div>
<div style="left:764.5px;top:468.8px;width:34.200000000000045px;height:9.099999999999966px;background:#fff;border:1px solid #c8c8c8"></div>
<div style="left:766px;top:470.07px;line-height:8.06px;font-size:6.2px;font-family:'Liberation Sans',sans-serif;color:#303030;white-space:pre;transform:scaleX(0.798);transform-origin:0 50%;">Logd</div>
<div style="left:803.5px;top:468.8px;width:33.799999999999955px;height:9.099999999999966px;background:#f2f2f2;border:1px solid #c8c8c8"></div>
<div style="left:805px;top:470.27px;line-height:8.06px;font-size:6.2px;font-family:'Liberation Sans',sans-serif;color:#303030;white-space:pre;transform:scaleX(0.838);transform-origin:0 50%;">18.01.2026</div>
<div style="left:841.3px;top:468.8px;width:46.700000000000045px;height:9.099999999999966px;background:#a0a0f8;border:1px solid #c8c8c8"></div>
<div style="left:843px;top:470.07px;line-height:8.06px;font-size:6.2px;font-family:'Liberation Sans',sans-serif;color:#303050;white-space:pre;transform:scaleX(0.779);transform-origin:0 50%;">FT8   21/0</div>
<div style="left:668px;top:164.3px;width:10.7px;height:10.7px;border-radius:50%;background:#10ec10;border:0.5px solid #0a9a0a"></div>
<div style="left:683.5px;top:160.9px;width:61.299999999999955px;height:16.799999999999983px;background:#dcdcdc"></div>
<div style="left:690px;top:162.38px;line-height:16.25px;font-size:12.5px;font-family:'Liberation Sans',sans-serif;color:#2828e8;white-space:pre;transform:scaleX(0.917);transform-origin:0 50%;">7.110 000</div>
<div style="left:751.2px;top:160.9px;width:80.79999999999995px;height:16.799999999999983px;background:#a0f8f8"></div>
<div style="left:770px;top:162.70px;line-height:15.6px;font-size:12px;font-family:'Liberation Sans',sans-serif;color:#2828d8;white-space:pre;transform:scaleX(0.899);transform-origin:0 50%;">05:55:08</div>
<div style="left:833.3px;top:160.9px;width:41.40000000000009px;height:16.19999999999999px;background:#a8e0e0;border:1px solid #909090;border-radius:1px"></div>
<div style="left:833.3px;top:160.9px;width:41.40000000000009px;height:16.19999999999999px;line-height:16.19999999999999px;text-align:center;font-size:5.6px;font-family:'Liberation Sans',sans-serif;color:#404040;white-space:pre;overflow:hidden;">TX 00/30</div>
<div style="left:882.5px;top:159.40px;line-height:7.8px;font-size:6px;font-family:'Liberation Sans',sans-serif;color:#303030;white-space:pre;transform:scaleX(0.968);transform-origin:0 50%;">Pwr</div>
<div style="left:884px;top:165.80px;line-height:7.8px;font-size:6px;font-family:'Liberation Sans',sans-serif;color:#303030;white-space:pre;transform:scaleX(0.844);transform-origin:0 50%;">0 W</div>
<div style="left:884.5px;top:173.7px;width:2.0px;height:44.0px;background:#e0e0e0;border:0.5px solid #a0a0a0"></div>
<div style="left:881.5px;top:179.4px;width:8.0px;height:8.0px;background:#f8f8f8;border:1px solid #909090;border-radius:1px"></div>
<div style="left:893px;top:176px;width:1.5px;height:0.6999999999999886px;background:#909090"></div>
<div style="left:893px;top:181px;width:1.5px;height:0.6999999999999886px;background:#909090"></div>
<div style="left:893px;top:186px;width:1.5px;height:0.6999999999999886px;background:#909090"></div>
<div style="left:893px;top:191px;width:1.5px;height:0.6999999999999886px;background:#909090"></div>
<div style="left:893px;top:196px;width:1.5px;height:0.6999999999999886px;background:#909090"></div>
<div style="left:893px;top:201px;width:1.5px;height:0.6999999999999886px;background:#909090"></div>
<div style="left:893px;top:206px;width:1.5px;height:0.6999999999999886px;background:#909090"></div>
<div style="left:893px;top:211px;width:1.5px;height:0.6999999999999886px;background:#909090"></div>
<div style="left:893px;top:216px;width:1.5px;height:0.6999999999999886px;background:#909090"></div>
<div style="left:876px;top:219px;width:22px;height:7px;background:#fff"></div>
<div style="left:668px;top:179px;width:33.299999999999955px;height:8.800000000000011px;background:#fff;border:1px solid #b0b0b0"></div>
<div style="left:670px;top:180.17px;line-height:8.06px;font-size:6.2px;font-family:'Liberation Sans',sans-serif;color:#202020;white-space:pre;transform:scaleX(0.746);transform-origin:0 50%;">40m</div>
<div style="left:693.5px;top:179.5px;width:7.5px;height:8.0px;background:#f0f0f0;border-left:1px solid #c0c0c0"></div>
<svg style="left:694px;top:180px" width="7" height="7"><path d="M1.5 3 L5.5 3 L3.5 5Z" fill="#333"/></svg>
<div style="left:706px;top:180.17px;line-height:8.06px;font-size:6.2px;font-family:'Liberation Sans',sans-serif;color:#303030;white-space:pre;transform:scaleX(0.967);transform-origin:0 50%;">Spt</div>
<div style="left:717.3px;top:180px;width:6.7000000000000455px;height:7px;box-sizing:border-box;border:0.5px solid #8a8a8a;background:#fff"></div>
<div style="left:728px;top:180.17px;line-height:8.06px;font-size:6.2px;font-family:'Liberation Sans',sans-serif;color:#303030;white-space:pre;transform:scaleX(0.903);transform-origin:0 50%;">Menu</div>
<div style="left:744px;top:180px;width:6px;height:7px;box-sizing:border-box;border:0.5px solid #8a8a8a;background:#fff"></div>
<svg style="position:absolute;left:744px;top:180px" width="6.00" height="7.00"><path d="M1.20 3.50 L2.52 5.46 L4.92 1.05" stroke="#000" stroke-width="1.1" fill="none"/></svg>
<div style="left:752px;top:179px;width:42.700000000000045px;height:8.800000000000011px;background:#fff;border:1px solid #b0b0b0"></div>
<div style="left:755px;top:180.17px;line-height:8.06px;font-size:6.2px;font-family:'Liberation Sans',sans-serif;color:#202020;white-space:pre;transform:scaleX(0.732);transform-origin:0 50%;">Tx:  1653  Hz</div>
<svg style="left:787.7px;top:179px" width="7" height="8.800000000000011"><path d="M2 3.4000000000000057 L3.5 1.4000000000000057 L5 3.4000000000000057Z M2 5.400000000000006 L3.5 7.400000000000006 L5 5.400000000000006Z" fill="#333"/></svg>
<div style="left:797.9px;top:179px;width:36.80000000000007px;height:8.800000000000011px;background:#fff;border:1px solid #b0b0b0"></div>
<div style="left:800.9px;top:180.17px;line-height:8.06px;font-size:6.2px;font-family:'Liberation Sans',sans-serif;color:#202020;white-space:pre;transform:scaleX(0.888);transform-origin:0 50%;">Report -15</div>
<svg style="left:827.7px;top:179px" width="7" height="8.800000000000011"><path d="M2 3.4000000000000057 L3.5 1.4000000000000057 L5 3.4000000000000057Z M2 5.400000000000006 L3.5 7.400000000000006 L5 5.400000000000006Z" fill="#333"/></svg>
<div style="left:837.3px;top:179px;width:37.40000000000009px;height:8.800000000000011px;background:#d8d8d8;border:1px solid #c0c0c0"></div>
<div style="left:839px;top:180.17px;line-height:8.06px;font-size:6.2px;font-family:'Liberation Sans',sans-serif;color:#303030;white-space:pre;transform:scaleX(0.765);transform-origin:0 50%;">S2+5dB</div>
<div style="left:668px;top:188.9px;width:40.299999999999955px;height:10.099999999999994px;box-sizing:border-box;border:1px solid #adadad;background:#c8c8f8;display:flex;align-items:center;justify-content:center;font-size:5.6px;font-family:'Liberation Sans',sans-serif;color:#404040;white-space:pre;overflow:hidden;">DX Call</div>
<div style="left:710px;top:188.9px;width:38.799999999999955px;height:10.099999999999994px;box-sizing:border-box;border:1px solid #adadad;background:#a8b8c8;display:flex;align-items:center;justify-content:center;font-size:5.6px;font-family:'Liberation Sans',sans-serif;color:#404040;white-space:pre;overflow:hidden;">DX Grid</div>
<div style="left:752.8px;top:189.7px;width:18.700000000000045px;height:9.300000000000011px;box-sizing:border-box;border:1px solid #adadad;background:#f6f6f6;display:flex;align-items:center;justify-content:center;font-size:7px;font-family:'Liberation Sans',sans-serif;color:#000;white-space:pre;overflow:hidden;">▲</div>
<div style="left:774.7px;top:189.7px;width:18.59999999999991px;height:9.300000000000011px;box-sizing:border-box;border:1px solid #adadad;background:#f6f6f6;display:flex;align-items:center;justify-content:center;font-size:7px;font-family:'Liberation Sans',sans-serif;color:#000;white-space:pre;overflow:hidden;">▼</div>
<div style="left:797.9px;top:189.5px;width:36.80000000000007px;height:9.5px;background:#fff;border:1px solid #b0b0b0"></div>
<div style="left:800.9px;top:191.02px;line-height:8.06px;font-size:6.2px;font-family:'Liberation Sans',sans-serif;color:#202020;white-space:pre;transform:scaleX(0.782);transform-origin:0 50%;">CL   100 %</div>
<svg style="left:827.7px;top:189.5px" width="7" height="9.5"><path d="M2 3.75 L3.5 1.75 L5 3.75Z M2 5.75 L3.5 7.75 L5 5.75Z" fill="#333"/></svg>
<div style="left:837.3px;top:189.7px;width:37.40000000000009px;height:9.300000000000011px;box-sizing:border-box;border:1px solid #adadad;background:#f6f6f6;display:flex;align-items:center;justify-content:center;font-size:5.6px;font-family:'Liberation Sans',sans-serif;color:#303030;white-space:pre;overflow:hidden;">Hound</div>
<div style="left:668px;top:200.3px;width:40.299999999999955px;height:9.399999999999977px;background:#fff;border:1px solid #c0c0c0"></div>
<div style="left:710px;top:200.3px;width:38.799999999999955px;height:9.399999999999977px;background:#fff;border:1px solid #c0c0c0"></div>
<div style="left:752px;top:201.7px;width:42.700000000000045px;height:9.300000000000011px;background:#fff;border:1px solid #b0b0b0"></div>
<div style="left:755px;top:203.12px;line-height:8.06px;font-size:6.2px;font-family:'Liberation Sans',sans-serif;color:#202020;white-space:pre;transform:scaleX(0.719);transform-origin:0 50%;">Rx:  1653  Hz</div>
<svg style="left:787.7px;top:201.7px" width="7" height="9.300000000000011"><path d="M2 3.6500000000000057 L3.5 1.6500000000000057 L5 3.6500000000000057Z M2 5.650000000000006 L3.5 7.650000000000006 L5 5.650000000000006Z" fill="#333"/></svg>
<div style="left:797.9px;top:201.7px;width:36.80000000000007px;height:9.300000000000011px;background:#fff;border:1px solid #b0b0b0"></div>
<div style="left:800.9px;top:203.12px;line-height:8.06px;font-size:6.2px;font-family:'Liberation Sans',sans-serif;color:#202020;white-space:pre;transform:scaleX(0.795);transform-origin:0 50%;">DT  0.0 s</div>
<svg style="left:827.7px;top:201.7px" width="7" height="9.300000000000011"><path d="M2 3.6500000000000057 L3.5 1.6500000000000057 L5 3.6500000000000057Z M2 5.650000000000006 L3.5 7.650000000000006 L5 5.650000000000006Z" fill="#333"/></svg>
<div style="left:837.3px;top:201.1px;width:37.40000000000009px;height:10.700000000000017px;box-sizing:border-box;border:1px solid #adadad;background:#40e040;display:flex;align-items:center;justify-content:center;font-size:5.6px;font-family:'Liberation Sans',sans-serif;color:#303030;white-space:pre;overflow:hidden;">AutoTX</div>
<div style="left:669.3px;top:216.3px;width:38.700000000000045px;height:9.399999999999977px;box-sizing:border-box;border:1px solid #adadad;background:#f6f6f6;display:flex;align-items:center;justify-content:center;font-size:5.6px;font-family:'Liberation Sans',sans-serif;color:#303030;white-space:pre;overflow:hidden;">Lookup</div>
<div style="left:710px;top:216.3px;width:38.799999999999955px;height:9.399999999999977px;box-sizing:border-box;border:1px solid #adadad;background:#f6f6f6;display:flex;align-items:center;justify-content:center;font-size:5.6px;font-family:'Liberation Sans',sans-serif;color:#303030;white-space:pre;overflow:hidden;">Add</div>
<div style="left:752px;top:212.3px;width:43.5px;height:9.399999999999977px;box-sizing:border-box;border:1px solid #adadad;background:#00f000;display:flex;align-items:center;justify-content:center;font-size:5.6px;font-family:'Liberation Sans',sans-serif;color:#303030;white-space:pre;overflow:hidden;">Tx/Rx Split</div>
<div style="left:797.9px;top:213.5px;width:5.600000000000023px;height:6.0px;box-sizing:border-box;border:0.5px solid #8a8a8a;background:#fff"></div>
<div style="left:806px;top:213.27px;line-height:8.06px;font-size:6.2px;font-family:'Liberation Sans',sans-serif;color:#303030;white-space:pre;transform:scaleX(0.796);transform-origin:0 50%;">Wanted</div>
<div style="left:837.3px;top:212.9px;width:37.40000000000009px;height:8.799999999999983px;box-sizing:border-box;border:1px solid #208020;border-radius:1px;background:#00f000;display:flex;align-items:center;justify-content:center;font-size:5.6px;font-family:'Liberation Sans',sans-serif;color:#303030;white-space:pre;overflow:hidden;">AutoSeq2</div>
<div style="left:668px;top:227.1px;width:114.70000000000005px;height:6.400000000000006px;background:#d8d8d8"></div>
<div style="left:669.5px;top:227.05px;line-height:8.11px;font-size:6.24px;font-family:'Liberation Mono',monospace;color:#505050;white-space:pre;transform:scaleX(0.965);transform-origin:0 50%;">UTC     dB   DT Freq    Message</div>
<div style="left:805.3px;top:227.01px;line-height:8.19px;font-size:6.3px;font-family:'Liberation Sans',sans-serif;color:#303030;white-space:pre;transform:scaleX(0.816);transform-origin:0 50%;">Rx Frequency</div>
<div style="left:668px;top:235px;width:185.29999999999995px;height:131.7px;background:#fff;border:1px solid #c8c8c8"></div>
<div style="left:853.3px;top:235px;width:6.2000000000000455px;height:131.7px;background:#f0f0f0"></div>
<svg style="left:853px;top:235px" width="7" height="132"><path d="M1.8 5 L3.3 3 L4.8 5Z" fill="#444"/><path d="M1.8 127 L3.3 129 L4.8 127Z" fill="#444"/></svg>
<div style="left:861.3px;top:239.7px;width:37.40000000000009px;height:20.0px;box-sizing:border-box;border:1px solid #b8b8b8;border-radius:1px;background:#f6f6f6;display:flex;align-items:center;justify-content:center;font-size:5.6px;font-family:'Liberation Sans',sans-serif;color:#303030;white-space:pre;overflow:hidden;">Tune</div>
<div style="left:861.3px;top:261px;width:37.40000000000009px;height:20.80000000000001px;box-sizing:border-box;border:1px solid #b8b8b8;border-radius:1px;background:#40e040;display:flex;align-items:center;justify-content:center;font-size:5.6px;font-family:'Liberation Sans',sans-serif;color:#303030;white-space:pre;overflow:hidden;">Monitor</div>
<div style="left:861.3px;top:283px;width:37.40000000000009px;height:19.899999999999977px;box-sizing:border-box;border:1px solid #b8b8b8;border-radius:1px;background:#f6f6f6;display:flex;align-items:center;justify-content:center;font-size:5.6px;font-family:'Liberation Sans',sans-serif;color:#303030;white-space:pre;overflow:hidden;">Bypass</div>
<div style="left:861.3px;top:304.5px;width:37.40000000000009px;height:20.5px;box-sizing:border-box;border:1px solid #b8b8b8;border-radius:1px;background:#f6f6f6;display:flex;align-items:center;justify-content:center;font-size:5.6px;font-family:'Liberation Sans',sans-serif;color:#303030;white-space:pre;overflow:hidden;">1 QSO</div>
<div style="left:861.3px;top:325.3px;width:37.40000000000009px;height:21.399999999999977px;box-sizing:border-box;border:1px solid #b8b8b8;border-radius:1px;background:#40e040;display:flex;align-items:center;justify-content:center;font-size:5.6px;font-family:'Liberation Sans',sans-serif;color:#303030;white-space:pre;overflow:hidden;">AnsB4</div>
<div style="left:861.3px;top:348px;width:37.40000000000009px;height:20px;box-sizing:border-box;border:1px solid #b8b8b8;border-radius:1px;background:#f6f6f6;display:flex;align-items:center;justify-content:center;font-size:5.6px;font-family:'Liberation Sans',sans-serif;color:#303030;white-space:pre;overflow:hidden;">Stop</div>
<div style="left:668px;top:368px;width:196px;height:98px;border:1px solid #c8c8c8"></div>
<div style="left:668.8px;top:370.1px;width:29.300000000000068px;height:17.099999999999966px;box-sizing:border-box;border:1px solid #c0c0c0;border-radius:1px;background:#f6f6f6;display:flex;align-items:center;justify-content:center;font-size:5.6px;font-family:'Liberation Sans',sans-serif;color:#303030;white-space:pre;overflow:hidden;">Enable Tx</div>
<div style="left:699.5px;top:370.1px;width:29.799999999999955px;height:17.099999999999966px;box-sizing:border-box;border:1px solid #c0c0c0;border-radius:1px;background:#f6f6f6;display:flex;align-items:center;justify-content:center;font-size:5.6px;font-family:'Liberation Sans',sans-serif;color:#303030;white-space:pre;overflow:hidden;">Halt Tx</div>
<div style="left:668.8px;top:388.8px;width:29.300000000000068px;height:17.899999999999977px;box-sizing:border-box;border:1px solid #c0c0c0;border-radius:1px;background:#f6f6f6;display:flex;align-items:center;justify-content:center;font-size:5.6px;font-family:'Liberation Sans',sans-serif;color:#303030;white-space:pre;overflow:hidden;">Log QSO</div>
<div style="left:699.5px;top:388.8px;width:29.799999999999955px;height:17.899999999999977px;box-sizing:border-box;border:1px solid #c0c0c0;border-radius:1px;background:#f6f6f6;display:flex;align-items:center;justify-content:center;font-size:5.6px;font-family:'Liberation Sans',sans-serif;color:#303030;white-space:pre;overflow:hidden;">Erase</div>
<div style="left:668.8px;top:408.5px;width:29.300000000000068px;height:17.5px;box-sizing:border-box;border:1px solid #c0c0c0;border-radius:1px;background:#f6f6f6;display:flex;align-items:center;justify-content:center;font-size:5.6px;font-family:'Liberation Sans',sans-serif;color:#303030;white-space:pre;overflow:hidden;">Sync</div>
<div style="left:699.5px;top:408.5px;width:29.799999999999955px;height:17.5px;box-sizing:border-box;border:1px solid #c0c0c0;border-radius:1px;background:#f6f6f6;display:flex;align-items:center;justify-content:center;font-size:5.6px;font-family:'Liberation Sans',sans-serif;color:#303030;white-space:pre;overflow:hidden;">SWL mode</div>
<div style="left:668.8px;top:426.7px;width:29.300000000000068px;height:19.19999999999999px;box-sizing:border-box;border:1px solid #c0c0c0;border-radius:1px;background:#40e040;display:flex;align-items:center;justify-content:center;font-size:5.6px;font-family:'Liberation Sans',sans-serif;color:#303030;white-space:pre;overflow:hidden;">AQCc</div>
<div style="left:699.5px;top:426.7px;width:29.799999999999955px;height:19.19999999999999px;box-sizing:border-box;border:1px solid #c0c0c0;border-radius:1px;background:#f6f6f6;display:flex;align-items:center;justify-content:center;font-size:5.6px;font-family:'Liberation Sans',sans-serif;color:#303030;white-space:pre;overflow:hidden;">Filter</div>
<div style="left:668.8px;top:447.5px;width:29.300000000000068px;height:17.80000000000001px;box-sizing:border-box;border:1px solid #c0c0c0;border-radius:1px;background:#f6f6f6;display:flex;align-items:center;justify-content:center;font-size:5.6px;font-family:'Liberation Sans',sans-serif;color:#303030;white-space:pre;overflow:hidden;">Decode</div>
<div style="left:699.5px;top:447.5px;width:29.799999999999955px;height:17.80000000000001px;box-sizing:border-box;border:1px solid #c0c0c0;border-radius:1px;background:#f6f6f6;display:flex;align-items:center;justify-content:center;font-size:5.6px;font-family:'Liberation Sans',sans-serif;color:#303030;white-space:pre;overflow:hidden;">Clear DX</div>
<svg style="left:729px;top:368px" width="14" height="98"><path d="M12.3,1.3 C3,2.5 1,5 1.4,8 C1.8,11 6,13 12.3,14.4 C3,16 1,19 1.4,22 C1.8,25 6,27.5 12.3,29 C3,30.5 1,33 1.4,36 C1.8,39 6,40.5 12.3,42.1" stroke="#404040" stroke-width="0.7" fill="none"/></svg>
<div style="left:733px;top:372.3px;width:6px;height:6px;line-height:6px;text-align:center;font-size:5px;font-family:'Liberation Sans',sans-serif;color:#303030;transform:rotate(90deg)">1</div>
<div style="left:733px;top:387px;width:6px;height:6px;line-height:6px;text-align:center;font-size:5px;font-family:'Liberation Sans',sans-serif;color:#303030;transform:rotate(90deg)">2</div>
<div style="left:733px;top:400.6px;width:6px;height:6px;line-height:6px;text-align:center;font-size:5px;font-family:'Liberation Sans',sans-serif;color:#303030;transform:rotate(90deg)">3</div>
<div style="left:740px;top:368px;width:124px;height:97.30000000000001px;border:1px solid #c8c8c8"></div>
<div style="left:742.1px;top:372px;width:31.199999999999932px;height:10.699999999999989px;box-sizing:border-box;border:1px solid #adadad;background:#f6f6f6;display:flex;align-items:center;justify-content:center;font-size:5.6px;font-family:'Liberation Sans',sans-serif;color:#303030;white-space:pre;overflow:hidden;">GenMsgs</div>
<div style="left:775px;top:374.07px;line-height:8.06px;font-size:6.2px;font-family:'Liberation Sans',sans-serif;color:#303030;white-space:pre;transform:scaleX(0.968);transform-origin:0 50%;">CQ</div>
<div style="left:784.8px;top:371.2px;width:21.300000000000068px;height:12.300000000000011px;background:#fff;border:1px solid #c0c0c0"></div>
<div style="left:808px;top:374.07px;line-height:8.06px;font-size:6.2px;font-family:'Liberation Sans',sans-serif;color:#303030;white-space:pre;transform:scaleX(0.968);transform-origin:0 50%;">RRR</div>
<div style="left:823.2px;top:374px;width:6.699999999999932px;height:7px;box-sizing:border-box;border:0.5px solid #8a8a8a;background:#fff"></div>
<div style="left:833px;top:374.07px;line-height:8.06px;font-size:6.2px;font-family:'Liberation Sans',sans-serif;color:#303030;white-space:pre;transform:scaleX(0.982);transform-origin:0 50%;">SkipTx1</div>
<div style="left:855.5px;top:374px;width:6.399999999999977px;height:7px;box-sizing:border-box;border:0.5px solid #8a8a8a;background:#fff"></div>
<div style="left:742.7px;top:384px;width:82.59999999999991px;height:13.300000000000011px;background:#ffc8ff;border:1px solid #c0c0c0"></div>
<div style="left:827.1px;top:387.84999999999997px;width:5.6px;height:5.6px;border-radius:50%;border:0.6px solid #808080;background:#f8f8f8"></div>
<div style="left:834.7px;top:383.5px;width:26.59999999999991px;height:14.300000000000011px;box-sizing:border-box;border:1px solid #c0c0c0;border-radius:1px;background:#f6f6f6;display:flex;align-items:center;justify-content:center;font-size:5.8px;font-family:'Liberation Sans',sans-serif;color:#303030;white-space:pre;overflow:hidden;">Tx 1</div>
<div style="left:742.7px;top:398.7px;width:82.59999999999991px;height:12.0px;background:#ffc8ff;border:1px solid #c0c0c0"></div>
<div style="left:827.1px;top:401.9px;width:5.6px;height:5.6px;border-radius:50%;border:0.6px solid #808080;background:#f8f8f8"></div>
<div style="left:834.7px;top:398.2px;width:26.59999999999991px;height:13.0px;box-sizing:border-box;border:1px solid #c0c0c0;border-radius:1px;background:#f6f6f6;display:flex;align-items:center;justify-content:center;font-size:5.8px;font-family:'Liberation Sans',sans-serif;color:#303030;white-space:pre;overflow:hidden;">Tx 2</div>
<div style="left:742.7px;top:412px;width:82.59999999999991px;height:11.5px;background:#ffc8ff;border:1px solid #c0c0c0"></div>
<div style="left:827.1px;top:414.95px;width:5.6px;height:5.6px;border-radius:50%;border:0.6px solid #808080;background:#f8f8f8"></div>
<div style="left:834.7px;top:411.5px;width:26.59999999999991px;height:12.5px;box-sizing:border-box;border:1px solid #c0c0c0;border-radius:1px;background:#f6f6f6;display:flex;align-items:center;justify-content:center;font-size:5.8px;font-family:'Liberation Sans',sans-serif;color:#303030;white-space:pre;overflow:hidden;">Tx 3</div>
<div style="left:742.7px;top:425.3px;width:82.59999999999991px;height:11.5px;background:#ffc8ff;border:1px solid #c0c0c0"></div>
<div style="left:827.1px;top:428.25px;width:5.6px;height:5.6px;border-radius:50%;border:0.6px solid #808080;background:#f8f8f8"></div>
<div style="left:834.7px;top:424.8px;width:26.59999999999991px;height:12.5px;box-sizing:border-box;border:1px solid #c0c0c0;border-radius:1px;background:#f6f6f6;display:flex;align-items:center;justify-content:center;font-size:5.8px;font-family:'Liberation Sans',sans-serif;color:#303030;white-space:pre;overflow:hidden;">Tx 4</div>
<div style="left:742.7px;top:438.7px;width:82.59999999999991px;height:11.400000000000034px;background:#fff;border:1px solid #c0c0c0"></div>
<div style="left:816px;top:439.2px;width:9px;height:10.400000000000034px;border-left:1px solid #d0d0d0"></div>
<svg style="left:817px;top:438.7px" width="8" height="11.400000000000034"><path d="M2 4.700000000000017 L6 4.700000000000017 L4 6.700000000000017Z" fill="#333"/></svg>
<div style="left:827.1px;top:441.59999999999997px;width:5.6px;height:5.6px;border-radius:50%;border:0.6px solid #808080;background:#f8f8f8"></div>
<div style="left:834.7px;top:438.2px;width:26.59999999999991px;height:12.400000000000034px;box-sizing:border-box;border:1px solid #c0c0c0;border-radius:1px;background:#f6f6f6;display:flex;align-items:center;justify-content:center;font-size:5.8px;font-family:'Liberation Sans',sans-serif;color:#303030;white-space:pre;overflow:hidden;">Tx 5</div>
<div style="left:742.7px;top:452px;width:82.59999999999991px;height:11.5px;background:#ffc8ff;border:1px solid #c0c0c0"></div>
<div style="left:827.1px;top:454.95px;width:5.6px;height:5.6px;border-radius:50%;border:0.6px solid #808080;background:#f8f8f8"></div>
<div style="left:828.6999999999999px;top:456.55px;width:2.4px;height:2.4px;border-radius:50%;background:#303030"></div>
<div style="left:834.7px;top:451.5px;width:26.59999999999991px;height:12.5px;box-sizing:border-box;border:1px solid #c0c0c0;border-radius:1px;background:#f6f6f6;display:flex;align-items:center;justify-content:center;font-size:5.8px;font-family:'Liberation Sans',sans-serif;color:#303030;white-space:pre;overflow:hidden;">Tx 6</div>
<div style="left:744.5px;top:454.47px;line-height:8.06px;font-size:6.2px;font-family:'Liberation Sans',sans-serif;color:#303030;white-space:pre;transform:scaleX(0.719);transform-origin:0 50%;">JH3ECA/JPG</div>
<div style="left:872.8px;top:385.7px;width:4.600000000000023px;height:66.0px;background:#f8a800"></div>
<div style="left:877.4px;top:375.7px;width:0.6000000000000227px;height:76.0px;background:#303030"></div>
<div style="left:877.4px;top:375.7px;width:2.6000000000000227px;height:0.6000000000000227px;background:#303030"></div>
<div style="left:880px;top:372.93px;line-height:7.15px;font-size:5.5px;font-family:'Liberation Sans',sans-serif;color:#303030;white-space:pre;">90+</div>
<div style="left:877.4px;top:384.14px;width:2.6000000000000227px;height:0.6000000000000227px;background:#303030"></div>
<div style="left:880px;top:381.37px;line-height:7.15px;font-size:5.5px;font-family:'Liberation Sans',sans-serif;color:#303030;white-space:pre;">80</div>
<div style="left:877.4px;top:392.58px;width:2.6000000000000227px;height:0.6000000000000227px;background:#303030"></div>
<div style="left:880px;top:389.81px;line-height:7.15px;font-size:5.5px;font-family:'Liberation Sans',sans-serif;color:#303030;white-space:pre;">70</div>
<div style="left:877.4px;top:401.02px;width:2.6000000000000227px;height:0.6000000000000227px;background:#303030"></div>
<div style="left:880px;top:398.25px;line-height:7.15px;font-size:5.5px;font-family:'Liberation Sans',sans-serif;color:#303030;white-space:pre;">60</div>
<div style="left:877.4px;top:409.46px;width:2.6000000000000227px;height:0.6000000000000227px;background:#303030"></div>
<div style="left:880px;top:406.69px;line-height:7.15px;font-size:5.5px;font-family:'Liberation Sans',sans-serif;color:#303030;white-space:pre;">50</div>
<div style="left:877.4px;top:417.9px;width:2.6000000000000227px;height:0.6000000000000227px;background:#303030"></div>
<div style="left:880px;top:415.12px;line-height:7.15px;font-size:5.5px;font-family:'Liberation Sans',sans-serif;color:#303030;white-space:pre;">40</div>
<div style="left:877.4px;top:426.34px;width:2.6000000000000227px;height:0.6000000000000227px;background:#303030"></div>
<div style="left:880px;top:423.56px;line-height:7.15px;font-size:5.5px;font-family:'Liberation Sans',sans-serif;color:#303030;white-space:pre;">30</div>
<div style="left:877.4px;top:434.78px;width:2.6000000000000227px;height:0.6000000000000227px;background:#303030"></div>
<div style="left:880px;top:432.00px;line-height:7.15px;font-size:5.5px;font-family:'Liberation Sans',sans-serif;color:#303030;white-space:pre;">20</div>
<div style="left:877.4px;top:443.21999999999997px;width:2.6000000000000227px;height:0.6000000000000227px;background:#303030"></div>
<div style="left:880px;top:440.44px;line-height:7.15px;font-size:5.5px;font-family:'Liberation Sans',sans-serif;color:#303030;white-space:pre;">10</div>
<div style="left:877.4px;top:451.65999999999997px;width:2.6000000000000227px;height:0.6000000000000227px;background:#303030"></div>
<div style="left:880px;top:448.88px;line-height:7.15px;font-size:5.5px;font-family:'Liberation Sans',sans-serif;color:#303030;white-space:pre;">0</div>
<svg style="left:871px;top:382.5px" width="7" height="6"><path d="M0.5 0.5 L6 3 L0.5 5.5Z" fill="#111"/></svg>
<div style="left:869px;top:455.03px;line-height:7.15px;font-size:5.5px;font-family:'Liberation Sans',sans-serif;color:#303030;white-space:pre;transform:scaleX(0.934);transform-origin:0 50%;">74dB</div>
<svg width="0" height="0" style="left:0;top:0"><defs>
<symbol id="st" viewBox="0 0 100 75" preserveAspectRatio="none">
<rect width="100" height="75" fill="#9494aa"/>
<rect x="0" y="0" width="100" height="34" fill="#2e343e"/>
<rect x="0" y="6" width="12" height="28" fill="#4a5060"/>
<rect x="0" y="14" width="14" height="3" fill="#707888"/><rect x="0" y="22" width="14" height="2" fill="#606878"/>
<rect x="17" y="14" width="14" height="18" fill="#2e5a5a"/><rect x="20" y="9" width="7" height="7" fill="#a07868"/>
<rect x="31" y="8" width="3.5" height="26" fill="#c8b0b0"/>
<rect x="47" y="5" width="4" height="29" fill="#d0c0c0"/>
<rect x="54" y="16" width="24" height="18" fill="#283830"/>
<rect x="84" y="18" width="10" height="16" fill="#603838"/>
<rect x="25" y="27" width="42" height="3" fill="#9a5048"/>
<rect x="34" y="17" width="3" height="26" fill="#9a5048"/><rect x="57" y="17" width="3" height="26" fill="#9a5048"/>
<rect x="0" y="34" width="100" height="6" fill="#c8c0b4"/>
<rect x="0" y="40" width="100" height="3" fill="#c0a878"/>
<rect x="22" y="37" width="4.5" height="7" fill="#f0f0f0"/><rect x="42" y="39" width="10" height="5" fill="#505060"/><rect x="68" y="37" width="4.5" height="7" fill="#f0f0f0"/>
<rect x="0" y="43" width="100" height="6" fill="#d4d4e0"/>
<rect x="0" y="49" width="100" height="26" fill="#9090a8"/>
<rect x="0" y="50" width="88" height="1.5" fill="#805868"/>
<rect x="88" y="50" width="1.5" height="20" fill="#805868"/>
<rect x="6" y="51" width="2" height="24" fill="#b0b0c4"/><rect x="18" y="51" width="1.5" height="24" fill="#7a7a90"/><rect x="30" y="51" width="2" height="24" fill="#b0b0c4"/><rect x="46" y="51" width="1.5" height="24" fill="#7a7a90"/><rect x="62" y="51" width="2" height="24" fill="#b0b0c4"/>
<rect x="0" y="0" width="100" height="6" fill="#1e2030"/>
<rect x="3" y="1" width="47" height="4" fill="#3a40e0"/>
<rect x="49" y="1.5" width="48" height="13" fill="#f0ec00"/>
<rect x="52" y="4.5" width="13" height="7" fill="#207848"/><rect x="69" y="4.5" width="11" height="7" fill="#902090"/><rect x="83" y="4.5" width="12" height="7" fill="#20a058"/>
<rect x="70" y="58" width="24" height="11" fill="#b8b070" stroke="#3040e0" stroke-width="1.2"/>
<rect x="3" y="68" width="34" height="4.5" fill="#3a40f0"/><rect x="56" y="68" width="19" height="4.5" fill="#3a40f0"/><rect x="82" y="68" width="14" height="4.5" fill="#3a40f0"/>
</symbol>
<symbol id="ph" viewBox="0 0 100 34" preserveAspectRatio="none">
<rect width="100" height="34" fill="#000"/>
<rect width="58" height="34" fill="#b8a898"/>
<rect x="0" y="0" width="12" height="34" fill="#d8d0c0"/>
<rect x="12" y="2" width="20" height="10" fill="#e03838"/>
<rect x="32" y="2" width="14" height="10" fill="#f0f0f0"/>
<rect x="8" y="14" width="16" height="20" fill="#505868"/><rect x="24" y="12" width="14" height="22" fill="#606878"/>
<rect x="14" y="16" width="8" height="7" fill="#d8c0b0"/><rect x="28" y="14" width="7" height="7" fill="#d0b8a8"/>
<rect x="40" y="12" width="14" height="22" fill="#c8a8a0"/>
<rect x="5" y="28" width="40" height="6" fill="#283870"/>
<rect x="64" y="6" width="24" height="6" fill="#18a0a8"/>
<rect x="68" y="15" width="26" height="2" fill="#2050e0"/>
<rect x="62" y="19" width="30" height="3" fill="#8040c8"/>
<rect x="66" y="25" width="22" height="2" fill="#8040c8"/>
<rect x="90" y="28" width="3" height="3" fill="#10c0c0"/>
</symbol>
<symbol id="fl" viewBox="0 0 100 34" preserveAspectRatio="none">
<rect width="100" height="34" fill="#000"/>
<rect width="50" height="34" fill="#1a2a10"/>
<rect x="5" y="3" width="12" height="10" fill="#284018"/><rect x="30" y="20" width="15" height="12" fill="#2a4818"/>
<ellipse cx="24" cy="17" rx="13" ry="9" fill="#d8c820"/>
<ellipse cx="24" cy="17" rx="6" ry="4" fill="#f0e040"/>
<rect x="0" y="0" width="50" height="1" fill="#c02020"/><rect x="0" y="33" width="50" height="1" fill="#c02020"/>
<rect x="50" y="0" width="1.5" height="34" fill="#d02020"/>
<rect x="60" y="4" width="20" height="6" fill="#3040d0"/>
<rect x="54" y="12" width="40" height="2" fill="#b060a0"/>
<rect x="60" y="23" width="20" height="3" fill="#8040c0"/>
<rect x="94" y="4" width="3" height="3" fill="#20d020"/><rect x="92" y="28" width="3" height="3" fill="#20d020"/>
</symbol>
</defs></svg>
<div style="left:11.4px;top:166px;width:6.9px;height:7px;background:linear-gradient(90deg,#2020e0 0%,#2020e0 55%,#ff8a00 55%);border:0.5px solid #f0d000"></div>
<div style="left:11.4px;top:166px;width:3.5999999999999996px;height:3px;background:#f0e040"></div>
<div style="left:21.7px;top:166.18px;line-height:8.45px;font-size:6.5px;font-family:'Liberation Sans',sans-serif;color:#ffffff;white-space:pre;transform:scaleX(0.814);transform-origin:0 50%;">X412_1010p</div>
<div style="left:59.7px;top:166.18px;line-height:8.45px;font-size:6.5px;font-family:'Liberation Sans',sans-serif;color:#ffffff;white-space:pre;transform:scaleX(0.797);transform-origin:0 50%;">Ver2026.01.23</div>
<svg style="left:370px;top:163px" width="60" height="13"><path d="M3 6.5 H9" stroke="#fff" stroke-width="0.8"/><rect x="26" y="3.8" width="5.5" height="5.5" fill="none" stroke="#5a9ee0" stroke-width="0.8"/><path d="M47.5 3.8 L53 9.3 M53 3.8 L47.5 9.3" stroke="#fff" stroke-width="0.9"/></svg>
<div style="left:11.7px;top:180px;width:35.3px;height:10px;background:#fff"></div>
<div style="left:11.7px;top:180px;width:35.3px;height:10px;line-height:10px;text-align:center;font-size:6px;font-family:'Liberation Sans',sans-serif;color:#000;white-space:pre;overflow:hidden;"></div>
<div style="left:13.850000000000001px;top:181.88px;line-height:8.45px;font-size:6.5px;font-family:'Liberation Sans',sans-serif;color:#303030;white-space:pre;transform:scaleX(0.802);transform-origin:0 50%;">4:3 image TX</div>
<div style="left:49px;top:180px;width:36px;height:10px;background:#fff"></div>
<div style="left:49px;top:180px;width:36px;height:10px;line-height:10px;text-align:center;font-size:6px;font-family:'Liberation Sans',sans-serif;color:#000;white-space:pre;overflow:hidden;"></div>
<div style="left:51.5px;top:181.88px;line-height:8.45px;font-size:6.5px;font-family:'Liberation Sans',sans-serif;color:#303030;white-space:pre;transform:scaleX(0.833);transform-origin:0 50%;">Wide img TX</div>
<div style="left:85.7px;top:180px;width:38.0px;height:10px;background:#88e888"></div>
<div style="left:85.7px;top:180px;width:38.0px;height:10px;line-height:10px;text-align:center;font-size:6px;font-family:'Liberation Sans',sans-serif;color:#000;white-space:pre;overflow:hidden;"></div>
<div style="left:96.2px;top:181.88px;line-height:8.45px;font-size:6.5px;font-family:'Liberation Sans',sans-serif;color:#303030;white-space:pre;transform:scaleX(0.759);transform-origin:0 50%;">ON AIR</div>
<div style="left:124.5px;top:180px;width:35.5px;height:10px;background:#fff"></div>
<div style="left:124.5px;top:180px;width:35.5px;height:10px;line-height:10px;text-align:center;font-size:6px;font-family:'Liberation Sans',sans-serif;color:#000;white-space:pre;overflow:hidden;"></div>
<div style="left:128.25px;top:181.88px;line-height:8.45px;font-size:6.5px;font-family:'Liberation Sans',sans-serif;color:#303030;white-space:pre;transform:scaleX(0.791);transform-origin:0 50%;">RX / RX List</div>
<div style="left:160.5px;top:180px;width:36.80000000000001px;height:10px;background:#fff"></div>
<div style="left:160.5px;top:180px;width:36.80000000000001px;height:10px;line-height:10px;text-align:center;font-size:6px;font-family:'Liberation Sans',sans-serif;color:#000;white-space:pre;overflow:hidden;"></div>
<div style="left:162.4px;top:181.88px;line-height:8.45px;font-size:6.5px;font-family:'Liberation Sans',sans-serif;color:#303030;white-space:pre;transform:scaleX(0.808);transform-origin:0 50%;">QSL / Contest</div>
<div style="left:197.8px;top:180px;width:37.5px;height:10px;background:#fff"></div>
<div style="left:197.8px;top:180px;width:37.5px;height:10px;line-height:10px;text-align:center;font-size:6px;font-family:'Liberation Sans',sans-serif;color:#000;white-space:pre;overflow:hidden;"></div>
<div style="left:205.3px;top:181.88px;line-height:8.45px;font-size:6.5px;font-family:'Liberation Sans',sans-serif;color:#303030;white-space:pre;transform:scaleX(0.789);transform-origin:0 50%;">FTP_SET</div>
<div style="left:46.7px;top:181px;width:1.5999999999999943px;height:9px;background:#808080"></div>
<div style="left:123.2px;top:181px;width:1.5999999999999943px;height:9px;background:#808080"></div>
<div style="left:159.2px;top:181px;width:1.6000000000000227px;height:9px;background:#808080"></div>
<div style="left:196.5px;top:181px;width:1.6000000000000227px;height:9px;background:#808080"></div>
<div style="left:234.5px;top:181px;width:1.6000000000000227px;height:9px;background:#808080"></div>
<div style="left:12.3px;top:191.2px;width:44.5px;height:33.20000000000002px;background:#efefef;border:1px solid #9a9a9a"></div>
<svg style="left:13.100000000000001px;top:192.0px" width="42.90" height="31.60"><use href="#st" width="42.90" height="31.60"/></svg>
<div style="left:12.3px;top:225.8px;width:44.5px;height:8.699999999999989px;background:#efefef;border:1px solid #9a9a9a"></div>
<div style="left:12.3px;top:225.8px;width:44.5px;height:8.699999999999989px;line-height:8.699999999999989px;text-align:center;font-size:6.6px;font-family:'Liberation Sans',sans-serif;color:#404040;white-space:pre;overflow:hidden;">JA9YR</div>
<div style="left:57.9px;top:191.2px;width:44.50000000000001px;height:33.20000000000002px;background:#efefef;border:1px solid #9a9a9a"></div>
<svg style="left:58.699999999999996px;top:192.0px" width="42.90" height="31.60"><use href="#st" width="42.90" height="31.60"/></svg>
<div style="left:57.9px;top:225.8px;width:44.50000000000001px;height:8.699999999999989px;background:#efefef;border:1px solid #9a9a9a"></div>
<div style="left:57.9px;top:225.8px;width:44.50000000000001px;height:8.699999999999989px;line-height:8.699999999999989px;text-align:center;font-size:6.6px;font-family:'Liberation Sans',sans-serif;color:#404040;white-space:pre;overflow:hidden;">JE3RNC</div>
<div style="left:103.9px;top:191.2px;width:43.900000000000006px;height:33.20000000000002px;background:#efefef;border:1px solid #9a9a9a"></div>
<svg style="left:104.7px;top:200.164px" width="42.30" height="15.27"><use href="#ph" width="42.30" height="15.27"/></svg>
<div style="left:103.9px;top:225.8px;width:43.900000000000006px;height:8.699999999999989px;background:#efefef;border:1px solid #9a9a9a"></div>
<div style="left:103.9px;top:225.8px;width:43.900000000000006px;height:8.699999999999989px;line-height:8.699999999999989px;text-align:center;font-size:6.6px;font-family:'Liberation Sans',sans-serif;color:#404040;white-space:pre;overflow:hidden;">JE4DKN</div>
<div style="left:148.9px;top:191.2px;width:44.19999999999999px;height:33.20000000000002px;background:#efefef;border:1px solid #9a9a9a"></div>
<svg style="left:149.70000000000002px;top:200.164px" width="42.60" height="15.27"><use href="#fl" width="42.60" height="15.27"/></svg>
<div style="left:148.9px;top:225.8px;width:44.19999999999999px;height:8.699999999999989px;background:#efefef;border:1px solid #9a9a9a"></div>
<div style="left:148.9px;top:225.8px;width:44.19999999999999px;height:8.699999999999989px;line-height:8.699999999999989px;text-align:center;font-size:6.6px;font-family:'Liberation Sans',sans-serif;color:#404040;white-space:pre;overflow:hidden;">JR7AVU</div>
<div style="left:12.3px;top:238.2px;width:44.5px;height:33.30000000000001px;background:#efefef;border:1px solid #9a9a9a"></div>
<svg style="left:13.100000000000001px;top:247.191px" width="42.90" height="15.32"><use href="#ph" width="42.90" height="15.32"/></svg>
<div style="left:12.3px;top:272.6px;width:44.5px;height:8.699999999999989px;background:#efefef;border:1px solid #9a9a9a"></div>
<div style="left:12.3px;top:272.6px;width:44.5px;height:8.699999999999989px;line-height:8.699999999999989px;text-align:center;font-size:6.6px;font-family:'Liberation Sans',sans-serif;color:#404040;white-space:pre;overflow:hidden;">JA5JSP</div>
<div style="left:57.9px;top:238.2px;width:44.50000000000001px;height:33.30000000000001px;background:#efefef;border:1px solid #9a9a9a"></div>
<svg style="left:58.699999999999996px;top:239.0px" width="42.90" height="31.70"><use href="#st" width="42.90" height="31.70"/></svg>
<div style="left:57.9px;top:272.6px;width:44.50000000000001px;height:8.699999999999989px;background:#efefef;border:1px solid #9a9a9a"></div>
<div style="left:57.9px;top:272.6px;width:44.50000000000001px;height:8.699999999999989px;line-height:8.699999999999989px;text-align:center;font-size:6.6px;font-family:'Liberation Sans',sans-serif;color:#404040;white-space:pre;overflow:hidden;">JA5LNC</div>
<div style="left:103.9px;top:238.2px;width:43.900000000000006px;height:33.30000000000001px;background:#efefef;border:1px solid #9a9a9a"></div>
<svg style="left:104.7px;top:239.0px" width="42.30" height="31.70"><use href="#st" width="42.30" height="31.70"/></svg>
<div style="left:103.9px;top:272.6px;width:43.900000000000006px;height:8.699999999999989px;background:#efefef;border:1px solid #9a9a9a"></div>
<div style="left:103.9px;top:272.6px;width:43.900000000000006px;height:8.699999999999989px;line-height:8.699999999999989px;text-align:center;font-size:6.6px;font-family:'Liberation Sans',sans-serif;color:#404040;white-space:pre;overflow:hidden;">JA5LNC_3</div>
<div style="left:148.9px;top:238.2px;width:44.19999999999999px;height:33.30000000000001px;background:#efefef;border:1px solid #9a9a9a"></div>
<svg style="left:149.70000000000002px;top:239.0px" width="42.60" height="31.70"><use href="#st" width="42.60" height="31.70"/></svg>
<div style="left:148.9px;top:272.6px;width:44.19999999999999px;height:8.699999999999989px;background:#efefef;border:1px solid #9a9a9a"></div>
<div style="left:148.9px;top:272.6px;width:44.19999999999999px;height:8.699999999999989px;line-height:8.699999999999989px;text-align:center;font-size:6.6px;font-family:'Liberation Sans',sans-serif;color:#404040;white-space:pre;overflow:hidden;">JA7EMU</div>
<div style="left:12.3px;top:285px;width:44.5px;height:32.60000000000002px;background:#efefef;border:1px solid #9a9a9a"></div>
<svg style="left:13.100000000000001px;top:285.8px" width="42.90" height="31.00"><use href="#st" width="42.90" height="31.00"/></svg>
<div style="left:12.3px;top:319.2px;width:44.5px;height:9.100000000000023px;background:#efefef;border:1px solid #9a9a9a"></div>
<div style="left:12.3px;top:319.2px;width:44.5px;height:9.100000000000023px;line-height:9.100000000000023px;text-align:center;font-size:6.6px;font-family:'Liberation Sans',sans-serif;color:#404040;white-space:pre;overflow:hidden;">JH3ECA</div>
<div style="left:57.9px;top:285px;width:44.50000000000001px;height:32.60000000000002px;background:#efefef;border:1px solid #9a9a9a"></div>
<svg style="left:58.699999999999996px;top:285.8px" width="42.90" height="31.00"><use href="#st" width="42.90" height="31.00"/></svg>
<div style="left:57.9px;top:319.2px;width:44.50000000000001px;height:9.100000000000023px;background:#efefef;border:1px solid #9a9a9a"></div>
<div style="left:57.9px;top:319.2px;width:44.50000000000001px;height:9.100000000000023px;line-height:9.100000000000023px;text-align:center;font-size:6.6px;font-family:'Liberation Sans',sans-serif;color:#404040;white-space:pre;overflow:hidden;">JH3ECA_3</div>
<div style="left:103.9px;top:285px;width:43.900000000000006px;height:32.60000000000002px;background:#efefef;border:1px solid #9a9a9a"></div>
<div style="left:103.9px;top:319.2px;width:43.900000000000006px;height:9.100000000000023px;background:#efefef;border:1px solid #9a9a9a"></div>
<div style="left:148.9px;top:285px;width:44.19999999999999px;height:32.60000000000002px;background:#efefef;border:1px solid #9a9a9a"></div>
<div style="left:148.9px;top:319.2px;width:44.19999999999999px;height:9.100000000000023px;background:#efefef;border:1px solid #9a9a9a"></div>
<div style="left:195.3px;top:192.7px;width:199.39999999999998px;height:9.300000000000011px;background:#c0ffc0;border:1px solid #909090"></div>
<div style="left:386px;top:193.7px;width:8px;height:7.300000000000011px;background:#fff"></div>
<svg style="left:386px;top:194px" width="8" height="7"><path d="M2 2.5 L4 4.5 L6 2.5" stroke="#555" stroke-width="0.6" fill="none"/></svg>
<div style="left:197px;top:194.11px;line-height:8.58px;font-size:6.6px;font-family:'Liberation Sans',sans-serif;color:#303030;white-space:pre;transform:scaleX(0.737);transform-origin:0 50%;">1010pコンテストは15時で終了します。</div>
<div style="left:397.3px;top:193.3px;width:10.0px;height:8.699999999999989px;box-sizing:border-box;border:1px solid #adadad;background:#fafafa;display:flex;align-items:center;justify-content:center;font-size:8px;font-family:'Liberation Sans',sans-serif;color:#303030;white-space:pre;overflow:hidden;">+</div>
<div style="left:411px;top:193.3px;width:11.399999999999977px;height:8.699999999999989px;background:#ffff00"></div>
<div style="left:411px;top:193.3px;width:11.399999999999977px;height:8.699999999999989px;line-height:8.699999999999989px;text-align:center;font-size:6.3px;font-family:'Liberation Sans',sans-serif;color:#606000;font-weight:bold;white-space:pre;overflow:hidden;">UP</div>
<div style="left:195.3px;top:204.7px;width:228.7px;height:31.30000000000001px;background:#c0ffc0;border:1px solid #909090"></div>
<div style="left:197px;top:205.21px;line-height:8.58px;font-size:6.6px;font-family:'Liberation Sans',sans-serif;color:#303030;white-space:pre;transform:scaleX(0.755);transform-origin:0 50%;">1010pコンテストは15時で終了します。_deJH3ECA_01/18_14:01</div>
<div style="left:197px;top:211.81px;line-height:8.58px;font-size:6.6px;font-family:'Liberation Sans',sans-serif;color:#303030;white-space:pre;transform:scaleX(0.724);transform-origin:0 50%;">xxxxx局こんにちわ～本日もよろしくお願いします。_deJJ3UBI_01/18_13:39</div>
<div style="left:427px;top:190px;width:1.5px;height:143px;background:#606060"></div>
<div style="left:195.3px;top:238.7px;width:228.7px;height:79.60000000000002px;background:#fff;border:1px solid #909090"></div>
<div style="left:197px;top:241.03px;line-height:7.54px;font-size:5.8px;font-family:'Liberation Sans',sans-serif;color:#181818;white-space:pre;transform:scaleX(0.964);transform-origin:0 50%;">#_JF1DFU_7.110MHz_+21dB_DT+0.1Sec_JPG_WSJT-X_FT8_x4U_JA9YR_#</div>
<div style="left:197px;top:248.03px;line-height:7.54px;font-size:5.8px;font-family:'Liberation Sans',sans-serif;color:#181818;white-space:pre;transform:scaleX(0.973);transform-origin:0 50%;">#_JF1DFU_7.110MHz_-01dB_DT+0.2Sec_JPG_JTDX_FT8_x4U_JE3RNC_#</div>
<div style="left:197px;top:255.03px;line-height:7.54px;font-size:5.8px;font-family:'Liberation Sans',sans-serif;color:#a8a860;white-space:pre;transform:scaleX(0.979);transform-origin:0 50%;">----------------------</div>
<div style="left:238.6px;top:255.03px;line-height:7.54px;font-size:5.8px;font-family:'Liberation Sans',sans-serif;color:#181818;white-space:pre;transform:scaleX(0.992);transform-origin:0 50%;">2026/01/18_14:55</div>
<div style="left:197px;top:262.03px;line-height:7.54px;font-size:5.8px;font-family:'Liberation Sans',sans-serif;color:#181818;white-space:pre;transform:scaleX(0.920);transform-origin:0 50%;">RX_JA9YR</div>
<div style="left:197px;top:269.03px;line-height:7.54px;font-size:5.8px;font-family:'Liberation Sans',sans-serif;color:#181818;white-space:pre;transform:scaleX(0.946);transform-origin:0 50%;">RX_JE3RNC</div>
<div style="left:197px;top:276.03px;line-height:7.54px;font-size:5.8px;font-family:'Liberation Sans',sans-serif;color:#181818;white-space:pre;transform:scaleX(0.955);transform-origin:0 50%;">RX_JE4DKN</div>
<div style="left:197px;top:283.03px;line-height:7.54px;font-size:5.8px;font-family:'Liberation Sans',sans-serif;color:#a8a860;white-space:pre;transform:scaleX(0.979);transform-origin:0 50%;">----------------------</div>
<div style="left:238.6px;top:283.03px;line-height:7.54px;font-size:5.8px;font-family:'Liberation Sans',sans-serif;color:#181818;white-space:pre;transform:scaleX(0.992);transform-origin:0 50%;">14:55</div>
<div style="left:197px;top:290.03px;line-height:7.54px;font-size:5.8px;font-family:'Liberation Sans',sans-serif;color:#181818;white-space:pre;transform:scaleX(0.959);transform-origin:0 50%;">#_JE3RNC_7.110MHz_+11dB_DT+0.1Sec_JPG_WSJT-X_FT8_x6U_JR7AVU_#</div>
<div style="left:197px;top:297.03px;line-height:7.54px;font-size:5.8px;font-family:'Liberation Sans',sans-serif;color:#a8a860;white-space:pre;transform:scaleX(0.979);transform-origin:0 50%;">----------------------</div>
<div style="left:238.6px;top:297.03px;line-height:7.54px;font-size:5.8px;font-family:'Liberation Sans',sans-serif;color:#181818;white-space:pre;transform:scaleX(0.992);transform-origin:0 50%;">2026/01/18_14:55</div>
<div style="left:197px;top:304.03px;line-height:7.54px;font-size:5.8px;font-family:'Liberation Sans',sans-serif;color:#181818;white-space:pre;transform:scaleX(0.925);transform-origin:0 50%;">RX_JR7AVU</div>
<div style="left:197px;top:311.03px;line-height:7.54px;font-size:5.8px;font-family:'Liberation Sans',sans-serif;color:#a8a860;white-space:pre;transform:scaleX(0.979);transform-origin:0 50%;">----------------------</div>
<div style="left:238.6px;top:311.03px;line-height:7.54px;font-size:5.8px;font-family:'Liberation Sans',sans-serif;color:#181818;white-space:pre;transform:scaleX(0.992);transform-origin:0 50%;">14:55</div>
<div style="left:396px;top:247.90px;line-height:7.8px;font-size:6px;font-family:'Liberation Sans',sans-serif;color:#404040;white-space:pre;transform:scaleX(0.750);transform-origin:0 50%;">Qg</div>
<div style="left:419.5px;top:248px;width:2.0px;height:8px;background:#606060"></div>
<div style="left:409.4px;top:303.6px;width:12.600000000000023px;height:12.399999999999977px;box-sizing:border-box;border:1px solid #e0e0e0;background:#fff;display:flex;align-items:center;justify-content:center;font-size:6.5px;font-family:'Liberation Sans',sans-serif;color:#303030;white-space:pre;overflow:hidden;">x</div>
<div style="left:196.5px;top:323px;width:5.300000000000011px;height:5.5px;box-sizing:border-box;border-radius:1px;background:#1565d0;"></div>
<svg style="position:absolute;left:196.5px;top:323px" width="5.300000000000011" height="5.5" viewBox="0 0 10 10"><path d="M2 5 L4.2 7.2 L8 2.8" stroke="#fff" stroke-width="1.3" fill="none"/></svg>
<div style="left:204.4px;top:322.38px;line-height:8.45px;font-size:6.5px;font-family:'Liberation Sans',sans-serif;color:#ff3030;white-space:pre;transform:scaleX(1.054);transform-origin:0 50%;">JA=</div>
<div style="left:220.5px;top:322.38px;line-height:8.45px;font-size:6.5px;font-family:'Liberation Sans',sans-serif;color:#ff3030;white-space:pre;">A</div>
<div style="left:229.3px;top:322.38px;line-height:8.45px;font-size:6.5px;font-family:'Liberation Sans',sans-serif;color:#ff3030;white-space:pre;">B</div>
<div style="left:238.1px;top:322.38px;line-height:8.45px;font-size:6.5px;font-family:'Liberation Sans',sans-serif;color:#ff3030;white-space:pre;">C</div>
<div style="left:247px;top:322.38px;line-height:8.45px;font-size:6.5px;font-family:'Liberation Sans',sans-serif;color:#ff3030;white-space:pre;">D</div>
<div style="left:254.9px;top:322.38px;line-height:8.45px;font-size:6.5px;font-family:'Liberation Sans',sans-serif;color:#606060;white-space:pre;">E</div>
<div style="left:263.2px;top:322.38px;line-height:8.45px;font-size:6.5px;font-family:'Liberation Sans',sans-serif;color:#606060;white-space:pre;">F</div>
<div style="left:281.1px;top:323px;width:6.5px;height:5.5px;box-sizing:border-box;border:0.5px solid #8a8a8a;background:#fff"></div>
<div style="left:289.5px;top:322.38px;line-height:8.45px;font-size:6.5px;font-family:'Liberation Sans',sans-serif;color:#606060;white-space:pre;transform:scaleX(0.881);transform-origin:0 50%;">DX=</div>
<div style="left:308.6px;top:322.38px;line-height:8.45px;font-size:6.5px;font-family:'Liberation Sans',sans-serif;color:#606060;white-space:pre;">A</div>
<div style="left:317px;top:322.38px;line-height:8.45px;font-size:6.5px;font-family:'Liberation Sans',sans-serif;color:#606060;white-space:pre;">B</div>
<div style="left:325.3px;top:322.38px;line-height:8.45px;font-size:6.5px;font-family:'Liberation Sans',sans-serif;color:#606060;white-space:pre;">C</div>
<div style="left:334.2px;top:322.38px;line-height:8.45px;font-size:6.5px;font-family:'Liberation Sans',sans-serif;color:#606060;white-space:pre;">D</div>
<div style="left:342px;top:322.38px;line-height:8.45px;font-size:6.5px;font-family:'Liberation Sans',sans-serif;color:#606060;white-space:pre;">E</div>
<div style="left:350.4px;top:322.38px;line-height:8.45px;font-size:6.5px;font-family:'Liberation Sans',sans-serif;color:#606060;white-space:pre;">F</div>
<div style="left:359.3px;top:322.38px;line-height:8.45px;font-size:6.5px;font-family:'Liberation Sans',sans-serif;color:#606060;white-space:pre;">G</div>
<div style="left:367.9px;top:322.38px;line-height:8.45px;font-size:6.5px;font-family:'Liberation Sans',sans-serif;color:#606060;white-space:pre;">H</div>
<div style="left:375.5px;top:322.38px;line-height:8.45px;font-size:6.5px;font-family:'Liberation Sans',sans-serif;color:#606060;white-space:pre;">I</div>
<div style="left:383.9px;top:322.38px;line-height:8.45px;font-size:6.5px;font-family:'Liberation Sans',sans-serif;color:#606060;white-space:pre;">J</div>
<div style="left:393.4px;top:322.38px;line-height:8.45px;font-size:6.5px;font-family:'Liberation Sans',sans-serif;color:#606060;white-space:pre;">K</div>
<div style="left:401.3px;top:322.38px;line-height:8.45px;font-size:6.5px;font-family:'Liberation Sans',sans-serif;color:#606060;white-space:pre;">L</div>
<div style="left:410.1px;top:322.38px;line-height:8.45px;font-size:6.5px;font-family:'Liberation Sans',sans-serif;color:#606060;white-space:pre;">M</div>
<div style="left:418.5px;top:322.38px;line-height:8.45px;font-size:6.5px;font-family:'Liberation Sans',sans-serif;color:#606060;white-space:pre;">N</div>
<div style="left:11px;top:332.2px;width:417px;height:1.0px;background:#707070"></div>
<div style="left:11px;top:338.3px;width:74.7px;height:43.0px;border:1px solid #d8d8d8;border-radius:1px"></div>
<div style="left:13px;top:335.3px;width:22px;height:6.0px;background:#f0f0f0"></div>
<div style="left:14px;top:335.00px;line-height:8.19px;font-size:6.3px;font-family:'Liberation Sans',sans-serif;color:#303030;white-space:pre;transform:scaleX(0.879);transform-origin:0 50%;">Soft_TX</div>
<div style="left:12.3px;top:343.3px;width:6.0px;height:6.0px;box-sizing:border-box;border-radius:50%;background:#fff;border:0.55px solid #6a6a6a"></div>
<div style="left:21px;top:341.90px;line-height:10.4px;font-size:8px;font-family:'Liberation Sans',sans-serif;color:#303030;white-space:pre;transform:scaleX(0.871);transform-origin:0 50%;">WSJT-X_TX_FT8</div>
<div style="left:12.3px;top:352.3px;width:6.0px;height:6.0px;border-radius:50%;background:#0f5fc8"></div>
<div style="left:14.0px;top:354.0px;width:2.6px;height:2.6px;border-radius:50%;background:#fff"></div>
<div style="left:21px;top:350.90px;line-height:10.4px;font-size:8px;font-family:'Liberation Sans',sans-serif;color:#ff3030;white-space:pre;transform:scaleX(0.862);transform-origin:0 50%;">JTDX_TX_FT8</div>
<div style="left:12.3px;top:362.0px;width:6.0px;height:6.0px;box-sizing:border-box;border-radius:50%;background:#fff;border:0.55px solid #6a6a6a"></div>
<div style="left:21px;top:360.60px;line-height:10.4px;font-size:8px;font-family:'Liberation Sans',sans-serif;color:#303030;white-space:pre;transform:scaleX(0.853);transform-origin:0 50%;">V907_bpsk_93.75</div>
<div style="left:12.3px;top:371.3px;width:6.0px;height:6.0px;box-sizing:border-box;border-radius:50%;background:#fff;border:0.55px solid #6a6a6a"></div>
<div style="left:21px;top:369.90px;line-height:10.4px;font-size:8px;font-family:'Liberation Sans',sans-serif;color:#303030;white-space:pre;transform:scaleX(0.860);transform-origin:0 50%;">JS8Call_TX_JS8</div>
<div style="left:90.3px;top:335.3px;width:26.700000000000003px;height:10.699999999999989px;background:#fff;border:1px solid #a0a0a0;border-radius:1px"></div>
<div style="left:92px;top:336.73px;line-height:9.75px;font-size:7.5px;font-family:'Liberation Sans',sans-serif;color:#303030;white-space:pre;transform:scaleX(0.827);transform-origin:0 50%;">.jpg</div>
<svg style="left:109px;top:338px" width="7" height="6"><path d="M1.5 1.8 L3.5 3.8 L5.5 1.8" stroke="#555" stroke-width="0.6" fill="none"/></svg>
<div style="left:91px;top:350px;width:25px;height:8px;background:#80f080"></div>
<div style="left:91px;top:350px;width:25px;height:8px;line-height:8px;text-align:center;font-size:6.5px;font-family:'Liberation Sans',sans-serif;color:#205020;white-space:pre;overflow:hidden;">TX img</div>
<div style="left:91px;top:361.7px;width:25px;height:8.300000000000011px;background:#80f8f8"></div>
<div style="left:91px;top:361.7px;width:25px;height:8.300000000000011px;line-height:8.300000000000011px;text-align:center;font-size:6.5px;font-family:'Liberation Sans',sans-serif;color:#205050;white-space:pre;overflow:hidden;">RX img</div>
<div style="left:91px;top:374px;width:10px;height:7px;background:#80f8f8"></div>
<div style="left:91px;top:374px;width:10px;height:7px;line-height:7px;text-align:center;font-size:6px;font-family:'Liberation Sans',sans-serif;color:#205050;white-space:pre;overflow:hidden;">&lt;</div>
<div style="left:105px;top:374px;width:10.700000000000003px;height:7px;background:#80f8f8"></div>
<div style="left:105px;top:374px;width:10.700000000000003px;height:7px;line-height:7px;text-align:center;font-size:6px;font-family:'Liberation Sans',sans-serif;color:#205050;white-space:pre;overflow:hidden;">&gt;</div>
<div style="left:120.3px;top:338.3px;width:180.0px;height:43.0px;border:1px solid #d8d8d8;border-radius:1px"></div>
<div style="left:123px;top:335.3px;width:123px;height:6.0px;background:#f0f0f0"></div>
<div style="left:124px;top:335.00px;line-height:8.19px;font-size:6.3px;font-family:'Liberation Sans',sans-serif;color:#303030;white-space:pre;transform:scaleX(0.899);transform-origin:0 50%;">TX_Mode   Original  Image   Size = 4752 x 3168</div>
<div style="left:122.0px;top:343.7px;width:6.0px;height:6.0px;border-radius:50%;background:#0f5fc8"></div>
<div style="left:123.7px;top:345.4px;width:2.6px;height:2.6px;border-radius:50%;background:#fff"></div>
<div style="left:131.7px;top:341.65px;line-height:11.7px;font-size:9px;font-family:'Liberation Sans',sans-serif;color:#ff3060;white-space:pre;transform:scaleX(0.831);transform-origin:0 50%;">JH3ECA/JPG</div>
<div style="left:199.3px;top:343.7px;width:6.0px;height:6.0px;box-sizing:border-box;border-radius:50%;background:#fff;border:0.55px solid #6a6a6a"></div>
<div style="left:208.5px;top:341.65px;line-height:11.7px;font-size:9px;font-family:'Liberation Sans',sans-serif;color:#383850;white-space:pre;transform:scaleX(0.844);transform-origin:0 50%;">JH3ECA/WSTV</div>
<div style="left:122.0px;top:357.0px;width:6.0px;height:6.0px;box-sizing:border-box;border-radius:50%;background:#fff;border:0.55px solid #6a6a6a"></div>
<div style="left:131.7px;top:354.95px;line-height:11.7px;font-size:9px;font-family:'Liberation Sans',sans-serif;color:#403060;white-space:pre;transform:scaleX(0.818);transform-origin:0 50%;">JH3ECA/HTML</div>
<div style="left:198.7px;top:354px;width:30.30000000000001px;height:10px;background:#ffff00;border:1px solid #e8e8a0"></div>
<div style="left:198.7px;top:354px;width:30.30000000000001px;height:10px;line-height:10px;text-align:center;font-size:6.6px;font-family:'Liberation Sans',sans-serif;color:#ff2020;white-space:pre;overflow:hidden;">LIVE_TX</div>
<div style="left:233px;top:354px;width:12.699999999999989px;height:10px;background:#ffff00;border:1px solid #e8e8a0"></div>
<div style="left:233px;top:354px;width:12.699999999999989px;height:10px;line-height:10px;text-align:center;font-size:6.6px;font-family:'Liberation Sans',sans-serif;color:#806000;white-space:pre;overflow:hidden;">RX</div>
<div style="left:250.3px;top:356.5px;width:6.699999999999989px;height:6.5px;box-sizing:border-box;border:0.5px solid #8a8a8a;background:#fff"></div>
<div style="left:259.7px;top:355.85px;line-height:9.1px;font-size:7px;font-family:'Liberation Sans',sans-serif;color:#ff3030;white-space:pre;transform:scaleX(0.880);transform-origin:0 50%;">QSL_STANP</div>
<div style="left:123.7px;top:367.6px;width:30.60000000000001px;height:9.699999999999989px;box-sizing:border-box;border:1px solid #d0d0d0;border-radius:1px;background:#f4f4f4;display:flex;align-items:center;justify-content:center;font-size:6.3px;font-family:'Liberation Sans',sans-serif;color:#303030;white-space:pre;overflow:hidden;">HTML Set</div>
<div style="left:158.3px;top:367.3px;width:89.39999999999998px;height:9.399999999999977px;background:#e0ffff;border:1px solid #707070"></div>
<div style="left:160px;top:367.93px;line-height:9.75px;font-size:7.5px;font-family:'Liberation Sans',sans-serif;color:#303030;white-space:pre;transform:scaleX(0.800);transform-origin:0 50%;">SF_TX1_RX4</div>
<div style="left:249.7px;top:369.01px;line-height:8.58px;font-size:6.6px;font-family:'Liberation Sans',sans-serif;color:#408070;white-space:pre;transform:scaleX(0.790);transform-origin:0 50%;">.html</div>
<div style="left:266.3px;top:367.6px;width:30.69999999999999px;height:9.699999999999989px;box-sizing:border-box;border:1px solid #d8d8d8;border-radius:1px;background:#f8f8f8;display:flex;align-items:center;justify-content:center;font-size:7px;font-family:'Liberation Sans',sans-serif;color:#303030;white-space:pre;overflow:hidden;">MP4_Up</div>
<div style="left:303px;top:336.7px;width:123.69999999999999px;height:44.60000000000002px;border:1px solid #d8d8d8;border-radius:1px"></div>
<div style="left:309.3px;top:340.3px;width:6.0px;height:6.0px;border-radius:50%;background:#0f5fc8"></div>
<div style="left:311.0px;top:342.0px;width:2.6px;height:2.6px;border-radius:50%;background:#fff"></div>
<div style="left:318px;top:340.00px;line-height:8.19px;font-size:6.3px;font-family:'Liberation Sans',sans-serif;color:#505020;white-space:pre;transform:scaleX(0.785);transform-origin:0 50%;">MyCall_TEXT</div>
<div style="left:355.4px;top:340.3px;width:6.0px;height:6.0px;box-sizing:border-box;border-radius:50%;background:#fff;border:0.55px solid #6a6a6a"></div>
<div style="left:364px;top:340.00px;line-height:8.19px;font-size:6.3px;font-family:'Liberation Sans',sans-serif;color:#505020;white-space:pre;transform:scaleX(0.757);transform-origin:0 50%;">MyCall_LOGO</div>
<div style="left:317px;top:351.93px;line-height:12.35px;font-size:9.5px;font-family:'Liberation Sans',sans-serif;color:#ff3030;white-space:pre;transform:scaleX(0.757);transform-origin:0 50%;">de</div>
<div style="left:327.7px;top:350.7px;width:53.0px;height:10.600000000000023px;background:#ffc0ff;border:1px solid #808080"></div>
<div style="left:327.7px;top:350.7px;width:53.0px;height:10.600000000000023px;line-height:10.600000000000023px;text-align:center;font-size:8px;font-family:'Liberation Sans',sans-serif;color:#503060;white-space:pre;overflow:hidden;">JH3ECA</div>
<div style="left:384px;top:351.8px;width:6.699999999999989px;height:6.199999999999989px;box-sizing:border-box;border:0.5px solid #8a8a8a;background:#fff"></div>
<div style="left:392px;top:352px;width:13.300000000000011px;height:9.300000000000011px;background:#e8e8e8;border:1px solid #c8c8c8"></div>
<div style="left:392.5px;top:352.5px;width:5.8840000000000146px;height:8.300000000000011px;background:#ffff00"></div>
<div style="left:393.3px;top:352.57px;line-height:9.75px;font-size:7.5px;font-family:'Liberation Sans',sans-serif;color:#303030;white-space:pre;">2</div>
<svg style="left:398.916px;top:352px" width="6.650000000000006" height="9.300000000000011"><path d="M1.8250000000000028 3.6500000000000057 L3.325000000000003 1.8500000000000059 L4.825000000000003 3.6500000000000057Z M1.8250000000000028 5.650000000000006 L3.325000000000003 7.4500000000000055 L4.825000000000003 5.650000000000006Z" fill="#222"/></svg>
<div style="left:407px;top:352px;width:16.30000000000001px;height:9.300000000000011px;background:#e8e8e8;border:1px solid #c8c8c8"></div>
<div style="left:407.5px;top:352.5px;width:7.324000000000012px;height:8.300000000000011px;background:#ffff00"></div>
<div style="left:408.3px;top:352.57px;line-height:9.75px;font-size:7.5px;font-family:'Liberation Sans',sans-serif;color:#303030;white-space:pre;">2</div>
<svg style="left:415.476px;top:352px" width="8.150000000000006" height="9.300000000000011"><path d="M2.575000000000003 3.6500000000000057 L4.075000000000003 1.8500000000000059 L5.575000000000003 3.6500000000000057Z M2.575000000000003 5.650000000000006 L4.075000000000003 7.4500000000000055 L5.575000000000003 5.650000000000006Z" fill="#222"/></svg>
<div style="left:309.7px;top:365.3px;width:6.0px;height:5.199999999999989px;box-sizing:border-box;border:0.5px solid #8a8a8a;background:#fff"></div>
<div style="left:319px;top:364px;width:61.69999999999999px;height:11.300000000000011px;background:#fff;border:1px solid #606060"></div>
<div style="left:321.5px;top:365.40px;line-height:10.4px;font-size:8px;font-family:'Liberation Sans',sans-serif;color:#303030;white-space:pre;transform:scaleX(0.853);transform-origin:0 50%;">2026/01/18  14:55</div>
<div style="left:384px;top:365px;width:6.699999999999989px;height:6.5px;box-sizing:border-box;border-radius:1px;background:#1565d0;"></div>
<svg style="position:absolute;left:384px;top:365px" width="6.699999999999989" height="6.5" viewBox="0 0 10 10"><path d="M2 5 L4.2 7.2 L8 2.8" stroke="#fff" stroke-width="1.3" fill="none"/></svg>
<div style="left:392px;top:365px;width:13.5px;height:9.699999999999989px;background:#e8e8e8;border:1px solid #c8c8c8"></div>
<div style="left:392.5px;top:365.5px;width:5.980000000000018px;height:8.699999999999989px;background:#c0f0c0"></div>
<div style="left:393.3px;top:365.78px;line-height:9.75px;font-size:7.5px;font-family:'Liberation Sans',sans-serif;color:#303030;white-space:pre;">2</div>
<svg style="left:399.02px;top:365px" width="6.75" height="9.699999999999989"><path d="M1.875 3.8499999999999943 L3.375 2.0499999999999945 L4.875 3.8499999999999943Z M1.875 5.849999999999994 L3.375 7.649999999999994 L4.875 5.849999999999994Z" fill="#222"/></svg>
<div style="left:11px;top:386.3px;width:214.3px;height:53.69999999999999px;border:1px solid #d8d8d8;border-radius:1px"></div>
<div style="left:13px;top:383.3px;width:9px;height:6.0px;background:#f0f0f0"></div>
<div style="left:14px;top:383.00px;line-height:8.19px;font-size:6.3px;font-family:'Liberation Sans',sans-serif;color:#303030;white-space:pre;transform:scaleX(0.800);transform-origin:0 50%;">RX</div>
<div style="left:12.3px;top:390.4px;width:5.399999999999999px;height:4.900000000000034px;box-sizing:border-box;border:0.5px solid #8a8a8a;background:#fff"></div>
<svg style="left:19px;top:389.6px" width="46.70" height="35.10"><use href="#st" width="46.70" height="35.10"/></svg>
<div style="left:62.3px;top:390.4px;width:10.0px;height:9.600000000000023px;box-sizing:border-box;border:1px solid #e8e8e8;background:#fff;display:flex;align-items:center;justify-content:center;font-size:9px;font-family:'Liberation Sans',sans-serif;color:#303030;white-space:pre;overflow:hidden;">+</div>
<div style="left:65.7px;top:400px;width:10.599999999999994px;height:8.699999999999989px;box-sizing:border-box;border:1px solid #e8e8e8;background:#fff;display:flex;align-items:center;justify-content:center;font-size:9px;font-family:'Liberation Sans',sans-serif;color:#303030;white-space:pre;overflow:hidden;">−</div>
<div style="left:11px;top:415.3px;width:8.7px;height:10.0px;background:#fff;border:1px solid #a0a0a0"></div>
<div style="left:11px;top:415.3px;width:8.7px;height:10.0px;line-height:10.0px;text-align:center;font-size:7.5px;font-family:'Liberation Sans',sans-serif;color:#504060;white-space:pre;overflow:hidden;">1</div>
<div style="left:16.3px;top:427.3px;width:55.400000000000006px;height:8.699999999999989px;background:#fff;border:1px solid #a0a0a0"></div>
<div style="left:24px;top:428.05px;line-height:9.1px;font-size:7px;font-family:'Liberation Sans',sans-serif;color:#404040;white-space:pre;transform:scaleX(0.794);transform-origin:0 50%;">JF1DFU  +05dB</div>
<div style="left:12.3px;top:428px;width:5.199999999999999px;height:5.300000000000011px;box-sizing:border-box;border:0.5px solid #8a8a8a;background:#fff"></div>
<div style="left:74.1px;top:390.4px;width:5.400000000000006px;height:4.900000000000034px;box-sizing:border-box;border:0.5px solid #8a8a8a;background:#fff"></div>
<div style="left:81.3px;top:390px;width:46.5px;height:34.19999999999999px;border:1px solid #a0a0a0;background:#efefef"></div>
<svg style="left:81.8px;top:399.3px" width="46.00" height="15.70"><use href="#ph" width="46.00" height="15.70"/></svg>
<div style="left:124.1px;top:390.4px;width:10.0px;height:9.600000000000023px;box-sizing:border-box;border:1px solid #e8e8e8;background:#fff;display:flex;align-items:center;justify-content:center;font-size:9px;font-family:'Liberation Sans',sans-serif;color:#303030;white-space:pre;overflow:hidden;">+</div>
<div style="left:127.5px;top:400px;width:10.599999999999994px;height:8.699999999999989px;box-sizing:border-box;border:1px solid #e8e8e8;background:#fff;display:flex;align-items:center;justify-content:center;font-size:9px;font-family:'Liberation Sans',sans-serif;color:#303030;white-space:pre;overflow:hidden;">−</div>
<div style="left:72.8px;top:415.3px;width:8.700000000000003px;height:10.0px;background:#fff;border:1px solid #a0a0a0"></div>
<div style="left:72.8px;top:415.3px;width:8.700000000000003px;height:10.0px;line-height:10.0px;text-align:center;font-size:7.5px;font-family:'Liberation Sans',sans-serif;color:#504060;white-space:pre;overflow:hidden;">2</div>
<div style="left:78.1px;top:427.3px;width:55.400000000000006px;height:8.699999999999989px;background:#fff;border:1px solid #a0a0a0"></div>
<div style="left:85.8px;top:428.05px;line-height:9.1px;font-size:7px;font-family:'Liberation Sans',sans-serif;color:#404040;white-space:pre;transform:scaleX(0.886);transform-origin:0 50%;">JJ3UBI  -03dB</div>
<div style="left:74.1px;top:428px;width:5.200000000000003px;height:5.300000000000011px;box-sizing:border-box;border:0.5px solid #8a8a8a;background:#fff"></div>
<div style="left:135.9px;top:390.4px;width:5.399999999999977px;height:4.900000000000034px;box-sizing:border-box;border:0.5px solid #8a8a8a;background:#fff"></div>
<div style="left:143.1px;top:390px;width:46.5px;height:34.19999999999999px;border:1px solid #a0a0a0;background:#efefef"></div>
<svg style="left:143.6px;top:399.3px" width="46.00" height="15.70"><use href="#fl" width="46.00" height="15.70"/></svg>
<div style="left:185.89999999999998px;top:390.4px;width:10.0px;height:9.600000000000023px;box-sizing:border-box;border:1px solid #e8e8e8;background:#fff;display:flex;align-items:center;justify-content:center;font-size:9px;font-family:'Liberation Sans',sans-serif;color:#303030;white-space:pre;overflow:hidden;">+</div>
<div style="left:189.3px;top:400px;width:10.599999999999966px;height:8.699999999999989px;box-sizing:border-box;border:1px solid #e8e8e8;background:#fff;display:flex;align-items:center;justify-content:center;font-size:9px;font-family:'Liberation Sans',sans-serif;color:#303030;white-space:pre;overflow:hidden;">−</div>
<div style="left:134.6px;top:415.3px;width:8.699999999999989px;height:10.0px;background:#fff;border:1px solid #a0a0a0"></div>
<div style="left:134.6px;top:415.3px;width:8.699999999999989px;height:10.0px;line-height:10.0px;text-align:center;font-size:7.5px;font-family:'Liberation Sans',sans-serif;color:#504060;white-space:pre;overflow:hidden;">3</div>
<div style="left:139.9px;top:427.3px;width:55.400000000000006px;height:8.699999999999989px;background:#fff;border:1px solid #a0a0a0"></div>
<div style="left:147.6px;top:428.05px;line-height:9.1px;font-size:7px;font-family:'Liberation Sans',sans-serif;color:#404040;white-space:pre;transform:scaleX(0.803);transform-origin:0 50%;">JE3RNC  -01dB</div>
<div style="left:135.9px;top:428px;width:5.199999999999989px;height:5.300000000000011px;box-sizing:border-box;border:0.5px solid #8a8a8a;background:#fff"></div>
<div style="left:201.3px;top:387.3px;width:9.399999999999977px;height:8.699999999999989px;background:#00e000;border:1px solid #208020"></div>
<div style="left:201.3px;top:387.3px;width:9.399999999999977px;height:8.699999999999989px;line-height:8.699999999999989px;text-align:center;font-size:6.5px;font-family:'Liberation Sans',sans-serif;color:#103010;white-space:pre;overflow:hidden;">ø</div>
<div style="left:208.7px;top:394px;width:14.0px;height:10px;background:#e8e8e8;border:1px solid #c8c8c8"></div>
<div style="left:209.2px;top:394.5px;width:6.219999999999999px;height:9.0px;background:#fff"></div>
<div style="left:210.0px;top:394.93px;line-height:9.75px;font-size:7.5px;font-family:'Liberation Sans',sans-serif;color:#303030;white-space:pre;">2</div>
<svg style="left:215.98px;top:394px" width="7.0" height="10"><path d="M2.0 4.0 L3.5 2.2 L5.0 4.0Z M2.0 6.0 L3.5 7.8 L5.0 6.0Z" fill="#222"/></svg>
<div style="left:208.7px;top:414px;width:14.0px;height:9.300000000000011px;background:#e8e8e8;border:1px solid #c8c8c8"></div>
<div style="left:209.2px;top:414.5px;width:6.219999999999999px;height:8.300000000000011px;background:#c0f0c0"></div>
<div style="left:210.0px;top:414.57px;line-height:9.75px;font-size:7.5px;font-family:'Liberation Sans',sans-serif;color:#303030;white-space:pre;">2</div>
<svg style="left:215.98px;top:414px" width="7.0" height="9.300000000000011"><path d="M2.0 3.6500000000000057 L3.5 1.8500000000000059 L5.0 3.6500000000000057Z M2.0 5.650000000000006 L3.5 7.4500000000000055 L5.0 5.650000000000006Z" fill="#222"/></svg>
<div style="left:198px;top:427.3px;width:24px;height:8.699999999999989px;background:#ffc8ff"></div>
<div style="left:198px;top:427.3px;width:24px;height:8.699999999999989px;line-height:8.699999999999989px;text-align:center;font-size:7.5px;font-family:'Liberation Sans',sans-serif;color:#404060;white-space:pre;overflow:hidden;">RX 14</div>
<div style="left:230.3px;top:386.7px;width:4.699999999999989px;height:24.600000000000023px;background:#1010f0"></div>
<div style="left:228px;top:384px;width:199.5px;height:30.399999999999977px;border:1px solid #d8d8d8;border-radius:1px"></div>
<div style="left:230.3px;top:386.7px;width:4.699999999999989px;height:24.600000000000023px;background:#1010f0"></div>
<div style="left:230.8px;top:390.57px;line-height:8.45px;font-size:6.5px;font-family:'Liberation Sans',sans-serif;color:#e0e0ff;white-space:pre;">P</div>
<div style="left:230.8px;top:399.57px;line-height:8.45px;font-size:6.5px;font-family:'Liberation Sans',sans-serif;color:#e0e0ff;white-space:pre;">S</div>
<div style="left:238.7px;top:387.7px;width:6.0px;height:6.0px;border-radius:50%;background:#0f5fc8"></div>
<div style="left:240.39999999999998px;top:389.4px;width:2.6px;height:2.6px;border-radius:50%;background:#fff"></div>
<div style="left:248.0px;top:387.21px;line-height:8.58px;font-size:6.6px;font-family:'Liberation Sans',sans-serif;color:#ff3030;white-space:pre;transform:scaleX(0.909);transform-origin:0 50%;">img1</div>
<div style="left:264.4px;top:387.7px;width:6.0px;height:6.0px;box-sizing:border-box;border-radius:50%;background:#fff;border:0.55px solid #6a6a6a"></div>
<div style="left:273.7px;top:387.21px;line-height:8.58px;font-size:6.6px;font-family:'Liberation Sans',sans-serif;color:#508050;white-space:pre;transform:scaleX(0.909);transform-origin:0 50%;">img2</div>
<div style="left:290.0px;top:387.7px;width:6.0px;height:6.0px;box-sizing:border-box;border-radius:50%;background:#fff;border:0.55px solid #6a6a6a"></div>
<div style="left:299.3px;top:387.21px;line-height:8.58px;font-size:6.6px;font-family:'Liberation Sans',sans-serif;color:#508050;white-space:pre;transform:scaleX(0.909);transform-origin:0 50%;">img3</div>
<div style="left:316.0px;top:387.7px;width:6.0px;height:6.0px;box-sizing:border-box;border-radius:50%;background:#fff;border:0.55px solid #6a6a6a"></div>
<div style="left:325.3px;top:387.21px;line-height:8.58px;font-size:6.6px;font-family:'Liberation Sans',sans-serif;color:#508050;white-space:pre;transform:scaleX(0.865);transform-origin:0 50%;">imgX</div>
<div style="left:239px;top:398px;width:20px;height:12.699999999999989px;background:#0000f0"></div>
<div style="left:239px;top:399px;width:20px;height:11.699999999999989px;line-height:11.699999999999989px;text-align:center;font-size:6.6px;font-family:'Liberation Sans',sans-serif;color:#e0e0ff;white-space:pre;overflow:hidden;">img1</div>
<div style="left:256.3px;top:398px;width:9.399999999999977px;height:6.699999999999989px;box-sizing:border-box;border:1px solid #e8e8e8;background:#fafafa;display:flex;align-items:center;justify-content:center;font-size:8px;font-family:'Liberation Sans',sans-serif;color:#303030;white-space:pre;overflow:hidden;">+</div>
<div style="left:261.7px;top:404px;width:9.300000000000011px;height:7.300000000000011px;box-sizing:border-box;border:1px solid #e8e8e8;background:#fafafa;display:flex;align-items:center;justify-content:center;font-size:8px;font-family:'Liberation Sans',sans-serif;color:#303030;white-space:pre;overflow:hidden;">−</div>
<div style="left:275.7px;top:398px;width:19.30000000000001px;height:12.699999999999989px;background:#0000f0"></div>
<div style="left:275.7px;top:399px;width:19.30000000000001px;height:11.699999999999989px;line-height:11.699999999999989px;text-align:center;font-size:6.6px;font-family:'Liberation Sans',sans-serif;color:#202080;white-space:pre;overflow:hidden;">img2</div>
<div style="left:292.3px;top:398px;width:9.399999999999977px;height:6.699999999999989px;box-sizing:border-box;border:1px solid #e8e8e8;background:#fafafa;display:flex;align-items:center;justify-content:center;font-size:8px;font-family:'Liberation Sans',sans-serif;color:#b0b0b0;white-space:pre;overflow:hidden;">+</div>
<div style="left:297.7px;top:404px;width:9.300000000000011px;height:7.300000000000011px;box-sizing:border-box;border:1px solid #e8e8e8;background:#fafafa;display:flex;align-items:center;justify-content:center;font-size:8px;font-family:'Liberation Sans',sans-serif;color:#b0b0b0;white-space:pre;overflow:hidden;">−</div>
<div style="left:312.3px;top:398px;width:20.0px;height:12.699999999999989px;background:#0000f0"></div>
<div style="left:312.3px;top:399px;width:20.0px;height:11.699999999999989px;line-height:11.699999999999989px;text-align:center;font-size:6.6px;font-family:'Liberation Sans',sans-serif;color:#202080;white-space:pre;overflow:hidden;">img3</div>
<div style="left:329.6px;top:398px;width:9.399999999999977px;height:6.699999999999989px;box-sizing:border-box;border:1px solid #e8e8e8;background:#fafafa;display:flex;align-items:center;justify-content:center;font-size:8px;font-family:'Liberation Sans',sans-serif;color:#b0b0b0;white-space:pre;overflow:hidden;">+</div>
<div style="left:335.0px;top:404px;width:9.300000000000011px;height:7.300000000000011px;box-sizing:border-box;border:1px solid #e8e8e8;background:#fafafa;display:flex;align-items:center;justify-content:center;font-size:8px;font-family:'Liberation Sans',sans-serif;color:#b0b0b0;white-space:pre;overflow:hidden;">−</div>
<div style="left:353.4px;top:386.9px;width:5.900000000000034px;height:5.300000000000011px;box-sizing:border-box;border:0.5px solid #8a8a8a;background:#fff"></div>
<div style="left:362px;top:384.45px;line-height:11.7px;font-size:9px;font-family:'Liberation Sans',sans-serif;color:#ff3030;font-weight:bold;white-space:pre;transform:scaleX(0.727);transform-origin:0 50%;">Wide  A</div>
<div style="left:346.3px;top:396.6px;width:45.69999999999999px;height:16.0px;border:1px solid #d8d8d8;border-radius:1px"></div>
<div style="left:350px;top:393.6px;width:32px;height:6.0px;background:#f0f0f0"></div>
<div style="left:351px;top:393.11px;line-height:8.58px;font-size:6.6px;font-family:'Liberation Sans',sans-serif;color:#303030;white-space:pre;transform:scaleX(0.870);transform-origin:0 50%;">Back image</div>
<div style="left:349.2px;top:400.8px;width:11.800000000000011px;height:9.399999999999977px;box-sizing:border-box;border:1px solid #e0e0e0;background:#f4f4f4;display:flex;align-items:center;justify-content:center;font-size:6.5px;font-family:'Liberation Sans',sans-serif;color:#303030;white-space:pre;overflow:hidden;">X</div>
<div style="left:364px;top:400.8px;width:10.699999999999989px;height:9.399999999999977px;background:#ff0000"></div>
<div style="left:364px;top:400.8px;width:10.699999999999989px;height:9.399999999999977px;line-height:9.399999999999977px;text-align:center;font-size:6.5px;font-family:'Liberation Sans',sans-serif;color:#400000;white-space:pre;overflow:hidden;">Y</div>
<div style="left:377.7px;top:400.8px;width:12.5px;height:9.399999999999977px;box-sizing:border-box;border:1px solid #e0e0e0;background:#f4f4f4;display:flex;align-items:center;justify-content:center;font-size:6.5px;font-family:'Liberation Sans',sans-serif;color:#303060;white-space:pre;overflow:hidden;">Z</div>
<div style="left:394.3px;top:389.5px;width:13.699999999999989px;height:8.300000000000011px;background:#80f080;border:1px solid #a0a0a0"></div>
<div style="left:394.3px;top:389.5px;width:13.699999999999989px;height:8.300000000000011px;line-height:8.300000000000011px;text-align:center;font-size:6.3px;font-family:'Liberation Sans',sans-serif;color:#205020;white-space:pre;overflow:hidden;">#B</div>
<div style="left:410.6px;top:389.5px;width:14.0px;height:8.300000000000011px;background:#ffff00;border:1px solid #a0a0a0"></div>
<div style="left:410.6px;top:389.5px;width:14.0px;height:8.300000000000011px;line-height:8.300000000000011px;text-align:center;font-size:6.3px;font-family:'Liberation Sans',sans-serif;color:#505000;white-space:pre;overflow:hidden;">#A</div>
<div style="left:394px;top:400.8px;width:14px;height:9.800000000000011px;background:#e8e8e8;border:1px solid #c8c8c8"></div>
<div style="left:394.5px;top:401.3px;width:6.220000000000027px;height:8.800000000000011px;background:#fff"></div>
<div style="left:395.3px;top:401.63px;line-height:9.75px;font-size:7.5px;font-family:'Liberation Sans',sans-serif;color:#303030;white-space:pre;">4</div>
<svg style="left:401.28px;top:400.8px" width="7.0" height="9.800000000000011"><path d="M2.0 3.9000000000000057 L3.5 2.100000000000006 L5.0 3.9000000000000057Z M2.0 5.900000000000006 L3.5 7.7000000000000055 L5.0 5.900000000000006Z" fill="#222"/></svg>
<div style="left:410.5px;top:400.8px;width:14.0px;height:9.800000000000011px;background:#e8e8e8;border:1px solid #c8c8c8"></div>
<div style="left:411.0px;top:401.3px;width:6.220000000000027px;height:8.800000000000011px;background:#fff"></div>
<div style="left:411.8px;top:401.63px;line-height:9.75px;font-size:7.5px;font-family:'Liberation Sans',sans-serif;color:#303030;white-space:pre;">3</div>
<svg style="left:417.78px;top:400.8px" width="7.0" height="9.800000000000011"><path d="M2.0 3.9000000000000057 L3.5 2.100000000000006 L5.0 3.9000000000000057Z M2.0 5.900000000000006 L3.5 7.7000000000000055 L5.0 5.900000000000006Z" fill="#222"/></svg>
<div style="left:228px;top:418.4px;width:199.5px;height:58.60000000000002px;border:1px solid #d8d8d8;border-radius:1px"></div>
<div style="left:231px;top:415.4px;width:30px;height:6.0px;background:#f0f0f0"></div>
<div style="left:232px;top:415.10px;line-height:8.19px;font-size:6.3px;font-family:'Liberation Sans',sans-serif;color:#303030;white-space:pre;transform:scaleX(0.808);transform-origin:0 50%;">WidePic_TX</div>
<div style="left:230.3px;top:424.7px;width:6.699999999999989px;height:5.300000000000011px;box-sizing:border-box;border:0.5px solid #8a8a8a;background:#fff"></div>
<div style="left:239.7px;top:424.7px;width:6.600000000000023px;height:8.600000000000023px;background:#80f040;border:1px solid #c0c0c0"></div>
<div style="left:239.7px;top:424.7px;width:6.600000000000023px;height:8.600000000000023px;line-height:8.600000000000023px;text-align:center;font-size:6px;font-family:'Liberation Sans',sans-serif;color:#303030;white-space:pre;overflow:hidden;">L</div>
<div style="left:249px;top:423.3px;width:122.19999999999999px;height:10.699999999999989px;background:#fff;border:1px solid #808080"></div>
<div style="left:249.5px;top:423.8px;width:113.5px;height:9.699999999999989px;background:#a0f840"></div>
<div style="left:251px;top:423.75px;line-height:11.7px;font-size:9px;font-family:'Liberation Sans',sans-serif;color:#404020;white-space:pre;transform:scaleX(0.660);transform-origin:0 50%;">JF1DFU  +05dB  7.110MHz  JPG  JTDX_|</div>
<div style="left:363px;top:423.8px;width:7.699999999999989px;height:9.699999999999989px;background:#fff"></div>
<svg style="left:364px;top:426px" width="7" height="6"><path d="M1.5 1.8 L3.5 3.8 L5.5 1.8" stroke="#555" stroke-width="0.6" fill="none"/></svg>
<div style="left:374.7px;top:423.3px;width:8.699999999999989px;height:9.5px;background:#d0ffff;border:1px solid #e0e0e0"></div>
<div style="left:374.7px;top:423.3px;width:8.699999999999989px;height:9.5px;line-height:9.5px;text-align:center;font-size:6px;font-family:'Liberation Sans',sans-serif;color:#406060;white-space:pre;overflow:hidden;">Q</div>
<div style="left:386.2px;top:422.7px;width:6.300000000000011px;height:5.800000000000011px;box-sizing:border-box;border:0.5px solid #8a8a8a;background:#fff"></div>
<div style="left:394px;top:422.7px;width:14px;height:9.5px;background:#e8e8e8;border:1px solid #c8c8c8"></div>
<div style="left:394.5px;top:423.2px;width:6.220000000000027px;height:8.5px;background:#ffff00"></div>
<div style="left:395.3px;top:423.38px;line-height:9.75px;font-size:7.5px;font-family:'Liberation Sans',sans-serif;color:#303030;white-space:pre;">2</div>
<svg style="left:401.28px;top:422.7px" width="7.0" height="9.5"><path d="M2.0 3.75 L3.5 1.9500000000000002 L5.0 3.75Z M2.0 5.75 L3.5 7.55 L5.0 5.75Z" fill="#222"/></svg>
<div style="left:410.6px;top:422.7px;width:14.399999999999977px;height:9.5px;background:#e8e8e8;border:1px solid #c8c8c8"></div>
<div style="left:411.1px;top:423.2px;width:6.411999999999978px;height:8.5px;background:#ffff00"></div>
<div style="left:411.90000000000003px;top:423.38px;line-height:9.75px;font-size:7.5px;font-family:'Liberation Sans',sans-serif;color:#303030;white-space:pre;">2</div>
<svg style="left:418.088px;top:422.7px" width="7.199999999999989" height="9.5"><path d="M2.0999999999999943 3.75 L3.5999999999999943 1.9500000000000002 L5.099999999999994 3.75Z M2.0999999999999943 5.75 L3.5999999999999943 7.55 L5.099999999999994 5.75Z" fill="#222"/></svg>
<div style="left:376px;top:434.32px;line-height:9.75px;font-size:7.5px;font-family:'Liberation Sans',sans-serif;color:#ff3030;font-weight:bold;white-space:pre;transform:scaleX(0.914);transform-origin:0 50%;">F5</div>
<div style="left:386.3px;top:435.3px;width:6.199999999999989px;height:5.0px;box-sizing:border-box;border:0.5px solid #8a8a8a;background:#fff"></div>
<div style="left:394.4px;top:435.3px;width:13.400000000000034px;height:8.899999999999977px;background:#e8e8e8;border:1px solid #c8c8c8"></div>
<div style="left:394.9px;top:435.8px;width:5.932000000000016px;height:7.899999999999977px;background:#ffff00"></div>
<div style="left:395.7px;top:435.68px;line-height:9.75px;font-size:7.5px;font-family:'Liberation Sans',sans-serif;color:#303030;white-space:pre;">2</div>
<svg style="left:401.368px;top:435.3px" width="6.700000000000017" height="8.899999999999977"><path d="M1.8500000000000085 3.4499999999999886 L3.3500000000000085 1.6499999999999888 L4.8500000000000085 3.4499999999999886Z M1.8500000000000085 5.449999999999989 L3.3500000000000085 7.2499999999999885 L4.8500000000000085 5.449999999999989Z" fill="#222"/></svg>
<div style="left:410px;top:435.3px;width:15.5px;height:8.899999999999977px;background:#e8e8e8;border:1px solid #c8c8c8"></div>
<div style="left:410.5px;top:435.8px;width:6.939999999999998px;height:7.899999999999977px;background:#ffff00"></div>
<div style="left:411.3px;top:435.68px;line-height:9.75px;font-size:7.5px;font-family:'Liberation Sans',sans-serif;color:#303030;white-space:pre;">0</div>
<svg style="left:418.06px;top:435.3px" width="7.75" height="8.899999999999977"><path d="M2.375 3.4499999999999886 L3.875 1.6499999999999888 L5.375 3.4499999999999886Z M2.375 5.449999999999989 L3.875 7.2499999999999885 L5.375 5.449999999999989Z" fill="#222"/></svg>
<div style="left:257.7px;top:436px;width:12.600000000000023px;height:7.300000000000011px;background:#fafafa"></div>
<div style="left:257.7px;top:436px;width:12.600000000000023px;height:7.300000000000011px;line-height:7.300000000000011px;text-align:center;font-size:6.5px;font-family:'Liberation Sans',sans-serif;color:#404060;white-space:pre;overflow:hidden;">1</div>
<div style="left:269.7px;top:436.5px;width:1.2000000000000455px;height:6.800000000000011px;background:#707070"></div>
<div style="left:270.3px;top:436px;width:14.199999999999989px;height:7.300000000000011px;background:#fafafa"></div>
<div style="left:270.3px;top:436px;width:14.199999999999989px;height:7.300000000000011px;line-height:7.300000000000011px;text-align:center;font-size:6.5px;font-family:'Liberation Sans',sans-serif;color:#404060;white-space:pre;overflow:hidden;">2</div>
<div style="left:283.9px;top:436.5px;width:1.2000000000000455px;height:6.800000000000011px;background:#707070"></div>
<div style="left:284.5px;top:436px;width:13.800000000000011px;height:7.300000000000011px;background:#fafafa"></div>
<div style="left:284.5px;top:436px;width:13.800000000000011px;height:7.300000000000011px;line-height:7.300000000000011px;text-align:center;font-size:6.5px;font-family:'Liberation Sans',sans-serif;color:#404060;white-space:pre;overflow:hidden;">3</div>
<div style="left:297.7px;top:436.5px;width:1.2000000000000455px;height:6.800000000000011px;background:#707070"></div>
<div style="left:298.3px;top:436px;width:14.699999999999989px;height:7.300000000000011px;background:#fafafa"></div>
<div style="left:298.3px;top:436px;width:14.699999999999989px;height:7.300000000000011px;line-height:7.300000000000011px;text-align:center;font-size:6.5px;font-family:'Liberation Sans',sans-serif;color:#404060;white-space:pre;overflow:hidden;">4</div>
<div style="left:312.4px;top:436.5px;width:1.2000000000000455px;height:6.800000000000011px;background:#707070"></div>
<div style="left:313px;top:436px;width:14px;height:7.300000000000011px;background:#88e888"></div>
<div style="left:313px;top:436px;width:14px;height:7.300000000000011px;line-height:7.300000000000011px;text-align:center;font-size:6.5px;font-family:'Liberation Sans',sans-serif;color:#404060;white-space:pre;overflow:hidden;">5</div>
<div style="left:326.4px;top:436.5px;width:1.2000000000000455px;height:6.800000000000011px;background:#707070"></div>
<div style="left:327px;top:436px;width:13.300000000000011px;height:7.300000000000011px;background:#fafafa"></div>
<div style="left:327px;top:436px;width:13.300000000000011px;height:7.300000000000011px;line-height:7.300000000000011px;text-align:center;font-size:6.5px;font-family:'Liberation Sans',sans-serif;color:#404060;white-space:pre;overflow:hidden;">6</div>
<div style="left:339.7px;top:436.5px;width:1.2000000000000455px;height:6.800000000000011px;background:#707070"></div>
<div style="left:341px;top:436px;width:14.600000000000023px;height:7.300000000000011px;background:#fafafa"></div>
<div style="left:341px;top:436px;width:14.600000000000023px;height:7.300000000000011px;line-height:7.300000000000011px;text-align:center;font-size:6.5px;font-family:'Liberation Sans',sans-serif;color:#404060;white-space:pre;overflow:hidden;">JS8</div>
<div style="left:355.0px;top:436.5px;width:1.2000000000000455px;height:6.800000000000011px;background:#707070"></div>
<div style="left:233px;top:441.40px;line-height:8.19px;font-size:6.3px;font-family:'Liberation Sans',sans-serif;color:#404060;white-space:pre;transform:scaleX(0.764);transform-origin:0 50%;">FreeMsg</div>
<div style="left:232px;top:449.25px;line-height:9.1px;font-size:7px;font-family:'Liberation Sans',sans-serif;color:#2050c0;font-weight:bold;white-space:pre;">1</div>
<div style="left:236.3px;top:450px;width:6.0px;height:6px;box-sizing:border-box;border-radius:1px;background:#1565d0;"></div>
<svg style="position:absolute;left:236.3px;top:450px" width="6.0" height="6" viewBox="0 0 10 10"><path d="M2 5 L4.2 7.2 L8 2.8" stroke="#fff" stroke-width="1.3" fill="none"/></svg>
<div style="left:244.5px;top:449.25px;line-height:9.1px;font-size:7px;font-family:'Liberation Sans',sans-serif;color:#303030;font-weight:bold;white-space:pre;">2</div>
<div style="left:249.7px;top:450px;width:5.300000000000011px;height:6px;box-sizing:border-box;border:0.5px solid #8a8a8a;background:#fff"></div>
<div style="left:232px;top:458.55px;line-height:9.1px;font-size:7px;font-family:'Liberation Sans',sans-serif;color:#505050;font-weight:bold;white-space:pre;">3</div>
<div style="left:237.2px;top:459.3px;width:5.300000000000011px;height:6.0px;box-sizing:border-box;border:0.5px solid #8a8a8a;background:#fff"></div>
<div style="left:244.5px;top:458.55px;line-height:9.1px;font-size:7px;font-family:'Liberation Sans',sans-serif;color:#505050;font-weight:bold;white-space:pre;">4</div>
<div style="left:249.7px;top:459.3px;width:5.300000000000011px;height:6.0px;box-sizing:border-box;border:0.5px solid #8a8a8a;background:#fff"></div>
<div style="left:232px;top:467.95px;line-height:9.1px;font-size:7px;font-family:'Liberation Sans',sans-serif;color:#ff3030;font-weight:bold;white-space:pre;">5</div>
<div style="left:237.2px;top:468.7px;width:5.300000000000011px;height:6.0px;box-sizing:border-box;border:0.5px solid #8a8a8a;background:#fff"></div>
<div style="left:244.5px;top:467.95px;line-height:9.1px;font-size:7px;font-family:'Liberation Sans',sans-serif;color:#303030;font-weight:bold;white-space:pre;">6</div>
<div style="left:249.7px;top:468.7px;width:5.300000000000011px;height:6.0px;box-sizing:border-box;border:0.5px solid #8a8a8a;background:#fff"></div>
<div style="left:258px;top:444.3px;width:108px;height:30.399999999999977px;background:#fff;border:1px solid #808080"></div>
<div style="left:260px;top:444.82px;line-height:9.36px;font-size:7.2px;font-family:'Liberation Sans',sans-serif;color:#303030;white-space:pre;transform:scaleX(0.754);transform-origin:0 50%;">参加局ありがとうございます。</div>
<div style="left:260px;top:452.12px;line-height:9.36px;font-size:7.2px;font-family:'Liberation Sans',sans-serif;color:#303030;white-space:pre;transform:scaleX(0.930);transform-origin:0 50%;">ログの提出はX412で行います。</div>
<div style="left:260px;top:459.72px;line-height:9.36px;font-size:7.2px;font-family:'Liberation Sans',sans-serif;color:#303030;white-space:pre;transform:scaleX(0.905);transform-origin:0 50%;">提出方法は私のHPを見て下さい。|</div>
<div style="left:369.5px;top:456px;width:1.5px;height:11px;background:#505050"></div>
<div style="left:372.7px;top:444px;width:1.0px;height:33px;background:#505050"></div>
<div style="left:377px;top:447.6px;width:14.100000000000023px;height:9.099999999999966px;background:#0000f0"></div>
<div style="left:377px;top:447.6px;width:14.100000000000023px;height:9.099999999999966px;line-height:9.099999999999966px;text-align:center;font-size:7.5px;font-family:'Liberation Sans',sans-serif;color:#c0c0ff;white-space:pre;overflow:hidden;">XY</div>
<div style="left:395px;top:449px;width:6.699999999999989px;height:7px;box-sizing:border-box;border:0.5px solid #8a8a8a;background:#fff"></div>
<div style="left:404px;top:448.62px;line-height:9.36px;font-size:7.2px;font-family:'Liberation Sans',sans-serif;color:#405050;white-space:pre;transform:scaleX(0.872);transform-origin:0 50%;">Rota 90</div>
<div style="left:377px;top:461.1px;width:32.69999999999999px;height:14.0px;background:#ffff00"></div>
<div style="left:377px;top:461.1px;width:32.69999999999999px;height:14.0px;line-height:14.0px;text-align:center;font-size:7.5px;font-family:'Liberation Sans',sans-serif;color:#404000;white-space:pre;overflow:hidden;">WideTX</div>
<div style="left:412.8px;top:461px;width:13.300000000000011px;height:14px;box-sizing:border-box;border:1px solid #e0e0e0;background:#fff;display:flex;align-items:center;justify-content:center;font-size:9px;font-family:'Liberation Sans',sans-serif;color:#303030;white-space:pre;overflow:hidden;">X</div>
<div style="left:11.7px;top:443.3px;width:67.3px;height:10.0px;background:#80f080"></div>
<div style="left:11.7px;top:443.3px;width:67.3px;height:10.0px;line-height:10.0px;text-align:center;font-size:6.5px;font-family:'Liberation Sans',sans-serif;color:#205020;white-space:pre;overflow:hidden;">TX image  SET</div>
<div style="left:85px;top:441px;width:6px;height:5.399999999999977px;box-sizing:border-box;border-radius:1px;background:#1565d0;"></div>
<svg style="position:absolute;left:85px;top:441px" width="6" height="5.399999999999977" viewBox="0 0 10 10"><path d="M2 5 L4.2 7.2 L8 2.8" stroke="#fff" stroke-width="1.3" fill="none"/></svg>
<div style="left:85px;top:448.7px;width:8.700000000000003px;height:6.600000000000023px;background:#ffff80"></div>
<div style="left:85px;top:448.7px;width:8.700000000000003px;height:6.600000000000023px;line-height:6.600000000000023px;text-align:center;font-size:6.5px;font-family:'Liberation Sans',sans-serif;color:#303030;font-weight:bold;white-space:pre;overflow:hidden;">7</div>
<div style="left:95.7px;top:443px;width:20.0px;height:12px;background:#80f8f8"></div>
<div style="left:95.7px;top:443px;width:20.0px;height:12px;line-height:12px;text-align:center;font-size:6.3px;font-family:'Liberation Sans',sans-serif;color:#c04060;white-space:pre;overflow:hidden;">Play1</div>
<div style="left:117.4px;top:442px;width:8.599999999999994px;height:5.699999999999989px;background:#80f8f8"></div>
<div style="left:117.4px;top:441.5px;width:8.599999999999994px;height:6.199999999999989px;line-height:6.199999999999989px;text-align:center;font-size:6.5px;font-family:'Liberation Sans',sans-serif;color:#c03030;white-space:pre;overflow:hidden;">+</div>
<div style="left:120.3px;top:448.3px;width:8.700000000000003px;height:6.699999999999989px;background:#80f8f8"></div>
<div style="left:120.3px;top:448px;width:8.700000000000003px;height:7px;line-height:7px;text-align:center;font-size:6.5px;font-family:'Liberation Sans',sans-serif;color:#c03030;white-space:pre;overflow:hidden;">−</div>
<div style="left:132.3px;top:441px;width:6.0px;height:5.399999999999977px;box-sizing:border-box;border:0.5px solid #8a8a8a;background:#fff"></div>
<div style="left:132.3px;top:448.7px;width:8.699999999999989px;height:6.600000000000023px;background:#ffff80"></div>
<div style="left:132.3px;top:448.7px;width:8.699999999999989px;height:6.600000000000023px;line-height:6.600000000000023px;text-align:center;font-size:6.5px;font-family:'Liberation Sans',sans-serif;color:#303030;font-weight:bold;white-space:pre;overflow:hidden;">7</div>
<div style="left:143.0px;top:443px;width:20.0px;height:12px;background:#80f8f8"></div>
<div style="left:143.0px;top:443px;width:20.0px;height:12px;line-height:12px;text-align:center;font-size:6.3px;font-family:'Liberation Sans',sans-serif;color:#405060;white-space:pre;overflow:hidden;">Play2</div>
<div style="left:164.7px;top:442px;width:8.600000000000023px;height:5.699999999999989px;background:#80f8f8"></div>
<div style="left:164.7px;top:441.5px;width:8.600000000000023px;height:6.199999999999989px;line-height:6.199999999999989px;text-align:center;font-size:6.5px;font-family:'Liberation Sans',sans-serif;color:#405060;white-space:pre;overflow:hidden;">+</div>
<div style="left:167.6px;top:448.3px;width:8.700000000000017px;height:6.699999999999989px;background:#80f8f8"></div>
<div style="left:167.6px;top:448px;width:8.700000000000017px;height:7px;line-height:7px;text-align:center;font-size:6.5px;font-family:'Liberation Sans',sans-serif;color:#405060;white-space:pre;overflow:hidden;">−</div>
<div style="left:180px;top:441px;width:6px;height:5.399999999999977px;box-sizing:border-box;border:0.5px solid #8a8a8a;background:#fff"></div>
<div style="left:180px;top:448.7px;width:8.699999999999989px;height:6.600000000000023px;background:#ffff80"></div>
<div style="left:180px;top:448.7px;width:8.699999999999989px;height:6.600000000000023px;line-height:6.600000000000023px;text-align:center;font-size:6.5px;font-family:'Liberation Sans',sans-serif;color:#303030;font-weight:bold;white-space:pre;overflow:hidden;">7</div>
<div style="left:190.7px;top:443px;width:20.0px;height:12px;background:#80f8f8"></div>
<div style="left:190.7px;top:443px;width:20.0px;height:12px;line-height:12px;text-align:center;font-size:6.3px;font-family:'Liberation Sans',sans-serif;color:#405060;white-space:pre;overflow:hidden;">Play3</div>
<div style="left:212.4px;top:442px;width:8.599999999999994px;height:5.699999999999989px;background:#80f8f8"></div>
<div style="left:212.4px;top:441.5px;width:8.599999999999994px;height:6.199999999999989px;line-height:6.199999999999989px;text-align:center;font-size:6.5px;font-family:'Liberation Sans',sans-serif;color:#405060;white-space:pre;overflow:hidden;">+</div>
<div style="left:215.3px;top:448.3px;width:8.699999999999989px;height:6.699999999999989px;background:#80f8f8"></div>
<div style="left:215.3px;top:448px;width:8.699999999999989px;height:7px;line-height:7px;text-align:center;font-size:6.5px;font-family:'Liberation Sans',sans-serif;color:#405060;white-space:pre;overflow:hidden;">−</div>
<div style="left:9.7px;top:457.3px;width:160.3px;height:7.099999999999966px;background:#80f080"></div>
<div style="left:11px;top:457.60px;line-height:8.19px;font-size:6.3px;font-family:'Liberation Sans',sans-serif;color:#204020;white-space:pre;transform:scaleX(0.859);transform-origin:0 50%;">F:¥画像ファイル¥1A_2021_Pic¥2021_1129_富山県¥PM86LU66</div>
<div style="left:10.3px;top:467px;width:69.4px;height:8.300000000000011px;background:#101010"></div>
<div style="left:12px;top:466.80px;line-height:10.4px;font-size:8px;font-family:'Liberation Sans',sans-serif;color:#e8e8ff;white-space:pre;transform:scaleX(0.848);transform-origin:0 50%;">2026/01/18   14:55:05</div>
<div style="left:82.3px;top:465.93px;line-height:12.35px;font-size:9.5px;font-family:'Liberation Sans',sans-serif;color:#ff1010;font-weight:bold;white-space:pre;transform:scaleX(0.844);transform-origin:0 50%;">AutoRX</div>
<div style="left:117.5px;top:466.3px;width:30.0px;height:9.199999999999989px;box-sizing:border-box;border:1px solid #a0a0a0;background:#fff;display:flex;align-items:center;justify-content:center;font-size:6.8px;font-family:'Liberation Sans',sans-serif;color:#2020c0;white-space:pre;overflow:hidden;">FTP_A</div>
<div style="left:150px;top:466.3px;width:8.699999999999989px;height:9.199999999999989px;box-sizing:border-box;border:1px solid #d0d0d0;background:#fff;display:flex;align-items:center;justify-content:center;font-size:6px;font-family:'Liberation Sans',sans-serif;color:#c02020;white-space:pre;overflow:hidden;">•</div>
<div style="left:162.5px;top:466.3px;width:46.19999999999999px;height:9.699999999999989px;background:#fff;border:1px solid #909090"></div>
<div style="left:164px;top:466.80px;line-height:10.4px;font-size:8px;font-family:'Liberation Sans',sans-serif;color:#303030;white-space:pre;transform:scaleX(0.899);transform-origin:0 50%;">7.110</div>
<svg style="left:200px;top:468px" width="7" height="6"><path d="M1.5 1.8 L3.5 3.8 L5.5 1.8" stroke="#555" stroke-width="0.6" fill="none"/></svg>
<div style="left:212px;top:469.51px;line-height:8.58px;font-size:6.6px;font-family:'Liberation Sans',sans-serif;color:#404060;white-space:pre;transform:scaleX(0.863);transform-origin:0 50%;">MHz</div>
<div style="left:0px;top:483px;width:900px;height:23px;background:#1e1e1e"></div>
<div style="left:9.5px;top:489px;width:5.300000000000001px;height:5.300000000000011px;background:linear-gradient(135deg,#6fe0ff,#1aa0e8);border-radius:0.5px"></div>
<div style="left:15.5px;top:489px;width:5.300000000000001px;height:5.300000000000011px;background:linear-gradient(135deg,#6fe0ff,#1aa0e8);border-radius:0.5px"></div>
<div style="left:9.5px;top:495px;width:5.300000000000001px;height:5.300000000000011px;background:linear-gradient(135deg,#6fe0ff,#1aa0e8);border-radius:0.5px"></div>
<div style="left:15.5px;top:495px;width:5.300000000000001px;height:5.300000000000011px;background:linear-gradient(135deg,#6fe0ff,#1aa0e8);border-radius:0.5px"></div>
<div style="left:27px;top:487.5px;width:46.7px;height:14.5px;border-radius:7px;background:#2c2c2c"></div>
<svg style="left:41px;top:491px" width="7" height="7"><circle cx="3" cy="3" r="2.2" stroke="#e0e0e0" stroke-width="0.9" fill="none"/><path d="M4.6 4.6 L6.5 6.5" stroke="#e0e0e0" stroke-width="0.9"/></svg>
<div style="left:49px;top:492.03px;line-height:7.15px;font-size:5.5px;font-family:'Liberation Sans',sans-serif;color:#d0d0d0;white-space:pre;">検索</div>
<svg style="left:79px;top:488.5px" width="12" height="12"><rect x="1" y="3" width="7" height="7" fill="#606060"/><rect x="4" y="1" width="7" height="7" fill="#d0d0d0"/></svg>
<svg style="left:100px;top:488.5px" width="12" height="12"><path d="M2 6 Q3 1 7 2 Q11 3 10 7 Q9 11 5 10 Q1 9 2 6Z" fill="#a060f0"/><path d="M2 7 Q4 3 7 5" stroke="#40c0ff" stroke-width="2" fill="none"/><path d="M6 9 Q9 8 10 5" stroke="#ffb040" stroke-width="2" fill="none"/></svg>
<svg style="left:121px;top:488.5px" width="12" height="12"><rect x="1" y="2.5" width="10" height="8" fill="#f0b820"/><rect x="1" y="4.5" width="10" height="6" fill="#ffd650"/><rect x="4" y="6" width="5" height="1.3" fill="#3a7ad0"/></svg>
<svg style="left:141.5px;top:488.5px" width="12" height="12"><circle cx="6" cy="6" r="5" fill="#1a80d8"/><path d="M2 8 Q5 12 10 8 Q7 9 6 6" fill="#40d070"/><circle cx="6.5" cy="6" r="2" fill="#1e1e1e"/></svg>
<svg style="left:162px;top:488.5px" width="12" height="12"><rect x="2" y="1" width="8" height="10" fill="#50a0e0"/><rect x="3" y="3" width="6" height="7" fill="#dff0ff"/><path d="M3.5 5 H8.5 M3.5 7 H8.5" stroke="#5080b0" stroke-width="0.6"/></svg>
<svg style="left:182px;top:488.5px" width="12" height="12"><path d="M1 4 L4 2 L11 8 L11 3 L8 1 L1 8 L4 10 L11 4" stroke="#9a6ae8" stroke-width="2" fill="none"/></svg>
<svg style="left:203.5px;top:488.5px" width="12" height="12"><path d="M1 4 L4 2 L11 8 L11 3 L8 1 L1 8 L4 10 L11 4" stroke="#9a6ae8" stroke-width="2" fill="none"/></svg>
<svg style="left:224px;top:488.5px" width="12" height="12"><path d="M1 4 L4 2 L11 8 L11 3 L8 1 L1 8 L4 10 L11 4" stroke="#9a6ae8" stroke-width="2" fill="none"/></svg>
<svg style="left:203.5px;top:488.5px" width="12" height="12"><circle cx="9" cy="9" r="2.6" fill="#30c060"/><path d="M9 7.5 V10.5 M7.5 9 H10.5" stroke="#fff" stroke-width="0.7"/></svg>
<svg style="left:244px;top:488.5px" width="12" height="12"><rect x="2" y="1.5" width="8" height="9" fill="#1a90e0"/><rect x="2" y="1.5" width="8" height="3" fill="#60c0ff"/></svg>
<svg style="left:265px;top:488.5px" width="12" height="12"><path d="M6 1 Q11 1 11 6 Q11 8 9 8 Q7 8 7 10 Q6 11 5 11 Q1 11 1 6 Q1 1 6 1Z" fill="#60b8f0"/><circle cx="4" cy="4" r="1.2" fill="#f04040"/><circle cx="7" cy="3" r="1.1" fill="#f0d020"/><circle cx="3.5" cy="7" r="1.1" fill="#40c040"/></svg>
<svg style="left:286px;top:488.5px" width="12" height="12"><rect x="1" y="1" width="10" height="10" rx="1.5" fill="#f0509a"/><text x="6" y="8" font-size="5" fill="#fff" text-anchor="middle" font-family="Liberation Sans">hdb</text></svg>
<svg style="left:306.5px;top:488.5px" width="12" height="12"><rect x="1" y="2" width="9" height="8" fill="#c07030"/><rect x="3" y="1" width="7" height="7" fill="#e0a050"/><rect x="4" y="3" width="4" height="4" fill="#5a4aa0"/><circle cx="9.5" cy="9.5" r="2" fill="#40a040"/></svg>
<svg style="left:327px;top:488.5px" width="12" height="12"><circle cx="6" cy="6.5" r="4.8" fill="#1a1a1a" stroke="#e0e0e0" stroke-width="0.9"/><path d="M6 3.5 V7 L7.5 8" stroke="#e0e0e0" stroke-width="0.8" fill="none"/><circle cx="9.5" cy="2.5" r="2.5" fill="#f01818"/></svg>
<svg style="left:348px;top:488.5px" width="12" height="12"><rect x="1" y="1" width="10" height="10" fill="#18e018"/><path d="M2 4 L9 9 L10 6 L4 2Z" fill="#101010"/></svg>
<svg style="left:368.5px;top:488.5px" width="12" height="12"><circle cx="6" cy="6" r="5.2" fill="#f8f8f8"/><path d="M6 1.8 Q6.5 5.5 10.2 6 Q6.5 6.5 6 10.2 Q5.5 6.5 1.8 6 Q5.5 5.5 6 1.8Z" fill="#3a50e8"/></svg>
<svg style="left:389px;top:488.5px" width="12" height="12"><rect x="1" y="1" width="10" height="10" fill="#2040f0"/><path d="M1 1 H11 V6 Q6 4 1 8Z" fill="#f0c000"/><path d="M5 11 L11 5 V11Z" fill="#f08000"/></svg>
<div style="left:406px;top:484px;width:19px;height:21px;background:#2e2e2e;border-radius:2px"></div>
<svg style="left:409.5px;top:488.5px" width="12" height="12"><rect x="1.5" y="1" width="9" height="10" fill="#2040f0"/><rect x="6" y="1" width="4.5" height="10" fill="#f09000"/><rect x="1.5" y="1" width="4.5" height="4" fill="#f0e040"/><rect x="1.5" y="5" width="4.5" height="6" fill="#2050f0"/></svg>
<div style="left:411.5px;top:503.3px;width:8.0px;height:1.1999999999999886px;background:#60b8f0;border-radius:1px"></div>
<div style="left:290.7px;top:503.3px;width:2.6000000000000227px;height:1.0px;background:#909090;border-radius:1px"></div>
<div style="left:311.2px;top:503.3px;width:2.6000000000000227px;height:1.0px;background:#909090;border-radius:1px"></div>
<div style="left:331.7px;top:503.3px;width:2.6000000000000227px;height:1.0px;background:#909090;border-radius:1px"></div>
<div style="left:352.7px;top:503.3px;width:2.6000000000000227px;height:1.0px;background:#909090;border-radius:1px"></div>
<div style="left:373.2px;top:503.3px;width:2.6000000000000227px;height:1.0px;background:#909090;border-radius:1px"></div>
<div style="left:393.7px;top:503.3px;width:2.6000000000000227px;height:1.0px;background:#909090;border-radius:1px"></div>
<svg style="left:694px;top:491px" width="7" height="6"><path d="M1 4.5 L3.5 2 L6 4.5" stroke="#e0e0e0" stroke-width="0.8" fill="none"/></svg>
<svg style="left:707.5px;top:490px" width="9" height="9"><circle cx="4.5" cy="4.5" r="3.7" fill="#222" stroke="#ddd" stroke-width="0.7"/><circle cx="2.5" cy="6" r="1.6" fill="#f01010"/></svg>
<svg style="left:722.7px;top:490px" width="9" height="9"><circle cx="4.5" cy="4.5" r="4" fill="#e0c020"/><path d="M4.5 0.5 V8.5 M0.5 4.5 H8.5" stroke="#d02020" stroke-width="1.3"/><circle cx="4.5" cy="4.5" r="1.5" fill="#30a030"/></svg>
<svg style="left:736.8px;top:490px" width="9" height="9"><rect x="1" y="1" width="5" height="5" fill="#2a8ae0"/><rect x="3" y="3" width="5" height="5" fill="#40c080"/><path d="M5 1 L8 4" stroke="#fff" stroke-width="0.7"/></svg>
<svg style="left:752.8px;top:490px" width="9" height="9"><rect x="0.5" y="0.5" width="8" height="8" fill="#18c018"/><path d="M1.5 2.5 L6.5 7.5 L7.5 5 L3.5 1.5Z" fill="#101010"/></svg>
<svg style="left:767.5px;top:490px" width="9" height="9"><path d="M2 0.5 H6 L7.5 2 V8.5 H2Z" fill="none" stroke="#e0e0e0" stroke-width="0.7"/><rect x="3" y="4" width="3" height="3" fill="#e0e0e0"/></svg>
<svg style="left:783.0px;top:490px" width="9" height="9"><path d="M4.5 0.5 L8 2 V5 Q8 8 4.5 8.8 Q1 8 1 5 V2Z" fill="#1a70d8"/><path d="M4.5 0.5 L8 2 V5 Q8 8 4.5 8.8Z" fill="#30c080"/></svg>
<svg style="left:798.2px;top:490px" width="9" height="9"><path d="M4.5 0.5 V6 M2 4 L4.5 7 L7 4" stroke="#60b0f0" stroke-width="1.2" fill="none"/><path d="M1.5 8.3 H7.5" stroke="#60b0f0" stroke-width="0.8"/></svg>
<div style="left:813.5px;top:490.10px;line-height:10.4px;font-size:8px;font-family:'Liberation Sans',sans-serif;color:#e8e8e8;white-space:pre;">あ</div>
<svg style="left:827.5px;top:490px" width="9" height="9"><rect x="0.5" y="1" width="7" height="5" fill="none" stroke="#e0e0e0" stroke-width="0.7"/><path d="M4 6 V8 M2 8.3 H6" stroke="#e0e0e0" stroke-width="0.7"/><rect x="5.5" y="0.3" width="3" height="3" fill="#e0e0e0"/></svg>
<svg style="left:839.0px;top:490px" width="9" height="9"><path d="M1 3 H3 L5.5 1 V8 L3 6 H1Z" fill="none" stroke="#e0e0e0" stroke-width="0.7"/><path d="M6.5 3 Q8 4.5 6.5 6" stroke="#e0e0e0" stroke-width="0.6" fill="none"/></svg>
<div style="left:870.7px;top:488.10px;line-height:7.8px;font-size:6px;font-family:'Liberation Sans',sans-serif;color:#f0f0f0;white-space:pre;transform:scaleX(0.856);transform-origin:0 50%;">14:55:08</div>
<div style="left:855px;top:494.90px;line-height:7.8px;font-size:6px;font-family:'Liberation Sans',sans-serif;color:#f0f0f0;white-space:pre;transform:scaleX(0.955);transform-origin:0 50%;">2026/01/18 日</div>
</body></html>
